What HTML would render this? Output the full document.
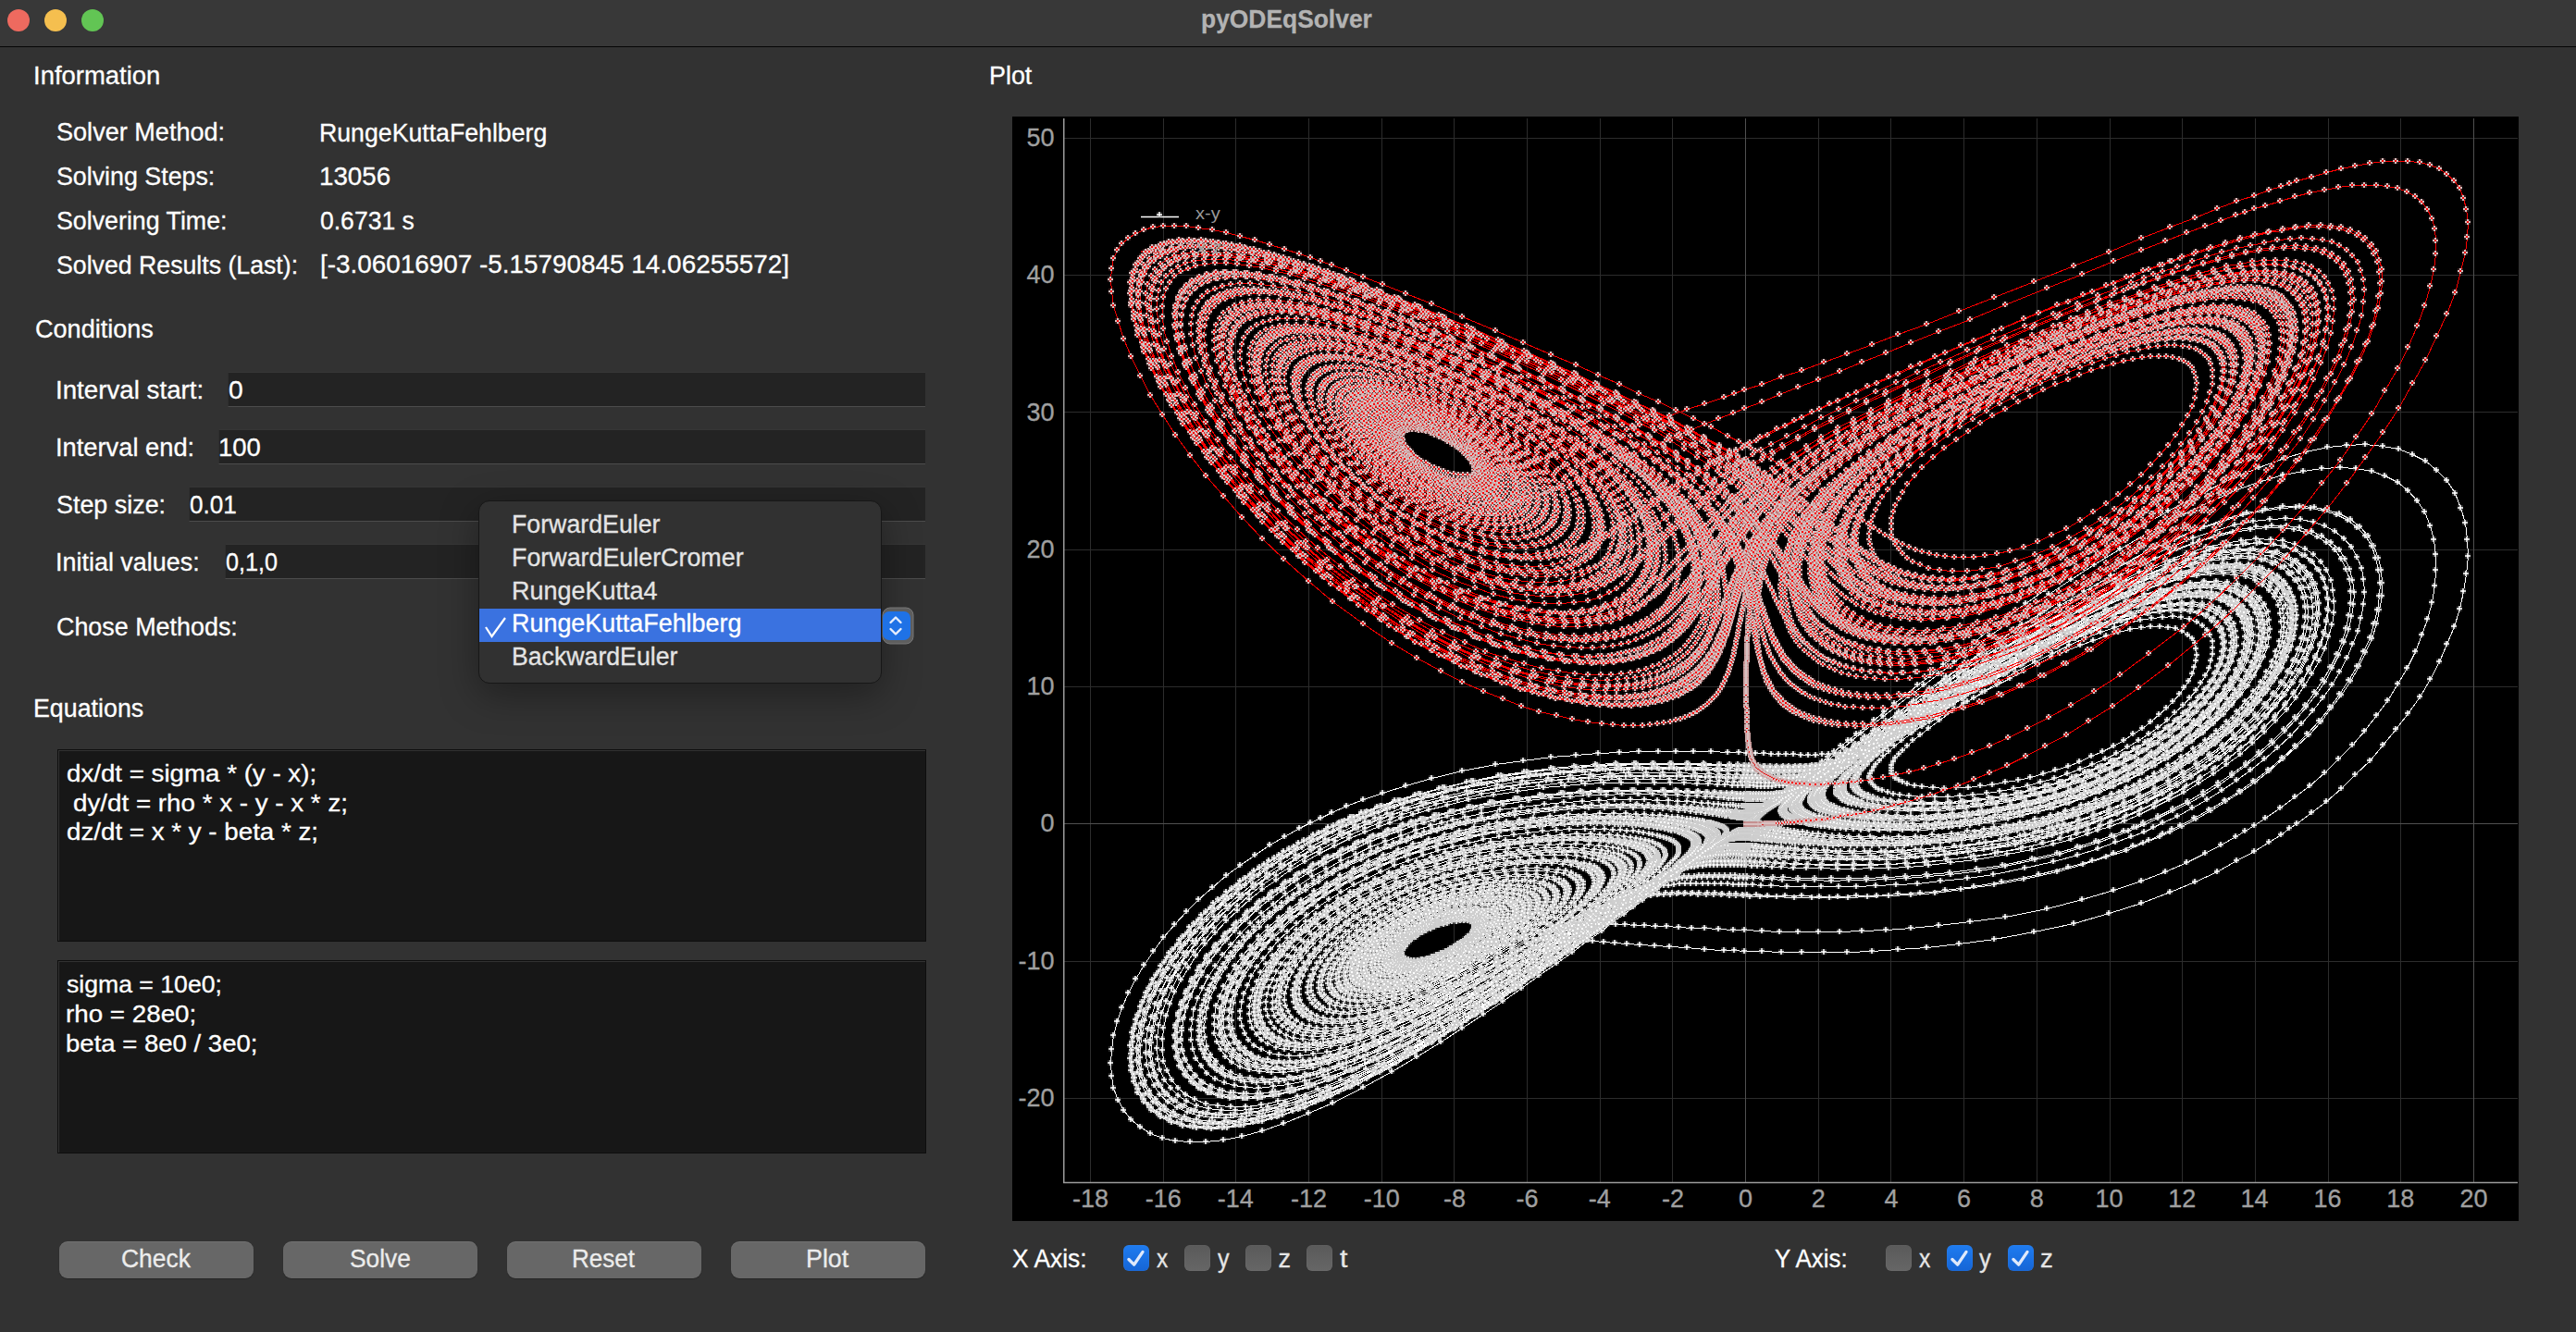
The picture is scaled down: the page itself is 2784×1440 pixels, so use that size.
<!DOCTYPE html>
<html><head><meta charset="utf-8"><title>pyODEqSolver</title>
<style>
html,body{margin:0;padding:0}
body{width:2784px;height:1440px;background:#323232;overflow:hidden;position:relative;font-family:"Liberation Sans",sans-serif;color:#fff}
.t{position:absolute;white-space:pre;line-height:1.117;transform-origin:0 0;-webkit-text-stroke:0.3px currentColor}
.titlebar{position:absolute;left:0;top:0;width:2784px;height:50px;background:#383838;border-bottom:1px solid #050505}
.tl{position:absolute;top:10px;width:24px;height:24px;border-radius:50%}
.field{position:absolute;right:1784px;height:38px;box-sizing:border-box;background:#232323;border-top:1px solid #363636;border-left:1px solid #2e2e2e;border-bottom:1.5px solid #4c4c4c}
.te{position:absolute;left:62px;width:939px;background:#171717;border:1px solid #0e0e0e;box-shadow:inset 1px 1px 0 #323232;box-sizing:border-box}
.btn{position:absolute;top:1342px;width:210px;height:40px;border-radius:9px;background:#676767;box-shadow:inset 0 1px 0 rgba(255,255,255,0.08), 0 1px 1px rgba(0,0,0,0.25)}
.popup{position:absolute;left:517px;top:541px;width:436px;height:198px;box-sizing:border-box;background:#313131;border:1px solid #171717;border-radius:12px;box-shadow:0 12px 40px rgba(0,0,0,0.35)}
.hl{position:absolute;left:518px;top:658px;width:434px;height:36px;background:#3a72e0}
.plotbg{position:absolute;left:1094px;top:126px;width:1628px;height:1194px;background:#000}
.plot{position:absolute;left:1094px;top:126px}
.ns{-webkit-text-stroke:0}
.cb{position:absolute;width:28px;height:28px;border-radius:6px;background:linear-gradient(#5a5a5a,#666);box-shadow:inset 0 0 0 0.5px rgba(255,255,255,0.06)}
.cb.on{background:linear-gradient(#1f7cf0,#1565d6)}
.cb svg{position:absolute;left:0;top:0}
</style></head><body>
<div class="titlebar"></div>
<div class="tl" style="left:8px;background:#ee6a5f"></div>
<div class="tl" style="left:48px;background:#f5bf4f"></div>
<div class="tl" style="left:88px;background:#62c554"></div>

<div class="field" style="left:246px;top:402px"></div>
<div class="field" style="left:236px;top:464px"></div>
<div class="field" style="left:204px;top:526px"></div>
<div class="field" style="left:243px;top:588px"></div>

<div class="te" style="top:810px;height:208px"></div>
<div class="te" style="top:1038px;height:209px"></div>

<div class="btn" style="left:64px"></div>
<div class="btn" style="left:306px"></div>
<div class="btn" style="left:548px"></div>
<div class="btn" style="left:790px"></div>

<div class="plotbg"></div>
<svg class="plot" width="1628" height="1194" viewBox="1094 126 1628 1194">
<defs>
<clipPath id="cpd"><rect x="1151" y="127" width="1571" height="1151"/></clipPath>
<marker id="mw" markerWidth="6" markerHeight="6" refX="3" refY="3" markerUnits="userSpaceOnUse" shape-rendering="crispEdges"><path d="M0 0h6v6h-6z" fill="#c8c8c8" fill-opacity="0.22"/><path d="M2 0h2v6h-2zM0 2h6v2h-6z" fill="#d0d0d0"/><path d="M2 2h2v2h-2z" fill="#ffffff"/></marker>
<marker id="mr" markerWidth="6" markerHeight="6" refX="3" refY="3" markerUnits="userSpaceOnUse" shape-rendering="crispEdges"><path d="M0 0h6v6h-6z" fill="#b46464" fill-opacity="0.3"/><path d="M2 0h2v6h-2zM0 2h6v2h-6z" fill="#d8c0c0"/><path d="M2 2h2v2h-2z" fill="#ff0000"/></marker>
<path id="dw" d="M1887 876l0 0 0 0 1 0 1 0 1 0 1 0 1 0 1 0 1-1 1 0 1 0 1 0 1-1 1 0 1 0 1-1 2 0 1-1 1-1 2-1 1-1 2-1 2-1 2-1 2-1 2-2 2-2 3-2 3-2 3-2 3-2 3-3 4-3 4-3 4-4 5-4 5-4 6-4 6-5 6-5 7-6 7-6 8-6 9-7 9-7 10-8 11-9 11-9 12-9 13-11 14-10 14-12 16-12 17-12 17-14 19-14 20-14 21-15 23-16 24-16 26-17 28-18 32-18 40-21 28-14 30-12 27-10 24-7 23-5 21-2 20-1 19 2 17 3 15 6 14 7 12 10 11 11 9 14 6 16 5 16 2 18 1 18 -2 19 -3 19 -4 19 -6 19 -8 19 -8 19 -10 19 -11 19 -13 18 -13 17 -14 17 -14 17 -16 15 -15 15 -16 14 -16 12 -16 12 -8 5 -9 7 -13 8 -16 10 -19 10 -21 12 -24 11 -27 11 -31 12 -35 11 -38 11 -43 9 -43 8 -38 5 -35 4 -31 2 -28 2 -27 1 -25 0 -24 0 -22 0 -21-1 -19 0 -11-1 -11 0 -21-1 -19-2 -19-1 -16-1 -16-1 -14-1 -13-1 -12-1 -12-1 -11-1 -10 0 -10-1 -9 0 -8-1 -8 0 -8 0 -7 0 -7 1 -6 0 -7 1 -6 0 -5 1 -6 1 -5 1 -6 1 -5 2 -5 1 -6 2 -5 1 -5 2 -5 1 -6 2 -5 1 -5 2 -5 1 -5 1 -4 1 -5 0 -4 1 -4 0 -3 0 -3-1 -3-1 -2-1 -1-1 -1-2 0-2 1-3 1-2 2-2 2-3 2-2 3-3 4-2 3-3 4-2 4-2 5-2 4-2 5-2 5-1 4-1 5-2 5 0 4-1 4 0 4 0 3 1 2 1 2 2 0 2 0 2 -1 2 -1 2 -2 3 -3 2 -3 3 -4 3 -4 2 -4 3 -4 2 -5 3 -5 2 -5 2 -5 2 -5 2 -5 1 -5 1 -4 1 -4 0 -3 0 -3-1 -3-1 -1-1 -2-2 0-2 0-2 1-2 1-3 2-2 2-3 3-2 3-3 4-2 4-3 4-2 4-2 5-3 4-2 5-1 5-2 5-1 5-2 5 0 5-1 4 0 4 0 3 1 3 1 2 1 1 2 0 2 -1 2 -1 3 -2 2 -3 3 -3 3 -3 3 -5 2 -4 3 -5 3 -5 3 -5 2 -5 2 -5 2 -6 2 -5 2 -5 1 -4 1 -4 0 -4 0 -4 0 -3-1 -2-1 -2-1 -1-2 0-3 1-2 1-2 1-3 3-3 2-2 3-3 4-3 3-2 5-3 4-2 5-3 4-2 5-2 5-2 6-2 5-1 5-1 5-1 5 0 5-1 4 1 3 0 3 2 2 1 1 2 0 2 -1 3 -2 2 -2 3 -3 3 -3 3 -4 3 -4 3 -5 3 -5 2 -5 3 -5 3 -6 2 -5 2 -6 2 -5 2 -5 1 -5 1 -5 1 -4 0 -3 0 -4-1 -2-1 -2-2 -1-2 0-2 0-3 1-2 2-3 2-3 2-2 3-3 4-3 4-3 4-3 4-2 5-3 5-2 5-2 5-2 6-2 5-2 6-1 5-1 5-1 5 0 5 0 4 1 3 0 3 2 1 2 1 2 -1 2 -1 3 -2 3 -2 3 -4 3 -3 3 -5 3 -4 3 -5 3 -6 3 -5 3 -6 3 -6 2 -6 2 -5 2 -6 2 -5 1 -5 1 -5 0 -4 0 -4 0 -3-1 -2-1 -2-2 -1-2 0-3 0-2 1-3 2-3 2-3 3-3 3-3 4-3 4-2 4-3 5-3 5-3 5-2 6-2 5-3 6-1 6-2 5-1 6-2 6 0 5-1 5 0 4 1 4 1 2 1 2 2 1 2 0 3 -2 3 -1 3 -3 3 -3 3 -4 3 -4 3 -5 3 -5 4 -6 3 -6 3 -6 3 -6 3 -6 2 -6 2 -6 2 -6 1 -5 1 -5 1 -5 0 -4 0 -3-1 -3-1 -2-2 -2-2 0-2 0-3 1-3 1-3 2-3 3-3 3-3 4-3 4-3 4-3 5-3 5-3 5-3 6-2 5-2 6-3 6-1 6-2 6-1 6-1 6-1 5 0 5 0 5 0 3 1 3 2 2 2 0 3 0 2 -2 3 -2 3 -2 3 -4 4 -4 3 -5 3 -5 4 -5 3 -6 4 -6 3 -7 3 -6 3 -7 3 -6 2 -7 2 -6 1 -5 1 -5 1 -5 0 -4 0 -4-1 -3-1 -2-2 -2-2 -1-3 0-2 1-3 2-3 2-4 2-3 4-3 3-3 4-4 5-3 5-3 5-3 5-3 6-2 6-3 6-2 7-2 6-2 6-2 6-1 7-1 5 0 6 0 5 0 4 1 3 2 3 2 1 2 0 3 -1 2 -2 4 -3 3 -3 3 -4 4 -4 3 -6 4 -5 4 -6 3 -7 4 -6 3 -7 3 -7 3 -7 3 -7 2 -6 2 -6 1 -6 1 -5 1 -5 0 -4 0 -4-1 -3-2 -2-2 -2-2 0-3 0-3 1-3 2-3 2-3 3-4 3-3 4-4 4-3 5-3 5-4 6-3 5-3 6-3 7-2 6-3 7-2 6-2 7-1 7-2 6-1 6 0 6 0 6 0 4 1 4 1 2 2 2 3 0 3 -1 3 -2 3 -2 3 -4 4 -4 3 -4 4 -6 4 -5 4 -7 4 -6 3 -7 4 -7 4 -8 3 -7 3 -7 2 -7 2 -7 2 -6 1 -6 1 -5 0 -5 0 -4-1 -3-1 -3-2 -2-2 -1-3 0-3 1-3 1-3 2-4 3-3 3-4 3-4 5-3 4-4 6-3 5-4 6-3 6-3 6-3 7-2 7-3 7-2 7-2 7-2 7-1 6-1 7 0 6 0 6 0 4 1 4 2 3 2 1 2 0 3 -1 3 -2 4 -2 3 -4 4 -4 4 -5 4 -6 4 -6 4 -7 4 -7 4 -7 4 -8 4 -7 3 -8 3 -8 3 -7 2 -7 2 -6 1 -6 1 -6 1 -5-1 -5 0 -3-1 -3-2 -3-3 -1-2 0-3 0-4 1-3 2-4 3-4 3-3 4-4 4-4 5-4 5-3 6-4 6-4 6-3 7-3 7-3 7-3 7-2 7-2 7-2 8-2 7-1 7 0 7-1 6 0 6 1 4 2 4 1 2 3 1 3 -1 3 -1 3 -2 4 -3 3 -4 4 -5 5 -5 4 -7 4 -6 4 -7 5 -8 4 -8 4 -8 4 -8 3 -8 4 -8 2 -8 3 -7 2 -7 1 -6 1 -6 0 -5 0 -5-1 -4-1 -3-2 -2-3 -1-3 -1-3 1-3 1-4 2-4 3-4 3-4 4-4 4-4 5-4 6-4 5-3 7-4 6-4 7-3 7-3 8-3 7-2 8-3 8-2 7-1 8-2 7-1 7 0 7 0 7 0 5 2 4 1 3 3 2 2 0 3 -1 4 -2 3 -3 4 -4 4 -4 5 -6 4 -6 5 -7 4 -7 5 -8 4 -8 5 -8 4 -9 4 -9 4 -8 3 -8 3 -8 2 -8 2 -7 1 -6 1 -6 0 -5 0 -5-1 -4-2 -3-2 -2-3 -1-3 -1-4 1-4 2-3 2-4 3-5 3-4 4-4 5-4 5-4 6-4 6-4 7-4 7-4 7-3 7-4 8-3 8-2 8-3 8-2 8-2 8-1 8-1 8-1 7 0 7 1 6 1 5 1 3 3 2 2 0 3 0 4 -2 3 -3 4 -3 5 -5 4 -5 5 -7 5 -7 4 -7 5 -8 5 -9 5 -9 5 -9 4 -9 4 -9 4 -9 3 -8 3 -8 2 -8 1 -7 1 -7 1 -6 0 -5-1 -5-1 -3-2 -3-3 -2-3 -1-3 0-4 1-4 2-4 3-5 3-4 4-5 4-4 5-4 6-5 6-4 6-4 7-4 8-4 7-4 8-3 8-3 9-3 8-3 9-2 8-2 9-1 8-1 8-1 8 0 7 0 7 2 5 1 3 3 2 2 1 3 0 4 -1 4 -3 4 -4 4 -4 5 -6 5 -6 5 -8 5 -8 5 -8 5 -9 6 -9 5 -10 4 -10 5 -10 4 -9 3 -9 4 -9 2 -8 2 -8 1 -7 1 -6 0 -6 0 -6-1 -4-2 -3-2 -3-3 -1-4 -1-4 1-4 1-4 2-5 3-4 4-5 4-5 5-4 6-5 6-5 6-4 7-5 8-4 7-4 9-3 8-4 9-3 8-3 9-3 9-2 9-2 9-1 9-2 8 0 9 0 7 0 7 2 6 1 4 3 2 2 1 3 0 4 -1 4 -3 4 -3 4 -5 5 -6 5 -6 5 -8 6 -8 6 -9 5 -10 6 -10 5 -10 6 -10 4 -11 5 -10 4 -10 4 -9 2 -9 3 -8 1 -8 2 -7 0 -7 0 -6-1 -5-2 -4-2 -3-3 -2-3 -1-4 0-4 1-5 2-5 2-4 4-5 4-5 5-5 5-5 6-5 6-5 7-4 8-5 8-4 8-5 9-3 9-4 9-3 9-3 10-3 9-3 10-1 9-2 9-1 9-1 9 0 8 1 7 1 6 2 4 2 3 3 1 3 0 3 -1 4 -2 4 -3 5 -4 4 -6 6 -7 5 -7 6 -9 6 -9 6 -11 6 -10 6 -11 6 -11 5 -11 5 -11 5 -11 4 -10 4 -9 2 -10 3 -8 1 -8 1 -7 0 -7 0 -6-2 -5-1 -4-3 -3-3 -1-4 -1-5 0-4 1-5 3-5 3-5 3-5 5-6 5-5 6-5 6-5 7-5 7-5 8-5 8-5 9-4 9-4 10-4 9-3 10-4 10-3 10-2 10-2 10-2 10-1 10-1 9 0 8 1 9 1 7 2 4 2 3 2 2 3 1 4 -1 3 -1 4 -3 4 -4 5 -5 5 -6 6 -8 6 -8 6 -10 7 -10 6 -11 7 -12 6 -12 7 -12 5 -12 6 -11 5 -11 4 -11 3 -10 3 -10 2 -9 2 -8 1 -7 0 -7-1 -6-1 -5-2 -5-3 -3-4 -1-4 -1-5 0-5 2-5 2-5 3-6 4-5 4-6 6-5 6-6 6-5 8-6 7-5 9-5 8-5 9-5 10-4 10-4 10-4 10-3 11-3 11-3 10-3 11-1 10-2 10-1 10 0 10 0 9 1 8 1 7 2 4 3 2 3 2 3 0 3 -1 3 -1 4 -3 5 -4 4 -5 6 -6 5 -8 7 -9 6 -11 8 -11 7 -12 7 -13 7 -13 7 -12 6 -13 6 -13 6 -12 4 -11 4 -11 3 -10 3 -10 2 -9 1 -8 0 -8-1 -6-1 -6-2 -5-3 -3-3 -3-5 -1-5 0-5 1-5 2-6 3-5 4-6 4-6 5-6 6-6 7-6 7-6 8-5 8-6 9-5 10-5 10-5 10-5 10-4 11-4 11-3 11-3 12-3 11-3 11-1 11-2 11-1 10 0 10 0 10 1 10 1 6 3 5 2 2 3 2 2 1 4 0 3 -2 4 -2 4 -3 4 -5 5 -5 6 -7 6 -9 6 -10 8 -12 8 -13 8 -13 8 -14 8 -14 7 -14 7 -14 7 -14 5 -12 5 -12 4 -12 3 -11 3 -10 2 -9 1 -9 0 -8-1 -7-1 -6-2 -4-4 -4-4 -3-4 -1-5 0-6 1-6 2-6 3-6 4-6 5-6 5-7 6-6 7-6 8-7 8-6 8-6 10-5 10-6 10-5 10-5 12-4 11-5 12-4 11-3 12-3 12-3 12-2 12-2 12-1 11-1 11 0 10 0 11 1 8 2 6 2 5 2 3 3 2 3 1 3 0 3 -1 3 -1 4 -3 5 -4 4 -5 5 -6 6 -7 6 -9 7 -11 8 -13 9 -15 9 -15 9 -16 9 -15 8 -16 8 -15 7 -14 6 -14 5 -13 4 -12 4 -12 3 -11 2 -10 1 -9 0 -8-1 -7-1 -7-3 -5-3 -4-4 -3-5 -2-6 0-6 1-6 2-6 3-7 4-7 4-6 6-7 6-7 7-7 8-7 8-6 9-6 10-7 10-5 11-6 11-5 12-6 11-4 13-5 12-4 13-3 13-3 12-3 13-2 13-2 12-1 12-1 12 0 11 1 12 1 8 1 6 2 5 3 4 2 2 3 2 2 0 3 0 4 -1 3 -2 4 -3 4 -4 5 -5 5 -6 5 -7 6 -9 7 -11 8 -14 10 -15 10 -17 10 -17 10 -18 10 -17 8 -17 8 -16 8 -15 6 -14 5 -14 4 -12 4 -12 2 -12 2 -10 0 -9 0 -9-1 -7-2 -6-3 -5-5 -4-5 -3-5 -1-6 0-7 2-7 2-7 4-7 4-7 5-8 6-7 7-7 7-8 9-7 9-7 9-7 11-6 11-7 11-6 12-5 12-6 13-5 13-4 13-5 14-3 13-4 14-3 14-2 13-2 13-1 13-1 13-1 12 0 13 1 9 1 9 2 6 2 5 2 3 2 3 2 2 3 1 3 0 3 0 3 -1 3 -3 4 -2 4 -4 4 -5 5 -6 5 -7 6 -8 7 -11 8 -13 9 -16 11 -16 10 -17 10 -18 11 -19 11 -20 10 -19 9 -17 8 -17 7 -16 5 -14 5 -14 4 -13 3 -12 1 -11 1 -10 0 -9-2 -8-2 -7-4 -5-4 -5-6 -2-6 -2-6 0-8 1-7 3-8 3-7 4-8 6-9 6-8 7-8 8-8 8-7 10-8 10-8 10-7 11-7 12-6 13-7 13-6 13-5 14-6 14-4 14-5 15-4 14-3 15-3 15-3 14-2 14-1 14-1 14-1 13 0 14 1 10 1 9 1 7 2 5 1 5 2 4 2 3 2 3 2 1 2 1 3 0 3 0 2 -1 3 -2 4 -2 3 -3 4 -4 4 -5 5 -6 5 -7 6 -9 7 -12 9 -15 10 -15 11 -17 11 -17 10 -18 11 -19 12 -21 11 -23 12 -20 10 -20 9 -19 8 -17 6 -16 5 -14 4 -14 3 -13 1 -12 1 -11-1 -10-2 -8-3 -7-4 -6-5 -4-6 -3-7 -2-7 0-8 1-9 3-8 3-9 5-9 5-9 7-9 7-8 8-9 9-9 10-8 11-9 11-8 12-7 12-8 13-7 14-7 14-6 14-6 15-5 16-5 15-5 16-4 15-3 16-3 16-3 15-2 15-2 15-1 15 0 15-1 14 1 12 0 9 1 8 1 7 1 6 2 5 1 4 1 4 2 3 1 3 2 2 2 2 2 1 1 1 3 0 2 0 2 -1 2 -1 3 -2 3 -3 3 -3 3 -3 4 -5 4 -5 5 -7 6 -9 7 -13 9 -13 10 -13 9 -15 10 -16 11 -18 11 -18 11 -19 12 -20 12 -22 13 -23 13 -25 12 -23 11 -22 9 -19 8 -18 5 -17 5 -16 3 -14 2 -13 0 -12 0 -11-2 -10-3 -8-5 -7-5 -5-7 -4-8 -2-8 -1-9 1-10 2-9 3-10 5-10 5-11 7-10 7-10 9-10 9-10 10-10 11-9 12-9 12-9 13-9 14-8 14-8 15-7 15-7 15-6 16-6 17-6 16-5 17-4 16-4 17-4 16-2 16-3 15-2 14-1 13-1 9-1 11 0 11-1 11 0 10 0 8 0 8 0 7 1 6 0 5 0 5 1 2 0 2 0 4 1 4 0 3 0 4 1 4 1 4 0 4 1 3 0 4 1 3 1 3 1 3 1 2 0 3 1 2 1 2 1 1 1 2 1 1 1 1 1 1 1 0 1 1 1 0 2 0 1 -1 1 0 2 -1 1 -1 2 -2 2 -2 2 -2 2 -3 3 -3 2 -4 4 -4 3 -6 5 -6 5 -7 4 -7 5 -7 6 -8 5 -8 7 -10 6 -10 7 -11 8 -13 9 -14 10 -16 11 -18 12 -19 13 -20 13 -21 13 -21 14 -24 14 -25 14 -28 15 -28 14 -26 11 -24 10 -21 7 -20 5 -18 4 -17 2 -15 0 -14-1 -12-2 -11-4 -10-5 -8-7 -7-8 -5-10 -3-10 -1-11 0-11 1-12 3-12 5-12 5-13 7-12 7-12 9-13 10-12 10-12 12-11 12-12 13-11 14-10 14-10 15-10 16-9 16-8 16-8 16-8 17-6 16-6 16-6 8-3 10-2 15-5 16-4 21-4 23-5 27-4 26-3 22-3 21-1 19-1 18-1 18 0 17 0 15 1 14 0 12 1 11 0 9 1 8 0 7 1 6 0 5 0 5 1 4 0 4 0 4 0 1 0 1 0 2 0 3 0 3 0 3 0 2 0 3 0 3 0 3 0 3 0 3 0 3-1 2 0 3-1 3 0 3-1 2-1 3-1 3-1 3-1 3-1 3-2 3-1 4-2 3-2 4-2 4-2 4-3 5-3 4-3 6-3 5-4 6-4 7-5 7-4 8-6 9-6 9-6 11-7 12-8 12-9 15-10 17-11 19-12 19-12 20-13 22-13 23-14 25-13 28-15 26-12 24-11 22-8 20-7 19-5 17-3 15-2 15 0 13 1 12 3 10 4 9 5 7 6 6 8 4 9 3 10 1 10 -1 11 -2 11 -3 12 -5 11 -5 12 -7 11 -8 12 -9 12 -9 11 -11 11 -11 11 -13 10 -13 10 -13 10 -15 9 -14 9 -16 9 -16 8 -16 7 -16 7 -17 6 -16 6 -17 5 -15 4 -10 3 -10 2 -14 3 -17 4 -20 3 -23 3 -23 3 -20 1 -19 2 -18 0 -17 0 -16 0 -14 0 -12 0 -11-1 -10-1 -8 0 -8-1 -7 0 -7-1 -5 0 -5-1 -5 0 -4-1 -4 0 -3 0 -3-1 -3 0 -2 0 -3 0 -2-1 -2 0 -1 0 -1 0 -1 0 -1 0 -1 0 -1 0 -2 0 -1 0 -1 0 -2 0 -1 0 -2 1 -1 0 -2 0 -1 0 -1 0 -2 1 -1 0 -2 1 -1 0 -2 1 -1 0 -2 1 -2 1 -1 1 -2 1 -2 1 -2 1 -2 1 -3 2 -2 1 -3 2 -2 2 -4 2 -3 2 -3 3 -4 2 -5 3 -4 4 -5 3 -5 4 -6 4 -7 5 -7 5 -7 5 -8 6 -10 7 -9 7 -12 8 -12 8 -14 10 -15 11 -18 13 -19 13 -19 13 -21 13 -22 14 -22 15 -25 14 -26 15 -29 16 -30 15 -28 12 -25 10 -22 7 -20 5 -19 4 -17 2 -16 0 -14-1 -13-3 -12-5 -10-6 -9-7 -7-9 -5-11 -3-11 -2-12 0-12 2-13 3-13 4-14 5-13 7-14 8-13 9-14 10-13 11-13 12-13 12-12 14-12 14-11 15-11 15-10 16-10 16-9 16-9 17-7 16-8 15-6 11-4 11-4 17-6 18-5 22-6 26-6 31-6 26-4 28-4 24-2 22-1 21-1 19-1 19 0 18 0 18 0 16 0 15 1 12 0 10 1 8 0 8 0 5 1 3 0 3 0 4 0 5 0 5 0 5 0 5 0 4 0 5 0 5 0 5 0 4-1 5 0 4-1 4 0 5-1 4-1 4-1 4-2 4-1 5-2 4-1 5-2 4-3 5-2 5-3 6-3 6-3 6-3 6-4 7-5 8-5 8-5 9-5 10-7 11-7 12-7 13-8 15-10 16-10 19-11 20-12 22-12 23-12 24-12 22-11 21-8 18-7 17-5 17-5 15-2 14-2 12-1 12 1 11 2 9 3 8 4 6 6 5 6 4 8 1 8 1 9 -1 9 -2 9 -4 10 -4 9 -6 10 -6 10 -8 10 -8 9 -9 10 -10 9 -11 9 -12 9 -12 9 -13 8 -13 8 -14 7 -15 7 -15 7 -15 6 -16 6 -16 5 -17 4 -16 5 -16 3 -17 3 -16 3 -16 2 -15 2 -15 1 -15 1 -15 1 -12 0 -12 0 -9-1 -8 0 -8-1 -6 0 -7-1 -5-1 -6 0 -5-1 -4-1 -5-1 -3-1 -4-1 -3-1 -3-1 -2-1 -3-1 -1-2 -2-1 -1-1 -1-2 -1-1 0-2 0-1 0-2 1-2 1-2 1-2 2-2 2-2 3-3 3-3 4-4 5-4 6-4 7-6 9-6 8-6 9-7 9-7 11-7 11-8 13-9 14-10 16-11 18-12 19-12 20-13 21-12 22-14 23-13 26-14 28-14 25-12 24-10 21-7 19-6 18-4 17-3 15-1 14 0 13 1 11 3 10 5 8 5 7 7 5 9 4 9 2 10 0 10 -1 11 -2 11 -4 12 -5 11 -6 12 -7 11 -8 12 -9 11 -10 12 -11 11 -12 10 -12 11 -14 10 -14 9 -14 9 -15 9 -16 8 -15 8 -17 7 -16 7 -17 6 -16 5 -17 5 -15 4 -10 3 -11 2 -17 4 -18 3 -21 4 -24 2 -21 2 -20 2 -18 1 -17 0 -17 0 -14 0 -13-1 -12 0 -10-1 -9 0 -8-1 -8 0 -6-1 -6-1 -6 0 -4-1 -5 0 -3 0 -4-1 -3 0 -3 0 -3-1 -2 0 -2 0 -2 0 -2 0 -2 0 -1 0 0 0 -1 0 -2 0 -1 0 -1 0 -1 0 -2 0 -1 0 -2 0 -1 0 -1 0 -2 0 -1 1 -1 0 -2 0 -1 1 -2 0 -1 1 -2 0 -1 1 -2 1 -1 1 -2 0 -2 1 -2 1 -2 2 -2 1 -2 1 -3 2 -2 2 -3 2 -3 2 -4 2 -3 3 -4 2 -4 3 -5 4 -5 3 -5 4 -6 4 -7 5 -7 5 -7 6 -9 6 -9 6 -10 7 -11 8 -12 9 -14 10 -16 11 -18 13 -19 13 -20 13 -20 14 -22 14 -23 14 -24 15 -27 15 -29 16 -30 14 -28 13 -25 9 -22 7 -20 6 -19 3 -17 2 -16 0 -14-1 -13-3 -12-5 -10-6 -9-7 -7-10 -5-10 -3-11 -2-12 0-13 2-13 3-13 4-14 6-13 7-14 7-14 9-13 11-13 10-13 12-13 13-12 14-12 14-11 15-11 15-11 16-9 16-10 16-8 16-8 16-7 15-6 13-5 12-4 18-6 19-6 23-6 26-6 33-6 27-4 27-3 23-2 22-2 21-1 19 0 18 0 18 0 18 0 16 0 15 1 12 0 9 1 8 0 7 0 5 1 3 0 4 0 4 0 5 0 5 0 5 0 5 0 5 0 5 0 5 0 5-1 4 0 5-1 4 0 4-1 5-1 4-1 4-1 5-1 4-2 5-2 4-2 5-2 5-2 5-3 5-3 6-3 6-3 6-4 7-4 8-5 8-5 9-6 9-6 11-6 11-8 13-8 15-9 16-10 18-11 20-11 20-12 23-12 25-13 22-10 20-8 19-7 17-6 16-4 15-3 14-2 13-1 12 0 11 2 9 3 8 4 7 5 5 7 3 7 2 8 1 9 -1 9 -2 9 -3 9 -4 10 -5 9 -7 10 -7 10 -8 9 -9 10 -10 9 -11 9 -11 9 -12 8 -13 8 -13 8 -14 8 -15 7 -15 6 -15 6 -16 6 -16 5 -16 5 -16 4 -17 4 -16 3 -16 3 -16 2 -16 1 -15 2 -15 1 -15 0 -13 0 -12 0 -9 0 -8-1 -8-1 -7 0 -6-1 -6-1 -5-1 -4-1 -5-1 -4-1 -3-1 -4-1 -2-1 -3-1 -2-1 -2-2 -1-1 -1-2 -1-1 -1-2 0-1 0-2 1-2 1-2 1-2 2-2 2-3 3-3 3-3 4-3 5-4 6-5 7-6 8-6 9-6 9-7 10-7 10-7 12-9 13-9 15-10 17-11 19-12 19-13 20-12 21-13 22-13 25-14 27-14 25-13 25-10 22-9 20-7 19-5 17-3 16-3 14 0 13 1 12 2 11 3 9 5 7 6 7 8 4 8 3 10 1 10 0 10 -2 11 -3 11 -4 11 -6 12 -6 11 -8 11 -8 12 -10 11 -10 11 -11 10 -12 11 -13 10 -13 10 -14 9 -15 9 -15 8 -16 8 -16 7 -16 7 -17 6 -16 6 -17 5 -16 5 -15 3 -11 3 -11 2 -17 4 -18 2 -21 3 -23 3 -20 1 -18 1 -18 1 -16 0 -15 0 -13 0 -12-1 -10 0 -9-1 -8-1 -8 0 -7-1 -6-1 -5 0 -5-1 -5 0 -4-1 -3 0 -4-1 -3 0 -2 0 -3-1 -2 0 -2 0 -2 0 -2 0 -2-1 -1 0 -1 0 -1 0 -2 0 -1 0 0 0 -1 0 0 0 -1 0 -1 0 -1 0 -1 0 -1 0 -1 0 -1 0 -1 0 -1 1 -1 0 -1 0 0 0 -1 1 -1 0 -1 0 -2 1 -1 0 -1 1 -1 0 -1 1 -1 1 -2 0 -1 1 -2 1 -1 1 -2 1 -2 2 -2 1 -2 2 -3 1 -2 2 -3 2 -3 2 -3 3 -4 2 -4 3 -4 3 -4 3 -5 4 -6 4 -6 4 -6 5 -7 5 -7 5 -8 6 -9 7 -10 7 -11 8 -12 9 -14 10 -15 11 -18 13 -18 12 -20 14 -20 13 -21 14 -22 15 -24 15 -25 15 -27 16 -32 17 -30 14 -25 11 -25 10 -23 7 -20 5 -19 3 -18 2 -16 0 -15-1 -14-4 -12-5 -10-6 -9-8 -7-10 -6-11 -3-12 -2-13 0-13 1-14 3-14 5-14 5-15 7-14 8-14 9-15 11-14 11-13 12-14 13-13 14-12 14-12 15-12 15-11 16-10 16-9 17-9 16-8 15-8 7-3 9-3 15-7 16-5 20-7 22-7 26-7 31-7 31-5 28-4 28-4 24-2 23-1 22-1 20-1 19 0 19 0 18 0 18 1 16 0 11 1 9 0 7 0 5 0 5 0 5 1 6 0 7 0 6 0 7 0 6 0 6 0 6 0 6 0 6 0 6-1 5-1 5 0 6-1 5-1 5-1 5-2 5-1 5-2 5-2 6-2 5-3 6-3 6-3 7-3 6-4 7-4 8-4 8-5 9-5 9-6 11-6 11-7 13-7 13-8 15-9 17-9 18-10 19-10 19-10 19-9 18-8 17-6 16-6 16-4 14-4 13-2 12-2 12 0 10 1 9 2 8 3 7 4 5 5 4 6 2 7 1 7 0 8 -1 8 -3 8 -4 9 -4 8 -6 9 -7 9 -7 8 -8 9 -9 8 -10 8 -11 8 -11 8 -12 7 -12 7 -13 7 -14 6 -14 6 -14 5 -15 6 -15 4 -15 4 -15 4 -16 3 -15 3 -15 2 -15 2 -15 1 -14 1 -15 0 -14 0 -10-1 -11-1 -8-1 -7-1 -6-1 -5-2 -4-1 -3-2 -3-2 -3-2 -1-2 -2-2 0-2 0-3 0-2 1-3 2-3 2-3 3-4 4-3 4-5 6-5 6-5 9-7 11-8 15-11 15-11 16-11 17-10 18-12 18-11 20-12 21-12 23-12 24-12 21-11 21-8 19-8 17-5 17-5 15-3 14-2 13-1 11 1 11 1 9 3 8 4 7 5 5 6 4 8 2 8 1 8 -1 9 -2 9 -3 10 -4 9 -5 10 -6 9 -8 10 -8 10 -9 9 -10 9 -10 9 -12 9 -12 9 -12 8 -14 8 -14 7 -14 7 -15 7 -15 6 -16 6 -16 5 -16 5 -16 4 -17 3 -16 4 -16 2 -16 3 -16 1 -15 2 -15 0 -15 1 -13 0 -10 0 -10 0 -9-1 -7-1 -7 0 -7-1 -5-1 -6-1 -5-1 -4 0 -4-2 -4-1 -3-1 -3-1 -2-1 -3-1 -1-2 -2-1 -1-1 -1-2 0-2 -1-1 1-2 0-2 1-2 1-2 2-2 2-3 3-2 3-3 4-4 4-4 6-5 7-5 9-7 9-6 9-7 10-7 11-8 12-8 13-9 15-10 17-12 19-12 19-12 20-13 21-13 23-13 24-14 27-14 26-12 24-11 22-8 20-7 19-5 17-3 15-2 15-1 13 1 12 2 10 4 9 5 8 6 6 7 4 9 3 9 1 10 -1 11 -1 11 -3 11 -5 11 -5 11 -7 12 -7 11 -9 11 -9 12 -11 11 -11 10 -12 10 -13 11 -13 9 -15 9 -14 9 -15 8 -16 8 -16 8 -17 6 -16 7 -17 5 -16 5 -16 5 -16 4 -13 3 -11 2 -18 3 -18 3 -22 3 -22 2 -19 1 -19 1 -17 1 -16 0 -15 0 -12-1 -11 0 -10-1 -9 0 -8-1 -7-1 -7 0 -6-1 -5 0 -5-1 -4 0 -4-1 -4 0 -3-1 -3 0 -3 0 -2-1 -2 0 -2 0 -2 0 -2-1 -2 0 -1 0 -1 0 -1 0 -2 0 0 0 -1 0 0 0 -1 0 -1 0 -1 0 -1 0 -1 0 -1 0 0 0 -1 0 -1 0 -1 0 -1 1 -1 0 -1 0 -1 0 -1 1 -1 0 -1 0 -1 1 -1 0 -1 1 -1 1 -2 0 -1 1 -1 1 -2 1 -1 1 -2 1 -2 1 -2 1 -2 2 -2 2 -3 1 -3 2 -3 2 -3 3 -3 2 -4 3 -4 3 -4 3 -5 3 -5 4 -6 4 -6 5 -7 5 -7 5 -8 6 -8 6 -10 7 -10 8 -12 8 -13 10 -15 10 -17 13 -18 12 -19 13 -19 14 -21 14 -22 14 -23 15 -24 15 -27 15 -29 17 -32 16 -30 13 -26 11 -23 8 -21 5 -20 4 -18 3 -17 0 -15-1 -14-3 -12-4 -11-6 -10-8 -7-9 -6-11 -4-12 -3-13 0-13 1-13 2-15 4-14 5-14 7-15 8-14 9-14 9-14 11-14 12-14 13-13 13-13 15-12 14-11 16-12 16-10 16-10 16-9 16-8 16-8 9-4 11-5 14-5 17-7 19-6 22-7 26-7 31-7 32-6 28-4 28-3 25-2 23-2 21-1 21-1 19 0 19 0 18 0 18 1 16 0 11 1 9 0 7 0 5 1 5 0 5 0 6 0 7 0 7 1 6 0 7 0 6 0 6-1 6 0 6 0 5-1 6 0 5-1 6-1 5-1 5-1 5-1 5-2 6-2 5-2 5-2 6-3 6-2 6-3 6-4 7-3 7-4 8-5 8-5 9-5 9-6 11-6 11-7 13-7 13-8 15-9 17-9 18-10 19-10 19-9 18-9 18-8 17-6 16-5 15-5 14-3 13-2 12-2 11 0 10 1 9 2 8 3 7 4 5 6 4 6 2 7 1 7 0 8 -2 8 -3 8 -4 8 -4 9 -6 8 -7 9 -7 8 -9 9 -9 8 -10 8 -10 8 -11 7 -12 8 -13 6 -13 7 -13 6 -14 6 -14 6 -15 5 -15 4 -15 4 -16 4 -15 3 -15 3 -15 2 -15 1 -14 1 -15 1 -14 0 -14 0 -10-1 -10-1 -8-1 -7-1 -5-2 -5-1 -4-2 -4-2 -2-1 -2-2 -2-3 -1-2 0-2 0-3 1-2 1-3 2-3 3-4 3-3 4-4 5-5 6-5 8-6 9-8 15-10 15-11 15-10 17-11 17-11 18-12 19-11 21-12 22-12 24-13 22-11 21-9 19-7 18-6 16-5 16-4 14-2 13-1 12 0 11 1 10 2 8 4 7 5 6 6 4 7 3 7 1 8 0 9 -2 9 -3 9 -4 10 -5 9 -6 10 -6 10 -8 9 -9 9 -10 10 -10 9 -11 9 -12 8 -12 8 -13 8 -14 8 -14 7 -15 6 -15 7 -16 5 -15 6 -16 4 -17 5 -16 4 -16 3 -17 3 -16 2 -15 2 -15 1 -15 1 -16 1 -15 0 -11 0 -10-1 -9 0 -7-1 -7-1 -6 0 -6-1 -5-1 -5-1 -4-1 -4-1 -4-2 -3-1 -2-1 -3-1 -2-2 -1-1 -2-2 0-1 -1-2 0-1 0-2 1-2 1-2 1-2 2-3 2-2 2-3 4-3 4-4 5-4 6-5 7-6 8-6 10-7 9-7 11-7 11-8 13-9 13-9 16-11 18-12 19-12 19-12 21-13 22-13 23-13 25-14 27-13 25-12 23-9 20-8 19-5 18-4 16-3 15-1 13 0 13 1 11 3 9 4 8 6 7 7 5 8 4 9 2 9 0 10 -1 11 -3 11 -3 11 -5 11 -6 11 -7 11 -8 11 -9 12 -10 10 -11 11 -12 10 -12 10 -13 10 -14 9 -14 9 -15 9 -16 8 -15 7 -17 7 -16 6 -17 6 -16 6 -17 4 -16 5 -15 3 -12 3 -13 2 -18 3 -18 3 -22 2 -20 2 -19 1 -17 0 -17 1 -15-1 -12 0 -12 0 -10-1 -9 0 -8-1 -7-1 -7 0 -6-1 -5-1 -5 0 -4-1 -4 0 -4-1 -4 0 -3-1 -2 0 -3-1 -2 0 -2 0 -2 0 -2-1 -2 0 -1 0 -2 0 -1-1 -1 0 -1 0 -1 0 -1 0 -1 0 0 0 -1 0 -1 0 0 0 -1 0 0 0 0 0 -1 0 0 0 -1 0 0 0 -1 0 0 0 -1 0 0 0 -1 0 0 0 -1 0 -1 0 0 1 -1 0 0 0 -1 0 -1 1 0 0 -1 0 -1 1 0 0 -1 0 -1 1 -1 1 -1 0 -1 1 -1 1 -1 1 -2 0 -1 1 -2 2 -1 1 -2 1 -2 1 -2 2 -2 2 -3 1 -3 2 -2 3 -4 2 -3 2 -4 3 -4 3 -4 3 -5 4 -5 4 -5 4 -6 4 -7 5 -7 6 -8 6 -8 6 -10 7 -10 8 -12 8 -12 10 -15 10 -17 13 -17 12 -19 13 -19 14 -20 14 -21 14 -23 15 -23 15 -26 16 -27 16 -31 17 -33 17 -26 11 -27 11 -23 8 -22 6 -20 4 -19 2 -17 0 -16-1 -14-3 -13-5 -11-7 -10-8 -8-10 -6-11 -5-13 -2-13 -1-14 1-15 2-15 4-15 5-15 7-16 8-15 9-15 10-15 11-15 12-14 13-14 13-13 15-13 15-13 15-11 16-11 16-11 16-9 16-9 12-6 11-5 12-6 16-7 18-7 21-7 25-8 28-8 33-8 36-7 30-4 30-4 27-2 24-2 23-1 21-1 21 0 19 0 19 0 19 0 18 1 12 0 8 1 5 0 5 0 9 0 8 1 8 0 8 0 8 0 8 1 8 0 8 0 7-1 7 0 6 0 7-1 6-1 6-1 6-1 6-1 6-1 6-2 6-2 6-2 6-2 7-3 6-3 7-3 7-4 7-3 8-5 8-4 9-5 10-5 10-6 11-6 12-7 13-7 14-7 15-8 15-8 15-7 16-7 15-6 14-5 14-5 13-4 13-3 12-2 10-1 10 0 9 1 8 1 7 3 6 4 5 4 3 5 1 6 1 7 -1 6 -2 7 -2 7 -4 8 -5 7 -5 7 -7 8 -7 7 -8 7 -9 8 -9 7 -10 6 -10 7 -11 6 -12 6 -12 5 -13 6 -12 5 -14 4 -13 4 -14 4 -13 3 -14 2 -14 3 -13 1 -13 2 -13 0 -13 1 -12-1 -12-1 -8-1 -8-2 -5-2 -4-2 -4-2 -2-3 -2-2 0-3 0-3 0-3 2-4 2-4 4-4 4-4 5-5 6-6 8-6 9-7 12-9 14-10 16-10 16-10 18-11 18-11 21-11 19-9 18-9 18-8 16-6 15-5 14-5 14-3 12-2 12-1 11-1 9 1 9 2 8 3 6 4 5 5 3 5 3 7 0 7 0 7 -2 7 -2 8 -4 8 -5 8 -5 8 -7 8 -7 8 -9 8 -8 8 -10 8 -10 7 -11 7 -12 7 -12 7 -12 6 -14 6 -13 5 -14 5 -14 5 -15 4 -14 4 -15 3 -15 3 -14 2 -15 2 -14 1 -13 1 -14 0 -14 0 -14-1 -10-1 -7-1 -6-2 -6-2 -4-1 -3-2 -3-3 -2-2 -1-2 -1-3 0-2 1-3 2-3 2-4 2-3 4-4 4-5 6-5 6-6 8-6 11-8 13-10 16-10 16-11 16-11 18-11 19-11 20-11 21-12 22-11 21-10 19-8 17-7 17-5 15-5 15-3 13-2 13-1 11 0 10 1 9 2 8 4 7 4 5 6 4 7 2 7 1 7 -1 9 -2 8 -2 9 -4 8 -5 9 -6 9 -7 9 -8 9 -9 9 -9 9 -10 8 -11 8 -12 8 -12 8 -13 7 -13 7 -14 6 -14 6 -15 6 -15 5 -15 5 -16 5 -16 3 -16 4 -15 2 -16 3 -15 2 -15 1 -15 1 -15 0 -15 0 -11 0 -11-1 -9-1 -7-1 -7-1 -5-1 -5-1 -4-2 -4-1 -3-2 -3-1 -2-2 -2-2 -1-2 0-2 0-2 0-3 1-2 1-3 2-2 2-4 3-3 4-4 5-4 6-5 7-6 9-7 13-10 13-9 14-9 14-10 17-11 17-11 18-12 20-12 20-12 22-12 23-13 25-13 23-10 22-10 19-7 18-6 17-4 15-3 15-2 13 0 12 0 11 2 9 4 8 4 7 6 5 7 4 8 2 8 0 9 0 9 -2 10 -4 10 -4 10 -6 10 -6 11 -8 10 -8 10 -10 10 -10 10 -11 9 -11 9 -13 9 -13 9 -14 8 -14 8 -15 7 -15 7 -16 6 -16 6 -16 6 -16 5 -17 4 -17 4 -16 3 -16 3 -16 3 -15 2 -14 1 -13 1 -10 1 -14 1 -11 0 -11 0 -10 0 -8 0 -8-1 -7 0 -6 0 -5-1 -5 0 -2 0 -3-1 -3 0 -4 0 -3-1 -4 0 -4-1 -3-1 -4 0 -3-1 -3-1 -3 0 -3-1 -3-1 -2-1 -2-1 -2-1 -2 0 -2-1 -1-1 -1-1 -1-1 -1-2 -1-1 0-1 0-1 0-1 1-2 0-1 1-2 2-1 1-2 2-2 2-2 3-3 3-3 4-3 5-4 6-4 6-5 6-5 7-5 7-5 8-5 8-7 10-6 10-7 11-8 13-9 14-10 16-11 18-12 19-13 19-13 21-13 22-13 23-14 25-15 27-15 29-14 26-12 25-9 21-8 20-5 19-4 16-2 16-1 14 1 13 2 11 4 10 5 8 7 7 8 5 9 3 10 2 11 0 12 -1 11 -3 13 -4 12 -5 12 -7 13 -7 12 -9 13 -10 12 -10 12 -12 12 -12 11 -13 11 -14 11 -14 10 -15 9 -15 9 -16 9 -16 8 -17 8 -16 6 -17 7 -15 5 -9 3 -10 3 -15 4 -17 5 -20 4 -23 5 -28 4 -26 4 -22 2 -21 1 -20 1 -18 1 -18 0 -17 0 -16 0 -13-1 -13 0 -11-1 -9 0 -8-1 -7 0 -7-1 -5 0 -5 0 -4 0 -4 0 -3-1 -1 0 -2 0 -3 0 -3 0 -3 0 -3 0 -3 0 -3 0 -3 0 -3 1 -3 0 -3 0 -3 1 -2 0 -3 1 -3 0 -3 1 -3 1 -3 1 -3 1 -3 1 -3 2 -3 1 -4 2 -3 2 -4 2 -4 2 -4 3 -5 3 -4 3 -6 3 -5 4 -6 4 -7 4 -7 5 -8 6 -9 6 -9 6 -11 7 -11 8 -13 8 -14 10 -17 11 -19 12 -19 12 -20 13 -22 13 -23 13 -25 14 -28 15 -25 12 -25 10 -21 8 -20 7 -18 4 -17 3 -16 2 -14 0 -13-1 -11-3 -10-3 -9-6 -7-6 -6-8 -4-9 -3-10 0-10 0-11 2-11 4-11 4-11 6-12 7-11 8-12 9-11 9-11 11-11 11-11 13-10 13-10 13-10 15-9 14-9 16-8 16-8 16-7 16-7 17-6 16-6 17-5 16-4 11-3 12-3 13-2 18-4 19-3 23-3 22-2 19-1 19-1 17-1 17 0 15 0 13 1 11 0 10 1 10 0 8 1 7 0 7 1 6 1 6 0 4 1 5 0 4 1 3 0 4 0 3 1 2 0 3 0 2 0 2 1 2 0 1 0 2 0 1 0 2 0 0 0 1 0 1 0 1 0 1 0 1 0 1 0 1 0 1 0 1 0 1 0 2 0 1-1 1 0 1 0 1 0 2-1 1 0 1-1 1 0 2-1 1-1 1 0 2-1 1-1 2-1 2-1 2-1 2-1 2-2 2-2 3-1 3-2 3-2 3-2 3-3 4-3 4-3 5-3 4-3 6-4 5-4 6-5 7-4 7-6 8-6 9-6 10-7 10-8 12-8 13-9 15-11 17-12 19-13 19-13 20-14 21-13 22-15 23-14 25-15 27-16 32-16 29-15 24-10 25-10 23-7 20-5 19-3 17-2 16 0 14 2 14 3 11 5 10 6 9 8 7 10 5 11 4 11 1 13 0 13 -2 13 -3 14 -4 14 -6 14 -7 14 -8 14 -9 13 -10 14 -11 13 -12 13 -13 13 -14 12 -14 12 -15 11 -15 10 -16 10 -17 10 -16 8 -16 8 -16 7 -10 5 -11 4 -13 5 -17 6 -20 6 -22 7 -27 6 -32 7 -28 4 -29 4 -25 2 -23 2 -22 1 -20 1 -19 0 -19 0 -18 0 -18 0 -16-1 -11 0 -12 0 -9-1 -7 0 -4 0 -4 0 -5-1 -5 0 -6 0 -6 0 -5 0 -6 0 -6 0 -5 0 -5 1 -6 0 -5 0 -5 1 -4 1 -5 1 -5 1 -5 1 -4 1 -5 2 -5 1 -5 2 -5 2 -5 3 -5 2 -6 3 -6 3 -6 4 -7 4 -7 4 -8 5 -8 5 -9 5 -10 6 -10 7 -12 7 -13 8 -15 9 -16 9 -18 11 -19 11 -22 11 -22 12 -21 9 -19 9 -18 7 -17 6 -16 5 -15 3 -14 3 -13 1 -11 0 -11-1 -10-2 -8-4 -7-4 -6-5 -4-7 -2-7 -1-8 0-8 1-9 3-9 4-9 5-9 5-9 7-9 8-9 8-9 10-9 10-9 11-8 11-8 12-8 13-8 13-7 14-6 15-7 14-6 16-5 15-5 16-5 16-4 16-3 16-4 16-2 15-2 15-2 15-1 15-1 16 0 14 0 12 1 9 1 8 1 7 1 6 1 5 1 5 1 4 1 4 2 3 1 3 2 2 1 2 2 1 2 1 2 0 2 0 2 0 2 -1 2 -2 3 -2 2 -2 3 -3 4 -4 3 -5 5 -5 4 -8 6 -9 7 -10 8 -12 8 -12 9 -13 9 -14 10 -17 11 -18 11 -18 12 -20 12 -20 13 -23 12 -24 13 -25 13 -24 11 -22 10 -20 7 -18 6 -17 5 -16 3 -15 2 -13 0 -13-1 -11-2 -9-3 -8-5 -7-6 -6-7 -3-8 -3-9 0-9 1-10 2-10 3-10 5-11 5-10 7-11 7-10 9-11 9-10 11-10 11-10 12-9 12-9 13-9 14-9 15-8 15-7 15-7 16-7 16-6 16-6 17-5 17-4 16-5 17-3 16-3 15-3 10-1 12-1 11-2 16-1 17-1 17-1 13 0 13 0 11 0 10 1 8 0 8 1 6 0 7 1 5 0 5 1 4 0 4 1 4 1 3 0 3 1 1 0 2 0 2 1 2 0 2 1 2 0 2 1 2 0 2 1 2 0 1 1 2 1 2 0 1 1 1 1 1 0 1 1 1 1 1 1 0 1 0 0 1 1 0 1 -1 1 0 1 0 1 -1 1 -1 2 -1 1 -2 2 -1 1 -2 2 -3 2 -3 2 -3 3 -4 3 -4 4 -5 3 -5 4 -5 4 -6 4 -6 4 -6 5 -8 5 -7 6 -9 6 -9 7 -10 7 -11 8 -13 9 -14 10 -16 11 -18 13 -19 12 -19 14 -21 13 -22 14 -23 14 -24 15 -27 15 -31 16 -28 14 -28 11 -23 9 -22 7 -19 5 -18 3 -17 1 -15 0 -14-2 -13-3 -11-5 -9-6 -8-8 -7-9 -5-11 -2-11 -1-12 0-12 2-13 3-13 5-13 6-14 7-13 8-13 9-13 11-13 11-13 12-12 13-12 13-12 14-11 15-10 16-10 16-10 16-8 16-9 16-7 16-7 16-6 13-5 11-4 18-5 19-6 23-5 26-6 34-6 28-3 24-3 22-2 21-1 20-1 18 0 18 0 18 0 16 1 15 0 13 1 10 0 9 1 7 0 7 0 5 0 3 0 2 1 4 0 4 0 4 0 5 0 4 0 5 0 4 0 5 0 4-1 4 0 4 0 4-1 4-1 4 0 4-1 4-1 4-2 4-1 4-1 4-2 5-2 4-2 5-2 5-3 5-3 5-3 6-3 6-4 7-4 7-5 8-5 8-5 9-6 10-6 11-8 13-8 13-8 16-10 18-11 19-12 20-11 21-13 24-12 25-13 23-11 21-9 20-7 17-5 17-5 16-3 14-2 13 0 12 0 11 2 9 4 8 4 7 6 5 7 4 7 2 9 1 9 -1 9 -2 10 -4 10 -4 10 -6 10 -6 10 -8 10 -8 10 -9 10 -10 10 -11 9 -12 9 -12 9 -13 8 -14 9 -14 7 -15 8 -15 6 -16 7 -16 6 -16 5 -17 5 -16 5 -17 3 -16 4 -16 3 -16 2 -15 2 -15 1 -13 1 -12 1 -10 1 -10 0 -9 0 -9 0 -8 0 -6-1 -7 0 -5 0 -4 0 -3-1 -3 0 -4 0 -4-1 -4 0 -4-1 -4 0 -5-1 -4 0 -3-1 -4-1 -3 0 -4-1 -3-1 -2-1 -3-1 -2-1 -2-1 -2-1 -2-1 -1-1 -2-1 0-1 -1-1 -1-1 0-1 0-2 1-1 0-2 1-1 1-2 1-2 2-2 2-2 3-2 3-3 4-3 4-4 6-4 6-5 7-5 6-5 8-5 8-6 8-6 10-7 10-7 11-8 13-9 14-10 16-11 19-12 18-13 20-13 21-13 22-13 23-14 26-15 28-15 27-13 26-11 24-9 21-7 19-5 18-4 16-2 16 0 13 1 12 2 11 4 10 6 8 7 6 8 5 9 3 11 1 10 0 12 -2 12 -3 12 -4 12 -6 12 -7 12 -7 13 -9 12 -10 12 -11 12 -11 11 -13 11 -13 11 -14 10 -14 10 -15 10 -15 9 -16 8 -17 8 -16 7 -17 7 -16 6 -16 5 -9 3 -10 3 -14 4 -17 4 -20 5 -24 4 -27 4 -25 3 -22 2 -20 1 -19 1 -18 1 -17 0 -17 0 -14-1 -13 0 -12-1 -10 0 -9-1 -8 0 -7-1 -6 0 -5-1 -5 0 -4 0 -4 0 -3 0 -2 0 -2-1 -2 0 -3 0 -2 0 -3 0 -3 0 -2 0 -3 1 -3 0 -3 0 -2 0 -3 1 -3 0 -2 1 -3 0 -2 1 -3 1 -3 0 -2 1 -3 2 -3 1 -3 1 -3 2 -3 1 -4 2 -3 2 -4 3 -4 2 -4 3 -5 3 -5 3 -6 4 -6 4 -6 4 -7 5 -8 5 -8 6 -9 6 -10 7 -12 8 -12 8 -14 10 -16 11 -18 12 -19 12 -20 13 -21 13 -23 13 -23 14 -27 14 -27 14 -26 12 -24 9 -21 8 -20 6 -18 4 -16 2 -16 2 -14-1 -12-2 -11-3 -10-4 -9-6 -6-8 -6-8 -3-10 -2-10 0-11 1-11 2-11 4-12 5-11 6-12 8-12 8-12 9-11 10-12 11-11 12-11 13-10 13-11 14-9 15-10 15-8 16-9 16-7 16-8 16-6 17-6 16-6 16-5 12-3 12-3 13-3 18-4 20-4 23-3 25-3 21-2 20-1 18-1 17-1 17 0 15 0 14 1 12 0 10 1 10 0 8 1 8 1 7 0 6 1 5 0 5 1 4 0 4 0 3 0 3 1 3 0 3 0 2 0 2 0 1 0 2 0 1 0 2 0 1 0 2 0 2 0 2 0 1 0 2 0 2 0 2 0 2-1 1 0 2 0 2-1 2 0 2-1 1-1 2 0 2-1 2-1 2-1 3-1 2-2 2-1 3-2 3-1 3-2 3-2 3-3 4-2 4-3 4-3 5-3 5-4 6-3 6-5 6-4 7-5 8-6 9-6 9-7 10-7 12-8 12-9 15-10 16-11 19-13 18-12 20-13 21-14 23-14 23-14 25-15 28-15 30-15 27-12 25-10 23-8 20-5 18-4 18-2 15-1 15 1 13 2 11 4 10 6 9 6 7 9 6 9 3 11 2 11 0 12 -1 12 -3 13 -4 13 -5 13 -7 13 -7 13 -9 13 -9 12 -11 13 -12 12 -12 12 -13 11 -14 11 -14 11 -16 10 -15 9 -16 9 -16 8 -17 8 -16 7 -16 7 -12 4 -14 5 -11 3 -18 6 -19 5 -22 5 -27 5 -26 4 -28 4 -23 2 -21 2 -20 1 -19 0 -18 0 -18 0 -17 0 -15 0 -13-1 -12 0 -10-1 -8 0 -7-1 -7 0 -5 0 -5 0 -2 0 -3 0 -3-1 -3 0 -4 0 -4 0 -4 0 -4 0 -4 0 -4 1 -3 0 -4 0 -4 1 -3 0 -4 1 -3 1 -4 0 -3 1 -4 2 -4 1 -3 1 -4 2 -4 2 -4 1 -4 3 -4 2 -5 3 -5 3 -5 3 -6 3 -6 4 -7 4 -7 5 -8 5 -8 5 -9 7 -10 6 -12 8 -12 8 -14 9 -16 10 -18 11 -19 12 -20 12 -22 13 -23 13 -25 13 -25 12 -24 11 -21 8 -19 7 -18 5 -16 4 -16 2 -14 1 -13 0 -12-2 -10-2 -9-5 -8-5 -6-7 -4-7 -3-9 -2-9 0-10 2-10 3-10 4-11 5-10 6-11 7-11 8-10 9-11 10-10 11-10 11-10 13-9 13-9 13-9 14-8 15-8 15-8 16-7 16-6 17-6 16-6 17-4 16-5 17-4 16-3 15-3 10-1 10-2 13-2 16-1 17-2 19-1 16 0 16 0 12 0 11 0 9 1 9 0 7 1 7 0 6 1 6 1 5 0 4 1 4 0 4 1 3 1 3 0 3 1 2 0 2 1 1 0 2 0 1 1 1 0 2 0 1 1 2 0 1 1 2 0 1 1 1 0 1 1 1 0 1 1 1 1 1 0 1 1 0 1 0 0 1 1 0 1 0 0 0 1 -1 1 0 1 -1 1 0 1 -1 1 -2 1 -1 2 -2 1 -1 2 -3 2 -2 2 -3 2 -4 3 -4 3 -4 3 -4 3 -5 4 -5 3 -5 4 -6 4 -6 5 -6 5 -8 5 -8 6 -8 6 -10 7 -10 8 -12 8 -13 9 -15 11 -17 12 -18 12 -19 14 -20 13 -21 14 -22 14 -23 14 -25 15 -27 16 -31 16 -30 14 -28 12 -24 9 -21 7 -20 5 -19 3 -17 1 -15 0 -14-2 -13-4 -11-5 -10-6 -9-8 -6-10 -5-11 -3-11 -1-13 0-13 2-13 4-13 4-14 6-14 7-14 8-13 10-14 10-13 11-13 12-13 13-12 14-12 15-12 15-11 15-10 16-10 16-9 16-8 17-8 15-7 11-4 11-4 13-5 17-6 20-6 23-6 26-6 33-7 27-4 28-3 24-3 22-1 21-1 20-1 19 0 18 0 18 0 17 1 15 0 11 1 10 0 9 0 7 1 4 0 5 0 4 0 5 0 5 0 6 1 5 0 5 0 6-1 5 0 5 0 5 0 4-1 5 0 5-1 4-1 5-1 4-1 5-1 4-2 5-1 4-2 5-2 5-3 5-2 6-3 5-3 6-3 7-4 7-4 7-5 8-5 9-5 9-6 10-6 12-7 12-8 14-9 15-9 18-11 19-11 21-11 22-12 23-12 22-10 19-8 19-7 17-6 16-4 15-3 13-2 13-1 12 0 10 2 10 2 8 4 6 5 5 6 4 8 2 7 1 9 -1 8 -2 9 -3 9 -4 10 -5 9 -6 9 -8 10 -8 9 -8 9 -10 9 -11 9 -11 9 -12 8 -12 8 -14 8 -13 7 -15 7 -14 6 -15 6 -16 6 -16 5 -16 4 -16 4 -16 4 -16 3 -16 3 -16 2 -16 1 -15 1 -15 1 -15 1 -15-1 -11 0 -9-1 -8 0 -7-1 -7-1 -6-1 -5-1 -4-1 -5-1 -3-1 -3-2 -3-1 -3-1 -2-2 -1-1 -2-2 0-2 -1-1 0-2 0-2 1-2 1-3 2-2 2-3 2-2 3-4 4-3 5-4 6-5 7-6 9-7 10-7 10-8 11-7 12-9 13-9 15-10 17-11 18-12 19-12 20-12 21-13 22-13 25-13 27-14 24-12 24-10 21-8 19-6 17-5 17-3 15-2 14 0 12 1 12 2 10 4 8 5 7 6 6 7 4 9 2 9 1 9 0 11 -2 10 -4 11 -4 11 -6 11 -6 11 -8 10 -9 11 -9 11 -11 11 -11 10 -12 10 -13 9 -13 9 -14 9 -15 9 -15 8 -15 7 -16 7 -17 6 -16 6 -17 6 -16 5 -17 4 -16 4 -15 3 -13 2 -11 2 -18 2 -17 3 -21 1 -18 2 -18 0 -16 1 -15-1 -12 0 -11 0 -10-1 -8 0 -8-1 -7-1 -6 0 -6-1 -5-1 -5 0 -4-1 -4 0 -3-1 -4 0 -3-1 -2 0 -3-1 -2 0 -2-1 -1 0 -2-1 -2 0 -1 0 -1-1 -1 0 -1 0 -1-1 -1 0 0 0 -1 0 0 0 -1-1 0 0 -1 0 0 0 0 0 -1-1 0 0 -1 0 0 0 -1-1 0 0 0 0 0 0 0-1 -1 0 0 0 0-1 0 0 0 0 0-1 1 0 0 0 0-1 1 0 0-1 1 0 0-1 1-1 1 0 1-1 1-1 1-1 2-1 1-2 2-1 2-1 2-2 2-1 2-2 3-2 2-2 3-2 3-2 4-3 3-3 4-2 5-4 4-3 5-4 5-4 6-4 7-5 7-5 7-6 9-6 9-7 10-8 11-8 12-9 14-10 16-12 17-13 18-13 19-13 20-14 21-14 22-15 24-15 24-15 27-16 29-17 34-18 31-14 28-11 24-9 22-6 20-4 19-3 18 0 16 1 14 3 13 4 12 6 10 8 9 10 6 11 5 13 3 13 1 14 0 14 -3 15 -3 15 -5 16 -7 15 -7 15 -9 16 -10 15 -11 14 -11 15 -13 14 -14 13 -14 13 -15 13 -15 12 -16 11 -16 10 -16 10 -16 9 -15 8 -13 6 -11 5 -18 7 -18 8 -22 7 -25 8 -28 8 -36 8 -32 6 -36 5 -28 4 -26 2 -24 1 -23 1 -21 1 -20 0 -19 0 -19 0 -19-1 -18 0 -11 0 -7-1 -8 0 -7 0 -9-1 -8 0 -8 0 -9 0 -8-1 -7 0 -8 0 -7 1 -7 0 -7 0 -7 1 -6 1 -6 0 -6 1 -6 2 -6 1 -6 2 -6 2 -6 2 -6 2 -6 3 -7 2 -7 4 -7 3 -7 4 -8 4 -8 4 -9 5 -9 6 -11 5 -11 6 -12 7 -12 7 -14 7 -14 8 -15 7 -16 7 -15 7 -15 7 -15 5 -14 5 -13 4 -12 2 -12 3 -11 1 -9 0 -9-1 -9-1 -7-3 -5-3 -5-5 -3-5 -2-6 -1-6 1-7 2-7 2-7 4-7 5-7 5-8 7-7 7-7 8-8 8-7 9-7 10-6 11-7 11-6 11-6 12-5 13-6 13-4 13-5 13-4 14-3 13-4 14-2 13-3 14-1 13-1 12-1 13 0 12 0 14 1 8 2 7 2 5 2 4 2 3 2 2 3 2 2 0 3 0 3 -1 4 -2 3 -3 4 -3 4 -5 5 -5 5 -7 6 -8 7 -10 7 -13 9 -15 11 -16 10 -17 10 -18 11 -19 10 -19 11 -19 9 -18 8 -17 7 -15 6 -15 5 -14 4 -13 3 -12 1 -11 1 -10 0 -10-1 -8-2 -7-4 -6-4 -4-5 -3-6 -2-7 0-7 1-7 2-8 3-7 5-8 5-8 6-8 7-8 7-8 9-8 9-8 10-7 10-8 11-7 12-6 12-7 13-6 13-5 14-6 14-4 14-5 15-4 14-3 15-3 15-3 14-2 14-1 14-1 14-1 13 0 14 0 10 1 9 2 7 1 6 2 5 1 4 2 3 2 2 3 2 2 1 2 0 3 0 3 -2 3 -1 3 -3 4 -3 4 -4 4 -5 5 -6 5 -7 6 -9 7 -12 9 -15 11 -16 10 -16 11 -17 10 -18 12 -20 11 -21 11 -22 12 -21 10 -19 9 -18 7 -17 6 -16 5 -14 3 -14 3 -13 1 -11 1 -11-1 -9-2 -9-3 -7-4 -5-5 -5-7 -2-7 -2-7 1-8 1-8 2-9 4-8 5-9 5-9 7-9 7-9 9-9 9-8 10-9 10-8 12-8 11-7 13-8 13-7 14-6 14-6 14-6 15-6 15-4 16-5 16-4 15-3 16-3 16-3 15-2 15-1 15-1 14-1 15 0 14 1 11 0 9 1 8 1 6 2 6 1 5 1 4 2 3 1 4 2 2 1 2 2 1 2 1 2 1 2 0 3 -1 2 -1 3 -1 2 -3 3 -2 4 -4 3 -4 4 -5 5 -6 5 -8 7 -12 8 -11 8 -14 10 -13 9 -16 11 -17 11 -18 12 -19 11 -19 12 -21 12 -23 13 -25 13 -23 11 -23 10 -19 8 -19 6 -17 5 -16 4 -14 2 -14 1 -12 0 -12-2 -10-2 -8-4 -7-6 -6-6 -5-7 -2-8 -1-9 0-9 2-10 2-9 4-10 5-10 7-11 7-10 8-10 9-10 10-9 10-10 12-9 12-9 12-9 14-8 14-8 14-7 15-7 16-7 15-6 17-5 16-5 17-5 16-4 17-4 16-3 16-2 15-2 15-2 14-1 13-1 14 0 6-1 8 0 7 0 7 0 6 0 6 1 4 0 3 0 3 0 5 0 4 1 4 0 5 0 5 1 4 1 5 0 4 1 4 0 4 1 4 1 3 1 4 0 3 1 2 1 3 1 2 1 2 1 2 1 2 1 1 1 1 1 1 1 1 2 0 1 0 1 0 2 0 1 -1 2 -1 1 -1 2 -2 2 -2 2 -2 2 -3 3 -4 3 -4 4 -5 4 -6 4 -7 6 -7 5 -7 5 -8 6 -9 6 -9 7 -10 7 -11 8 -13 8 -14 10 -16 11 -18 12 -18 13 -20 12 -21 14 -22 13 -23 14 -25 14 -28 15 -27 13 -26 12 -24 9 -21 7 -19 5 -18 4 -16 2 -15 0 -14-1 -12-2 -11-4 -10-5 -8-7 -6-8 -5-9 -3-10 -2-11 1-11 1-12 3-12 5-12 5-12 7-12 7-13 9-12 10-12 10-11 12-12 12-11 13-11 14-10 14-10 15-9 16-9 16-9 16-7 16-8 17-6 16-6 16-6 11-3 12-4 14-3 17-4 20-5 24-4 27-4 24-3 21-1 20-2 19 0 17-1 18 0 15 0 14 1 13 0 11 1 10 0 9 1 7 0 7 1 6 0 5 1 5 0 4 0 3 0 4 0 3 1 0 0 2 0 2 0 2 0 2 0 3 0 2 0 3 0 2 0 3-1 3 0 2 0 3 0 2-1 2 0 3-1 2 0 3-1 2-1 3-1 3-1 2-1 3-1 3-2 3-1 3-2 4-2 3-2 4-3 4-2 4-3 5-3 5-4 6-3 6-4 6-5 7-5 8-5 9-6 9-6 10-7 12-8 12-9 15-10 16-11 19-12 19-12 20-13 21-13 22-14 25-14 26-14 28-14 26-12 24-10 22-8 20-5 18-5 17-2 15-1 14 0 13 2 11 3 10 5 8 6 7 8 6 8 3 10 2 10 0 11 -1 11 -2 12 -4 12 -5 12 -6 12 -8 12 -8 12 -9 12 -11 11 -11 11 -12 11 -12 11 -14 10 -14 10 -14 10 -16 9 -15 8 -16 8 -17 7 -16 7 -17 6 -16 6 -16 5 -6 1 -7 2 -15 4 -15 4 -20 4 -22 4 -26 4 -23 2 -21 2 -20 1 -18 1 -17 0 -17 0 -15 0 -14-1 -12 0 -10-1 -10 0 -8-1 -8 0 -6-1 -6 0 -5-1 -5 0 -4 0 -3-1 -4 0 -3 0 -2 0 -2 0 -1 0 -1 0 -2 0 -2 0 -2 0 -2 0 -2 0 -2 0 -2 0 -3 0 -2 0 -2 1 -2 0 -2 0 -2 1 -2 0 -2 1 -3 0 -2 1 -2 1 -2 1 -3 1 -2 1 -3 1 -2 2 -3 1 -3 2 -3 2 -3 2 -4 2 -4 3 -4 3 -5 3 -5 3 -5 4 -6 4 -6 4 -7 5 -7 5 -8 6 -9 6 -10 7 -11 7 -12 9 -13 9 -15 10 -18 12 -19 13 -19 12 -21 14 -21 13 -23 14 -25 14 -27 15 -29 15 -27 12 -25 10 -22 7 -20 6 -18 4 -17 3 -16 1 -14-1 -13-2 -11-4 -10-5 -9-6 -7-8 -5-9 -4-10 -2-11 0-11 1-12 3-12 4-13 5-12 6-13 7-12 9-12 9-13 11-12 11-11 12-12 13-11 14-11 14-10 15-10 15-9 16-9 16-8 17-7 16-7 17-6 15-6 11-3 11-4 14-4 18-4 19-5 24-5 28-4 26-3 22-3 21-1 20-1 18-1 18 0 17 0 15 1 14 0 12 1 11 0 10 1 8 0 7 1 6 0 6 0 4 0 5 1 4 0 2 0 2 0 2 0 3 0 3 0 3 0 3 0 3 0 3 0 3 0 3 0 3-1 3 0 2 0 3-1 3 0 3-1 3-1 3-1 3-1 3-1 3-1 3-2 3-1 4-2 3-2 4-2 4-3 4-2 5-3 5-3 5-4 6-3 6-5 7-4 7-5 8-5 9-6 10-7 10-7 12-8 13-9 15-10 17-11 19-12 20-13 20-12 22-14 23-13 26-14 27-14 26-11 24-10 21-8 19-6 18-4 16-3 16-1 14 0 12 1 11 3 10 4 9 6 7 6 5 9 4 9 2 9 0 11 -1 11 -2 11 -4 11 -4 11 -6 12 -7 11 -9 12 -9 11 -9 11 -11 11 -12 11 -12 10 -13 10 -14 9 -15 9 -15 9 -15 8 -16 8 -16 7 -17 7 -16 6 -17 5 -16 5 -16 4 -9 3 -10 2 -15 3 -17 3 -20 3 -22 3 -22 2 -19 2 -19 1 -17 0 -17 0 -14 0 -13 0 -12-1 -10 0 -9-1 -8-1 -8 0 -6-1 -7 0 -5-1 -5 0 -4-1 -4 0 -4-1 -3 0 -3 0 -3-1 -2 0 -2 0 -2 0 -2 0 -2-1 -1 0 -2 0 -1 0 -1 0 -1 0 0 0 -1 0 -1 0 -2 0 -1 0 -1 0 -1 0 -1 0 -1 1 -1 0 -1 0 -2 0 -1 0 -1 1 -1 0 -1 1 -1 0 -2 1 -1 0 -1 1 -2 0 -1 1 -2 1 -2 1 -1 1 -2 1 -2 2 -2 1 -3 2 -2 1 -3 2 -3 2 -3 3 -3 2 -4 3 -4 3 -5 3 -4 3 -6 4 -5 4 -6 4 -7 5 -7 6 -8 5 -9 7 -9 7 -11 7 -11 9 -13 9 -15 10 -17 12 -18 13 -19 13 -20 14 -21 13 -22 15 -23 14 -25 15 -27 16 -30 16 -30 15 -29 12 -25 10 -22 7 -20 5 -19 3 -18 2 -16 0 -14-2 -13-3 -12-5 -10-6 -9-8 -7-9 -5-11 -4-12 -1-13 0-13 2-13 3-14 4-14 6-14 7-14 8-14 9-13 10-14 11-13 12-13 13-13 14-12 14-12 15-11 15-11 16-10 16-9 17-9 16-8 15-7 10-4 11-5 14-5 17-6 19-6 23-6 26-7 32-6 28-5 30-4 25-3 23-1 22-2 20 0 20-1 18 0 19 0 18 1 16 0 11 1 10 0 10 0 8 1 4 0 5 0 4 0 6 0 6 1 5 0 6 0 6 0 6 0 5-1 6 0 5 0 5-1 5 0 5-1 5-1 4-1 5-1 5-1 5-2 4-2 5-1 5-3 6-2 5-3 6-3 6-3 6-3 7-4 7-4 8-5 8-5 9-6 10-6 11-6 12-8 13-8 14-8 16-10 18-10 20-12 22-11 21-11 21-9 19-8 18-7 16-6 16-5 15-3 13-2 13-1 12 0 10 1 10 2 8 3 6 5 6 6 4 6 2 8 1 7 0 9 -2 8 -3 9 -4 9 -5 9 -6 9 -7 9 -7 9 -9 9 -9 9 -10 8 -11 9 -12 8 -12 7 -13 8 -13 7 -14 6 -15 7 -14 6 -16 5 -15 5 -16 4 -16 4 -16 4 -15 3 -16 2 -16 2 -15 2 -15 1 -15 0 -15 0 -14 0 -11-1 -9 0 -7-1 -7-1 -6-2 -5-1 -5-1 -4-1 -3-2 -3-1 -2-2 -2-2 -2-2 -1-1 0-2 0-2 0-3 1-2 1-3 2-2 2-3 3-4 4-3 4-4 6-5 7-6 9-7 11-8 13-9 12-9 14-9 15-10 17-12 18-11 18-12 20-12 21-12 22-13 25-13 25-13 23-10 21-9 19-7 18-5 17-4 15-3 14-2 14 0 11 2 11 2 9 4 8 5 7 6 4 7 4 8 1 9 1 9 -2 10 -2 10 -4 10 -4 11 -6 10 -7 10 -8 11 -9 10 -9 10 -11 10 -11 10 -12 9 -13 9 -13 9 -14 8 -14 8 -15 7 -16 7 -16 6 -16 6 -16 6 -17 5 -17 4 -16 4 -17 3 -16 3 -15 2 -14 2 -11 2 -11 1 -16 1 -16 1 -14 0 -13 0 -11 0 -10 0 -8-1 -8 0 -7-1 -6 0 -5-1 -5 0 -5-1 -4-1 -3 0 -2 0 -2-1 -2 0 -2 0 -3-1 -2 0 -3-1 -2-1 -3 0 -2-1 -2-1 -2 0 -2-1 -2-1 -2-1 -1 0 -1-1 -1-1 -1-1 -1-1 -1-1 0 0 0-1 0-2 0-1 0-1 1-1 1-1 1-2 1-1 1-2 2-2 2-2 3-2 3-3 4-3 5-3 5-4 5-4 5-4 6-5 7-4 7-5 7-6 8-5 9-7 10-7 10-7 12-9 13-9 15-10 17-12 19-13 19-13 20-13 21-14 23-14 24-14 25-14 29-16 29-14 27-12 25-10 22-7 20-6 18-3 17-2 15-1 15 2 12 2 12 4 10 6 8 7 7 9 5 10 3 10 2 12 0 12 -2 12 -2 13 -5 13 -5 13 -7 13 -8 13 -9 13 -9 12 -11 13 -12 12 -12 12 -14 11 -14 11 -14 10 -15 10 -16 10 -16 9 -16 8 -17 8 -16 7 -16 6 -11 4 -12 4 -13 4 -18 5 -19 5 -23 6 -28 5 -26 4 -27 3 -23 3 -21 1 -20 1 -19 1 -18 0 -18 0 -17 0 -14-1 -14 0 -12-1 -9 0 -8-1 -8 0 -6 0 -5-1 -4 0 -2 0 -3 0 -3 0 -4 0 -3 0 -4 0 -4 0 -4 0 -4 0 -4 0 -4 0 -4 1 -3 0 -4 1 -3 0 -4 1 -4 1 -3 1 -4 1 -3 1 -4 2 -4 1 -4 2 -4 2 -4 2 -5 3 -4 2 -5 3 -6 3 -5 4 -6 4 -7 4 -7 5 -8 5 -8 5 -10 6 -10 7 -11 7 -13 9 -14 9 -16 10 -18 12 -19 11 -21 13 -21 12 -23 13 -26 13 -25 12 -23 10 -21 8 -19 7 -17 5 -17 3 -15 3 -14 0 -13 0 -11-2 -10-3 -9-4 -7-6 -6-6 -5-8 -2-9 -1-9 0-10 2-10 2-10 5-11 5-10 6-11 7-10 9-11 9-10 10-10 11-10 11-10 13-9 13-9 13-9 15-8 15-8 15-7 16-7 16-7 16-6 17-5 16-5 17-4 16-4 16-3 16-3 10-1 11-2 12-1 16-2 17-1 18-1 16 0 15 0 11 0 10 0 10 1 8 0 7 1 6 0 6 1 6 0 4 1 5 1 4 0 3 1 3 0 3 1 2 0 2 1 1 0 1 0 2 1 1 0 2 0 2 1 1 0 2 1 2 1 1 0 1 1 2 0 1 1 1 1 1 0 1 1 1 1 0 0 1 1 0 1 0 1 0 0 0 1 0 1 -1 1 0 1 -1 1 -1 1 -1 2 -2 1 -1 2 -2 1 -3 2 -3 3 -3 2 -4 3 -4 3 -4 4 -5 3 -5 4 -5 4 -6 4 -6 4 -6 5 -7 5 -8 6 -9 6 -9 7 -11 7 -11 9 -13 9 -14 10 -17 12 -18 12 -19 13 -20 13 -20 14 -22 14 -23 15 -25 14 -27 16 -31 16 -29 14 -28 12 -24 9 -21 6 -20 5 -18 3 -17 2 -16 0 -14-2 -13-3 -11-5 -10-7 -8-8 -7-9 -4-11 -3-11 -2-12 1-13 2-13 3-13 5-14 6-13 7-14 8-14 9-13 10-13 11-13 13-13 12-12 14-12 14-11 15-11 16-10 16-10 16-9 16-8 16-8 16-6 12-5 12-5 13-4 17-6 19-6 23-6 26-6 33-6 27-4 27-3 23-2 22-2 20 0 20-1 18 0 18 0 18 0 16 1 15 0 11 1 10 0 8 0 7 1 4 0 4 0 3 0 5 0 4 0 5 0 5 0 5 0 5 0 5 0 5 0 5 0 4-1 5 0 4-1 5-1 4-1 4-1 4-1 5-1 4-2 5-1 4-2 5-2 5-3 5-2 5-3 6-3 6-4 6-3 7-5 7-4 8-5 9-6 9-6 11-6 11-8 13-7 14-9 16-10 18-11 19-11 21-12 22-12 25-13 23-10 20-9 19-7 18-6 16-5 15-3 14-2 14-1 11 0 11 1 10 3 8 4 7 5 5 6 4 8 3 7 1 9 -1 9 -2 9 -3 9 -4 10 -5 9 -6 10 -7 10 -8 9 -9 10 -10 9 -10 9 -12 9 -12 9 -12 8 -14 8 -13 7 -15 7 -15 7 -15 6 -15 6 -16 5 -17 5 -16 5 -16 3 -17 4 -16 2 -16 3 -15 1 -16 2 -15 1 -15 0 -15 0 -11 0 -9 0 -9 0 -7-1 -7-1 -7 0 -5-1 -6-1 -5-1 -4-1 -4-1 -4-1 -3-1 -3-1 -3-1 -2-2 -2-1 -2-1 -1-2 -1-1 0-2 -1-1 0-2 1-2 1-1 1-3 1-2 2-2 2-3 3-3 4-3 4-4 5-4 7-5 8-6 9-7 9-6 9-7 10-7 11-8 13-9 14-9 16-11 17-12 19-12 20-12 20-13 22-13 23-14 25-14 28-14 25-11 24-10 21-8 19-6 18-4 17-3 15-2 14 0 13 2 11 2 10 5 8 5 7 7 6 8 4 9 2 10 0 10 -1 10 -2 11 -4 12 -4 11 -6 11 -7 12 -8 11 -9 12 -10 11 -11 11 -11 10 -13 10 -13 10 -14 10 -14 9 -15 9 -15 8 -16 7 -16 7 -17 7 -16 6 -17 6 -16 4 -16 5 -11 2 -12 3 -13 3 -18 3 -19 3 -23 3 -21 2 -19 1 -19 1 -17 1 -16 0 -15-1 -12 0 -11 0 -10-1 -9-1 -8 0 -7-1 -7 0 -6-1 -5-1 -5 0 -4-1 -4 0 -4-1 -3 0 -3 0 -3-1 -2 0 -2 0 -2 0 -2 0 -2-1 -1 0 -2 0 -1 0 -1 0 -1 0 -1 0 0 0 -1 0 -1 0 -1 0 -1 0 -1 0 -1 0 -1 0 -1 0 -1 1 -1 0 -1 0 -1 0 -2 1 -1 0 -1 0 -1 1 -1 0 -1 1 -1 0 -2 1 -1 1 -2 1 -1 1 -2 1 -1 1 -2 1 -2 1 -3 2 -2 1 -2 2 -3 2 -3 2 -3 2 -4 3 -4 3 -4 2 -4 4 -5 3 -5 4 -6 4 -6 5 -6 4 -8 6 -8 6 -8 6 -10 7 -11 8 -11 8 -13 10 -15 10 -17 12 -19 13 -19 13 -19 14 -21 14 -22 14 -24 15 -24 15 -27 15 -31 17 -30 15 -29 13 -25 9 -23 7 -20 6 -19 3 -18 2 -16 0 -15-2 -13-3 -12-4 -11-7 -8-8 -8-9 -5-11 -4-12 -1-13 0-13 1-13 3-14 4-14 6-15 7-14 8-14 9-14 10-14 11-13 12-14 13-12 14-13 14-12 15-11 15-11 16-10 16-9 17-9 16-8 15-7 9-4 10-4 14-6 16-6 20-6 22-7 26-6 31-7 29-5 27-4 27-3 24-2 23-2 21-1 20 0 19 0 18 0 18 0 18 0 15 1 13 0 9 1 7 0 3 0 5 0 5 1 6 0 6 0 6 0 6 0 6 0 6 0 6 0 6 0 5-1 5 0 6-1 5-1 5 0 5-1 5-2 5-1 5-1 5-2 5-2 5-2 5-3 6-2 6-3 6-4 6-3 7-4 8-4 8-5 8-5 9-6 11-6 11-7 12-7 13-8 15-9 16-10 18-10 20-10 20-11 20-10 20-8 18-8 17-6 16-5 15-4 14-3 13-2 12-1 11 1 10 1 8 3 8 4 6 4 5 6 3 7 2 7 0 8 -1 8 -2 8 -3 9 -5 9 -5 9 -6 9 -7 8 -8 9 -9 9 -10 8 -10 8 -11 8 -12 8 -12 8 -13 7 -13 6 -14 7 -15 6 -14 5 -15 5 -16 5 -15 4 -16 3 -16 3 -15 3 -16 2 -15 2 -15 1 -14 1 -15 0 -14 0 -11-1 -10-1 -8-1 -6-1 -6-1 -6-2 -4-1 -4-2 -3-1 -3-2 -2-2 -2-2 -1-2 0-2 0-2 0-2 1-3 1-3 2-2 3-4 3-3 4-4 5-5 6-5 8-6 10-8 12-8 14-10 13-10 16-10 17-11 18-12 18-11 20-12 21-12 22-13 25-13 23-11 22-10 20-8 19-6 17-5 16-4 14-3 14-1 13 0 11 2 10 2 9 4 7 5 6 6 4 8 3 8 1 8 0 9 -1 10 -3 10 -4 9 -5 10 -6 10 -7 10 -8 10 -9 10 -10 10 -10 9 -11 10 -12 9 -13 8 -13 8 -14 8 -15 8 -15 7 -15 6 -16 6 -16 6 -16 5 -17 5 -16 4 -17 3 -16 3 -16 3 -16 2 -15 2 -14 1 -13 1 -15 0 -7 0 -7 1 -6 0 -6-1 -5 0 -6 0 -5 0 -5 0 -5-1 -6 0 -5 0 -5-1 -5 0 -5-1 -4-1 -5 0 -4-1 -3-1 -4-1 -3-1 -4 0 -2-1 -3-1 -2-1 -2-1 -2-1 -2-1 -1-1 -1-2 -1-1 -1-1 0-1 0-2 0-1 1-2 1-1 1-2 1-2 2-2 2-2 3-3 3-3 4-3 4-4 6-4 7-5 7-6 7-5 8-6 8-6 9-6 10-7 11-8 12-8 14-10 15-10 18-12 18-13 20-12 20-13 22-14 22-13 25-14 27-15 28-14 26-12 24-9 21-7 20-6 18-4 16-2 16-1 14 1 12 2 11 3 10 5 8 7 7 7 5 9 3 10 2 11 0 11 -1 11 -3 12 -4 12 -5 12 -7 12 -7 12 -9 12 -9 12 -10 12 -12 11 -12 11 -13 11 -13 10 -14 10 -15 10 -16 9 -15 8 -16 8 -17 7 -16 7 -17 6 -16 5 -15 5 -13 4 -12 3 -18 4 -19 4 -24 4 -27 4 -23 3 -21 2 -20 1 -18 0 -18 1 -17 0 -15 0 -14-1 -12 0 -11-1 -10-1 -8 0 -7-1 -7 0 -6 0 -5-1 -4 0 -5 0 -3-1 -4 0 -2 0 -3 0 -1 0 -1 0 -2 0 -2 0 -2 0 -3 0 -2 0 -2 0 -3 0 -2 0 -3 0 -2 1 -2 0 -2 1 -3 0 -2 1 -2 0 -3 1 -2 1 -3 1 -2 1 -3 1 -2 1 -3 2 -3 1 -3 2 -3 2 -4 2 -3 2 -4 3 -5 3 -4 3 -5 3 -6 4 -6 4 -6 4 -7 5 -7 5 -9 6 -9 6 -10 7 -11 8 -12 8 -14 10 -16 10 -18 13 -19 12 -20 13 -20 13 -22 13 -24 14 -25 14 -29 16 -27 13 -26 11 -23 8 -20 7 -20 5 -17 3 -16 2 -15 0 -14-1 -12-3 -10-4 -10-5 -7-7 -6-9 -5-9 -3-10 -1-11 1-12 2-11 3-12 4-12 6-13 7-12 8-12 9-12 10-12 10-12 12-11 12-11 14-11 14-10 14-10 15-9 16-9 16-8 16-8 16-7 17-7 16-5 16-6 9-2 11-3 14-4 17-4 20-5 23-4 28-4 24-3 21-1 20-2 19 0 17-1 17 0 16 0 14 1 13 0 11 1 10 0 9 1 7 0 7 1 6 0 5 1 5 0 4 0 3 0 4 0 3 1 1 0 1 0 2 0 2 0 2 0 3 0 2 0 3 0 3 0 2-1 3 0 2 0 3 0 2-1 3 0 2-1 3 0 2-1 3-1 2-1 3-1 3-1 2-1 3-2 3-2 3-1 4-2 3-2 4-3 4-2 5-3 5-3 5-4 5-4 6-4 7-4 7-5 8-5 8-6 10-7 10-7 12-8 12-9 15-9 16-11 19-13 19-12 20-13 22-13 22-14 24-14 27-14 28-14 26-12 24-10 21-7 20-6 18-4 17-2 15-1 14 0 12 2 12 4 9 4 9 7 7 7 5 9 3 10 2 10 0 11 -1 11 -3 12 -4 12 -5 12 -6 12 -7 12 -9 12 -9 11 -10 12 -12 11 -11 11 -13 11 -14 10 -14 10 -15 9 -15 9 -15 9 -17 8 -16 7 -16 7 -17 6 -16 5 -16 5 -7 2 -9 2 -15 4 -16 4 -21 4 -23 4 -27 3 -22 3 -20 1 -19 1 -18 1 -18 0 -16 0 -15 0 -13-1 -11 0 -10-1 -10-1 -8 0 -7-1 -6 0 -5 0 -5-1 -5 0 -4 0 -3-1 -4 0 -3 0 -2 0 -2 0 -1 0 -2 0 -2 0 -2 0 -2 0 -2 0 -2 0 -2 0 -2 0 -2 0 -3 0 -2 1 -2 0 -2 1 -2 0 -2 1 -2 0 -3 1 -2 1 -2 1 -2 1 -3 1 -2 1 -3 2 -3 1 -3 2 -3 2 -3 2 -4 2 -4 3 -4 2 -4 3 -5 4 -5 3 -6 4 -6 5 -7 4 -7 5 -8 6 -9 6 -10 7 -11 7 -11 9 -14 9 -15 10 -17 12 -19 13 -19 12 -21 13 -21 14 -23 14 -25 14 -26 15 -30 14 -26 13 -26 10 -22 8 -20 6 -19 4 -17 3 -16 1 -14-1 -13-2 -12-3 -10-5 -8-6 -8-8 -5-9 -4-10 -2-11 0-11 1-12 2-12 4-12 5-13 6-12 8-13 8-12 9-13 11-12 11-11 12-12 13-11 13-11 15-10 14-10 16-9 16-9 16-8 16-8 17-7 16-6 16-6 11-3 12-4 13-4 18-4 20-5 23-5 28-4 26-3 23-3 20-1 20-1 18-1 18 0 17 0 16 0 14 1 12 0 11 1 10 1 8 0 7 0 6 1 6 0 5 0 4 1 4 0 2 0 2 0 2 0 3 0 3 0 3 0 3 0 3 0 3 0 3 0 3 0 3-1 3 0 3-1 3 0 3-1 2 0 3-1 3-1 3-1 3-1 3-2 3-1 4-2 3-1 4-2 4-3 4-2 4-3 5-2 5-4 5-3 6-4 6-4 7-5 7-5 8-5 9-6 10-7 11-7 12-8 13-9 15-10 17-11 19-13 20-12 21-13 21-13 24-13 26-14 27-14 25-11 23-10 21-7 19-6 18-4 17-3 15-1 13 0 13 2 11 3 10 4 8 6 7 6 5 9 4 9 1 10 1 10 -1 11 -3 11 -4 11 -4 11 -7 12 -7 11 -8 12 -9 11 -10 11 -11 11 -12 11 -12 10 -13 10 -14 9 -14 9 -15 9 -16 8 -16 8 -16 7 -17 6 -16 6 -17 6 -16 4 -16 4 -8 2 -9 3 -15 3 -16 3 -20 3 -22 3 -22 2 -19 2 -19 0 -17 1 -17 0 -15 0 -12 0 -12-1 -10-1 -9 0 -8-1 -8 0 -7-1 -6-1 -5 0 -5-1 -5 0 -3-1 -4 0 -3 0 -3-1 -3 0 -2 0 -3 0 -2-1 -2 0 -1 0 -2 0 -1 0 -2 0 0 0 -1 0 0 0 -1 0 -1 0 -1 0 -1 0 -1 0 -1 0 -2 0 -1 0 -1 0 -1 0 -1 0 -1 1 -1 0 -1 0 -1 1 -2 0 -1 0 -1 1 -1 1 -2 0 -1 1 -1 1 -2 1 -2 0 -1 2 -2 1 -2 1 -2 1 -2 2 -3 2 -2 1 -3 2 -3 3 -4 2 -3 3 -4 2 -5 3 -4 4 -5 3 -6 4 -6 5 -6 4 -7 5 -8 6 -8 6 -9 7 -10 7 -12 8 -12 9 -14 10 -16 12 -18 12 -19 13 -19 14 -21 13 -21 15 -23 14 -24 15 -26 15 -29 16 -31 16 -29 14 -27 10 -23 8 -21 6 -20 4 -18 3 -16 0 -16 0 -13-3 -13-4 -11-6 -9-7 -8-9 -6-11 -4-11 -2-12 -1-13 1-14 2-13 4-14 5-14 7-14 7-14 9-14 10-14 11-14 11-13 13-13 13-12 14-12 15-12 15-11 16-10 16-10 16-9 16-8 16-7 13-6 10-4 12-5 16-6 19-6 21-6 25-7 30-7 31-5 28-4 27-3 24-3 23-1 21-1 19-1 19 0 19 0 18 1 17 0 16 1 12 0 10 0 8 1 4 0 5 0 5 0 5 0 6 0 6 1 6 0 6 0 6 0 5-1 6 0 5 0 5-1 5 0 5-1 5-1 5-1 5-1 5-1 5-2 5-2 5-2 5-2 5-2 5-3 6-3 6-3 7-4 6-3 8-5 8-4 8-5 9-6 10-6 11-7 12-7 13-8 15-9 16-10 18-10 20-11 21-11 21-10 20-9 19-8 17-7 17-5 15-5 14-3 14-2 12-1 11 0 11 2 9 2 8 4 6 4 5 6 4 7 2 7 1 8 -1 8 -2 8 -3 9 -4 9 -5 9 -6 9 -7 9 -8 9 -9 9 -9 8 -11 9 -10 8 -12 8 -12 7 -13 8 -14 7 -14 6 -14 6 -15 6 -15 5 -15 5 -16 4 -16 4 -16 3 -15 3 -16 2 -15 2 -15 2 -15 0 -15 1 -15 0 -11-1 -11 0 -8-1 -8-1 -6-1 -6-1 -5-2 -4-1 -4-2 -3-1 -3-2 -2-1 -2-2 -1-2 -1-2 0-2 0-3 1-2 1-2 2-3 2-3 3-3 4-4 4-4 6-5 6-5 9-7 12-9 11-8 13-9 14-10 15-10 17-11 18-12 19-11 19-12 21-13 23-12 25-14 24-11 22-10 21-9 19-6 17-6 16-3 16-3 13-1 13 0 12 1 10 3 9 4 8 5 6 6 4 7 3 8 2 9 0 9 -2 10 -2 10 -4 10 -5 10 -6 10 -7 11 -8 10 -9 10 -9 10 -11 10 -11 9 -12 9 -13 9 -13 8 -14 8 -15 8 -15 7 -15 7 -16 6 -16 6 -17 5 -16 5 -17 4 -17 4 -16 3 -16 3 -15 2 -15 2 -13 1 -10 1 -12 1 -19 1 -11 0 -11 0 -9 0 -9-1 -7 0 -7 0 -6-1 -5 0 -5-1 -3 0 -2 0 -2-1 -3 0 -3-1 -4 0 -3-1 -3 0 -4-1 -3 0 -3-1 -3-1 -2-1 -3 0 -2-1 -2-1 -2-1 -2-1 -2-1 -1-1 -1-1 -1-1 -1-1 0-1 0-1 -1-1 1-1 0-1 1-2 0-1 2-2 1-2 2-1 2-2 2-3 3-3 4-3 4-3 6-4 6-5 6-4 6-5 7-5 7-5 8-6 9-6 9-7 11-7 11-8 13-9 14-10 17-12 18-12 19-13 20-13 21-13 22-14 23-14 26-14 28-15 28-14 27-12 24-10 22-7 19-5 19-4 16-2 16 0 13 1 13 2 11 4 10 6 8 7 7 8 5 10 3 10 1 11 0 12 -1 12 -3 12 -4 12 -6 13 -6 13 -8 12 -9 13 -10 12 -10 12 -12 12 -12 11 -14 12 -13 10 -15 10 -15 10 -15 9 -16 9 -17 8 -16 7 -16 7 -17 6 -15 6 -10 3 -11 3 -17 5 -18 5 -22 5 -25 4 -26 4 -25 3 -23 2 -20 2 -20 1 -18 0 -18 0 -17 0 -16 0 -13-1 -13 0 -11-1 -9 0 -8-1 -7 0 -6 0 -5-1 -5 0 -4 0 -3 0 -2 0 -2 0 -3 0 -3-1 -3 0 -3 0 -4 1 -3 0 -3 0 -3 0 -3 0 -4 1 -3 0 -3 1 -3 0 -3 1 -3 1 -3 1 -3 1 -3 1 -4 1 -3 2 -3 1 -4 2 -4 2 -4 2 -4 3 -4 3 -5 3 -5 3 -6 3 -6 4 -6 5 -8 4 -7 6 -9 5 -9 6 -10 7 -11 8 -13 8 -14 9 -16 11 -18 12 -19 12 -20 12 -22 13 -22 13 -25 14 -28 14 -25 12 -24 10 -21 8 -19 6 -18 5 -17 3 -15 2 -14 0 -13-1 -11-2 -10-4 -9-5 -7-7 -6-7 -4-9 -2-10 -1-10 1-10 2-11 3-11 5-11 5-11 7-11 8-12 9-11 9-11 11-10 11-11 12-10 13-10 14-9 14-9 15-9 15-8 16-7 16-8 16-6 17-6 16-6 17-5 16-4 15-4 10-2 10-2 16-3 17-2 21-3 22-2 19-2 18-1 17 0 17 0 14 0 12 0 11 1 9 0 9 1 8 1 7 0 6 1 6 1 5 0 5 1 4 0 4 1 4 0 3 1 3 0 3 1 2 0 3 0 2 1 1 0 2 0 2 0 1 1 2 0 1 0 1 0 1 0 1 0 1 0 0 0 1 0 1 0 0 1 1 0 0 0 1 0 0 0 1 0 0 0 1 0 0-1 1 0 0 0 1 0 0 0 1 0 1 0 0 0 1 0 0-1 1 0 1 0 0 0 1-1 1 0 0 0 1-1 1 0 1-1 1-1 1 0 1-1 1-1 1-1 2-1 1-1 2-1 2-1 1-1 2-2 3-1 2-2 3-2 2-2 3-2 4-3 3-2 4-3 4-3 5-4 5-3 5-4 6-5 6-4 7-6 7-5 9-6 9-7 9-7 11-8 12-9 14-10 16-12 17-12 18-13 19-14 19-13 21-15 22-14 23-15 25-16 26-15 29-17 34-18 31-14 28-12 24-8 22-7 21-4 19-3 17-1 16 1 15 3 13 4 12 6 10 8 9 9 7 11 4 13 3 13 2 14 -1 14 -2 15 -4 15 -4 15 -7 15 -7 16 -9 15 -10 15 -10 14 -12 15 -13 14 -13 13 -14 13 -15 13 -16 12 -15 11 -16 10 -17 10 -16 9 -15 8 -9 4 -10 5 -15 7 -17 6 -21 8 -23 8 -26 7 -32 8 -40 8 -30 5 -31 4 -27 3 -24 1 -23 2 -22 0 -20 1 -20 0 -19-1 -18 0 -19 0 -12-1 -10 0 -5 0 -7-1 -7 0 -8 0 -8-1 -8 0 -9 0 -7 0 -8 0 -7 0 -7 0 -7 0 -7 1 -6 0 -7 1 -6 1 -6 1 -6 1 -6 2 -5 1 -6 2 -6 2 -6 3 -6 2 -7 3 -7 3 -7 4 -7 3 -8 5 -8 4 -9 5 -9 5 -10 6 -11 6 -12 7 -13 7 -14 8 -15 7 -15 8 -16 8 -15 7 -16 6 -15 6 -14 5 -13 4 -13 3 -12 2 -11 2 -10 0 -10 0 -8-2 -7-2 -7-4 -4-4 -4-5 -2-6 -1-7 0-6 2-7 2-7 4-8 4-7 6-8 6-7 7-8 8-7 8-7 10-7 9-7 11-7 11-6 11-6 13-6 12-5 13-5 13-5 14-4 13-4 14-3 14-3 14-3 13-2 14-1 13-1 12 0 13 0 13 1 9 1 9 2 6 1 5 2 3 2 3 3 2 2 1 3 1 3 -1 3 -1 3 -2 4 -2 4 -4 4 -4 4 -6 6 -7 5 -8 7 -10 8 -12 9 -16 10 -16 10 -16 11 -18 10 -19 11 -21 11 -19 10 -19 9 -17 7 -16 6 -16 5 -14 5 -13 3 -13 2 -11 1 -11 0 -10-1 -8-2 -7-4 -6-4 -5-5 -4-6 -2-6 0-7 1-8 2-8 2-8 4-8 5-8 6-8 7-8 8-8 8-8 9-8 10-8 10-7 11-7 12-7 12-7 13-6 14-6 13-6 14-5 15-4 14-4 15-4 15-3 15-3 15-2 14-2 14-1 14-1 14-1 14 1 11 0 11 2 8 1 6 1 6 2 4 2 4 2 3 2 2 2 2 2 0 2 1 3 -1 3 -1 3 -1 3 -3 3 -3 4 -3 4 -5 5 -6 5 -7 6 -9 7 -11 8 -16 11 -15 10 -16 11 -17 11 -18 11 -19 11 -21 12 -22 12 -22 11 -20 10 -20 8 -17 6 -17 6 -15 4 -15 3 -13 2 -13 1 -11 0 -10-2 -9-2 -8-4 -6-5 -5-6 -4-6 -2-8 0-8 0-8 2-9 3-9 5-9 5-9 6-9 7-9 8-9 9-9 10-8 10-9 11-8 12-8 12-8 13-7 14-7 14-7 14-6 15-6 15-5 16-5 16-4 16-4 16-3 16-3 15-2 16-2 15-2 15-1 15 0 15 0 11 0 11 1 9 1 7 1 7 1 6 1 5 1 4 1 4 2 4 1 3 2 2 1 2 2 2 2 1 2 0 2 0 2 0 2 -1 2 -1 3 -2 2 -2 3 -3 4 -4 3 -4 4 -5 5 -7 5 -9 7 -11 9 -13 9 -12 8 -13 9 -15 10 -17 11 -17 12 -19 12 -20 12 -20 12 -22 13 -25 13 -25 13 -23 10 -22 9 -19 8 -19 5 -16 5 -16 3 -15 1 -13 1 -12-1 -11-3 -9-3 -8-5 -7-6 -5-7 -4-8 -2-9 0-9 1-10 2-10 3-10 5-10 6-11 6-10 8-11 9-10 9-10 11-10 11-10 12-9 12-9 13-9 14-8 15-8 15-7 15-7 16-7 16-6 16-6 17-5 17-4 16-4 17-4 16-2 15-3 14-2 12-1 10-1 16-1 16-1 17-1 14 0 11 0 10 1 8 0 8 0 7 1 6 0 6 1 5 1 4 0 4 1 4 0 3 1 1 0 1 0 2 1 3 0 2 1 3 0 2 1 2 0 3 1 2 0 2 1 2 1 2 1 1 0 2 1 1 1 1 1 1 0 1 1 1 1 0 1 1 1 0 1 0 1 -1 1 0 1 -1 1 0 2 -2 1 -1 2 -1 1 -2 2 -3 2 -3 3 -3 2 -4 3 -4 4 -5 4 -5 4 -6 4 -6 4 -6 5 -7 5 -7 5 -8 6 -9 6 -10 7 -11 8 -11 8 -14 9 -14 11 -18 12 -18 12 -19 13 -20 13 -22 14 -22 14 -24 14 -25 15 -29 15 -29 15 -27 12 -25 10 -22 8 -21 5 -18 4 -17 2 -16 0 -14-1 -13-2 -12-5 -10-5 -8-7 -7-9 -5-10 -4-10 -1-12 0-12 1-12 3-13 4-13 5-13 7-13 8-13 8-13 10-13 11-12 12-13 12-11 13-12 14-11 15-10 15-11 16-9 16-9 16-8 16-8 17-7 15-6 12-4 12-5 13-4 17-5 20-5 23-6 27-5 26-4 28-4 23-2 22-2 20-1 19 0 18 0 18 0 17 0 15 0 14 1 12 0 10 1 8 0 8 1 6 0 5 0 4 0 2 0 2 0 4 0 4 1 4 0 4 0 4 0 4 0 4-1 4 0 4 0 4 0 4-1 3 0 4-1 4-1 3-1 4-1 4-1 3-1 4-2 4-1 4-2 4-2 5-2 4-3 5-3 5-3 6-3 5-4 7-4 7-4 7-5 8-5 9-6 10-6 10-7 12-8 13-8 15-10 17-10 18-12 20-12 21-12 22-13 24-13 26-13 23-10 22-9 20-8 18-5 17-4 15-3 15-2 13 0 12 1 11 2 9 4 8 5 7 6 5 7 4 8 1 9 1 10 -1 9 -2 10 -4 11 -5 10 -5 10 -7 11 -8 10 -9 11 -9 10 -11 10 -11 10 -12 9 -12 9 -14 9 -14 8 -14 8 -15 8 -16 7 -15 6 -17 6 -16 6 -17 5 -16 4 -17 4 -16 4 -16 3 -15 2 -10 2 -11 1 -12 1 -16 2 -17 1 -17 0 -13 0 -12 0 -11 0 -9 0 -8-1 -8 0 -6-1 -6 0 -6-1 -5-1 -4 0 -4-1 -3 0 -3-1 -2 0 -1 0 -1-1 -2 0 -2-1 -3 0 -2 0 -2-1 -2-1 -2 0 -2-1 -2 0 -1-1 -2-1 -1-1 -2 0 -1-1 -1-1 -1 0 0-1 -1-1 0-1 -1-1 0-1 1-1 0-1 0-1 1-1 1-1 1-2 1-1 2-2 2-2 2-2 3-2 3-3 4-3 5-3 5-4 5-3 5-4 5-5 7-4 6-5 7-5 8-6 8-6 10-6 10-8 11-8 13-9 14-10 16-11 18-12 19-13 19-13 21-14 22-14 23-14 25-14 26-16 31-16 28-13 28-12 23-8 21-7 20-4 18-3 16-2 16 1 13 1 13 4 11 5 9 6 8 8 6 9 5 11 2 11 1 12 0 12 -2 13 -4 13 -4 13 -6 13 -8 14 -8 13 -9 13 -10 13 -12 12 -12 12 -13 12 -13 12 -15 11 -14 10 -16 10 -16 10 -16 8 -16 8 -16 8 -16 7 -16 6 -13 4 -11 4 -18 6 -19 5 -23 6 -27 5 -34 6 -27 3 -24 3 -22 2 -21 1 -19 0 -19 1 -17 0 -18-1 -16 0 -14 0 -13-1 -10 0 -9-1 -7 0 -6 0 -6-1 -2 0 -3 0 -4 0 -4 0 -4 0 -5 0 -4 0 -5 0 -4 0 -4 0 -4 0 -4 1 -5 0 -4 1 -3 0 -4 1 -4 1 -4 1 -4 1 -4 2 -4 1 -4 2 -4 2 -5 2 -4 2 -5 3 -5 3 -5 3 -6 3 -6 4 -7 4 -7 4 -8 5 -8 6 -9 6 -10 6 -11 7 -13 8 -13 9 -16 10 -17 11 -19 11 -20 12 -22 12 -23 13 -26 13 -23 11 -22 9 -20 8 -18 6 -16 4 -16 3 -15 2 -13 1 -12-1 -11-1 -10-4 -8-4 -7-5 -6-7 -3-8 -3-8 0-9 0-10 2-9 3-10 5-10 5-11 7-10 7-10 8-10 10-10 10-10 10-9 12-10 12-9 13-8 14-8 14-8 15-8 15-7 16-6 16-6 16-6 17-5 16-4 17-4 16-4 16-3 16-2 15-2 14-2 13-1 11 0 13-1 11 0 12-1 10 1 9 0 7 0 7 0 6 1 6 0 5 1 3 0 2 0 3 0 3 1 4 0 4 1 3 0 4 1 3 1 4 0 3 1 3 1 3 0 3 1 2 1 2 1 2 1 2 1 2 1 1 0 2 1 1 1 0 2 1 1 0 1 1 1 -1 1 0 2 -1 1 0 2 -2 1 -1 2 -2 2 -2 2 -2 2 -4 3 -3 3 -5 4 -5 4 -6 5 -6 4 -7 5 -7 5 -8 6 -8 6 -9 6 -10 7 -11 8 -11 8 -14 10 -15 10 -18 12 -18 13 -19 12 -21 13 -21 14 -23 14 -24 14 -26 14 -30 16 -27 12 -26 11 -22 8 -21 6 -18 5 -18 3 -16 1 -14-1 -13-1 -12-4 -11-4 -8-6 -8-8 -6-9 -4-10 -2-11 0-11 0-11 3-13 3-12 5-12 6-13 7-12 9-13 9-12 10-12 11-12 12-11 13-12 14-10 14-11 14-10 16-9 15-9 17-8 16-8 16-7 17-6 16-6 12-4 12-4 13-3 18-5 19-5 23-4 27-5 27-3 23-3 21-1 20-1 18-1 18 0 17 0 16 0 14 1 12 0 11 1 10 0 8 1 7 0 7 1 5 0 5 0 5 1 3 0 3 0 2 0 2 0 2 0 3 0 3 0 3 0 3 0 3 0 3 0 3 0 3-1 3 0 3 0 3-1 3-1 3 0 3-1 3-1 3-1 3-1 3-1 3-2 3-1 4-2 3-2 4-2 4-3 4-2 5-3 5-3 5-3 6-4 6-4 7-5 7-5 8-5 9-6 9-7 11-7 12-8 13-9 15-9 17-12 18-12 20-12 20-13 22-13 23-13 26-14 27-14 25-12 24-10 21-7 20-6 18-5 16-3 16-1 14 0 12 1 12 3 9 4 9 6 7 6 5 9 4 9 2 9 1 11 -1 10 -3 11 -3 12 -5 11 -6 11 -7 12 -8 11 -9 12 -10 11 -10 11 -12 10 -12 10 -13 10 -14 10 -15 9 -14 9 -16 8 -16 8 -16 7 -16 6 -17 6 -17 6 -16 5 -16 4 -10 2 -11 3 -14 3 -18 3 -19 3 -23 3 -21 2 -20 2 -18 0 -17 1 -17 0 -14 0 -13-1 -11 0 -10-1 -9 0 -8-1 -8 0 -6-1 -6-1 -6 0 -5-1 -4 0 -4-1 -3 0 -4 0 -3-1 -2 0 -3 0 -2-1 -2 0 -2 0 -1 0 -2 0 -1 0 -2 0 0 0 -1 0 -1 0 -1 0 0 0 -1 0 -2 0 -1 0 -1 0 -1 0 -1 0 -1 0 -1 0 -1 0 -1 1 -1 0 -1 0 -2 1 -1 0 -1 1 -1 0 -1 1 -2 0 -1 1 -2 1 -1 1 -2 1 -1 1 -2 1 -2 1 -2 1 -3 2 -2 2 -3 2 -3 2 -3 2 -3 2 -4 3 -4 3 -4 3 -5 3 -5 4 -5 4 -6 4 -7 5 -7 5 -8 6 -8 6 -9 7 -11 7 -11 8 -13 10 -14 10 -16 11 -18 13 -19 13 -20 13 -20 14 -22 14 -23 15 -24 15 -26 15 -29 16 -32 16 -29 13 -26 11 -23 7 -21 6 -19 4 -18 2 -16 1 -15-1 -14-3 -12-5 -11-6 -9-7 -8-9 -6-11 -4-11 -2-13 0-13 1-13 2-14 4-14 6-14 6-14 8-14 9-14 10-14 10-13 12-13 13-13 13-13 14-11 15-12 16-11 15-10 16-10 17-9 16-8 16-7 11-5 13-6 12-4 17-6 19-7 23-6 25-7 32-6 27-5 32-5 26-2 24-2 22-2 20 0 20-1 19 0 18 0 18 0 17 1 12 0 11 1 10 0 8 0 4 1 5 0 5 0 5 0 6 0 6 0 6 0 6 0 6 0 6 0 5 0 5 0 6-1 5 0 5-1 5-1 5-1 4-1 5-2 5-1 5-2 5-2 5-2 5-2 6-3 6-3 6-3 6-4 7-4 7-4 8-5 9-5 9-5 10-6 11-7 12-8 13-8 15-8 16-10 18-10 20-11 21-11 20-10 20-9 19-8 17-7 17-5 15-5 14-3 14-2 12-1 11 0 11 2 9 2 7 4 7 5 5 5 3 7 2 7 1 8 -1 8 -1 9 -3 8 -5 9 -5 9 -6 9 -7 9 -8 9 -8 9 -10 9 -10 8 -11 8 -12 8 -12 8 -13 7 -13 7 -14 6 -15 6 -14 6 -16 5 -15 5 -16 4 -15 4 -16 3 -16 3 -16 2 -15 2 -15 1 -15 1 -15 1 -14 0 -11-1 -11-1 -8 0 -8-1 -6-2 -6-1 -5-1 -4-1 -4-2 -3-2 -3-1 -2-2 -1-2 -1-2 -1-2 0-2 0-2 1-3 1-2 2-3 2-3 3-3 4-4 5-4 5-5 7-6 10-7 12-9 13-10 13-9 15-10 16-10 17-12 18-11 19-12 21-12 21-13 23-12 26-13 23-11 22-10 20-7 18-6 17-5 15-3 15-2 13-1 13 1 11 2 9 3 9 4 7 5 5 7 4 8 2 8 1 9 0 10 -2 9 -3 10 -5 10 -5 11 -6 10 -8 10 -8 10 -9 10 -10 10 -11 10 -12 9 -12 9 -13 9 -14 8 -14 8 -15 7 -15 7 -16 7 -16 6 -16 5 -16 5 -17 5 -17 4 -16 3 -16 3 -16 3 -15 2 -14 1 -10 1 -11 1 -12 1 -14 0 -13 0 -10 0 -9 0 -8 0 -7 0 -7-1 -6 0 -5-1 -4 0 -2 0 -3-1 -3 0 -3-1 -4 0 -3-1 -4 0 -3-1 -3 0 -4-1 -3-1 -3-1 -2 0 -3-1 -2-1 -2-1 -2-1 -2-1 -1 0 -1-1 -1-1 -1-1 -1-2 0-1 0-1 0-1 0-1 1-2 0-1 1-2 2-1 1-2 2-2 3-3 3-2 3-3 4-3 5-4 6-5 6-4 6-5 7-5 7-5 8-6 9-6 9-7 11-7 11-8 12-9 15-10 16-11 18-12 19-13 20-13 21-13 21-14 24-14 25-14 28-15 28-14 27-12 24-10 22-7 20-6 18-3 17-3 15 0 14 1 13 2 11 4 10 5 8 7 7 8 5 10 3 10 2 11 0 11 -2 12 -2 12 -5 13 -5 12 -6 13 -8 12 -9 13 -9 12 -11 12 -11 12 -13 11 -13 11 -14 11 -14 10 -15 10 -16 9 -15 9 -17 8 -16 7 -16 7 -17 6 -15 6 -6 2 -7 2 -15 5 -16 4 -20 4 -22 5 -26 5 -29 4 -23 2 -22 2 -20 1 -19 1 -18 0 -17 0 -17 0 -14 0 -13-1 -12 0 -10-1 -8 0 -8-1 -6 0 -6-1 -5 0 -4 0 -4 0 -3 0 -2 0 -2 0 -3-1 -3 0 -3 0 -3 0 -3 0 -4 1 -3 0 -3 0 -3 0 -3 1 -3 0 -3 1 -3 0 -3 1 -3 1 -3 1 -3 1 -3 1 -3 1 -3 2 -4 1 -3 2 -4 2 -4 2 -4 3 -4 3 -5 2 -5 4 -6 3 -6 4 -6 4 -7 5 -8 5 -8 6 -9 6 -10 7 -11 7 -13 9 -13 9 -16 10 -18 12 -19 12 -20 13 -21 12 -23 14 -24 13 -27 14 -26 13 -24 11 -22 8 -20 7 -19 5 -17 3 -16 2 -14 1 -13-1 -12-2 -11-3 -9-5 -7-6 -6-8 -5-8 -3-10 -1-10 0-10 2-11 3-11 4-11 6-11 6-12 8-11 8-11 10-11 10-11 11-11 12-10 13-10 13-10 15-9 14-9 15-8 16-8 16-7 16-7 17-6 16-6 17-5 16-5 16-4 9-2 10-2 17-3 17-3 21-3 22-2 20-2 19-1 17-1 17 0 15 0 13 0 12 1 10 0 9 1 9 1 7 0 7 1 6 1 5 0 6 1 4 0 4 1 4 0 3 1 3 0 3 0 3 1 2 0 2 0 2 0 2 1 1 0 2 0 1 0 1 0 2 0 1 0 0 0 1 0 1 0 0 0 1 0 1 0 0 0 1 0 1 0 1 0 1 0 1 0 1 0 0 0 1 0 1-1 1 0 1 0 1-1 1 0 1 0 1-1 1 0 1-1 1-1 1 0 2-1 1-1 1-1 2-1 2-1 2-1 2-2 2-1 2-2 3-2 2-1 3-3 3-2 4-2 4-3 4-3 4-3 5-4 5-4 6-4 6-4 6-5 8-5 7-6 9-7 10-7 10-7 12-9 13-9 15-11 17-12 18-13 18-13 20-14 21-14 22-14 23-15 24-15 26-15 29-17 33-16 29-14 27-11 24-8 21-6 20-4 18-2 17-1 16 1 14 3 12 4 11 6 10 8 8 9 6 11 5 12 2 12 1 14 -1 13 -3 15 -3 14 -6 14 -6 15 -8 15 -8 14 -10 14 -11 14 -12 14 -12 13 -14 13 -14 12 -15 12 -15 11 -16 11 -16 10 -16 9 -16 9 -16 7 -10 5 -10 5 -14 5 -17 6 -19 7 -22 7 -26 7 -31 7 -34 7 -28 4 -29 3 -25 3 -23 1 -22 1 -21 1 -19 0 -19 0 -18 0 -19 0 -17-1 -11 0 -9-1 -7 0 -4 0 -4 0 -6 0 -6-1 -7 0 -7 0 -7 0 -6 0 -7 0 -6 0 -6 0 -6 0 -6 1 -6 1 -5 0 -6 1 -5 1 -6 1 -5 2 -5 1 -5 2 -6 2 -5 2 -6 3 -6 2 -6 3 -6 4 -7 3 -7 4 -8 5 -8 5 -9 5 -10 6 -10 6 -12 7 -12 7 -14 8 -15 8 -16 9 -18 10 -18 9 -18 9 -18 9 -18 7 -16 6 -16 5 -14 4 -14 3 -13 3 -11 1 -11 0 -10-1 -9-3 -7-3 -6-4 -5-5 -4-6 -2-7 0-7 0-8 2-8 3-8 4-8 5-9 6-8 6-8 8-9 8-8 10-8 10-8 10-7 11-8 12-7 13-6 13-7 13-6 14-6 14-5 15-5 14-4 15-4 15-3 16-3 15-2 14-2 15-2 14-1 14 0 14 0 14 1 11 1 8 1 7 1 6 2 5 1 4 2 3 2 3 2 2 2 1 2 1 2 0 3 0 3 -1 2 -2 4 -2 3 -3 4 -4 4 -5 4 -5 5 -7 6 -9 7 -11 8 -16 11 -15 11 -16 10 -17 11 -18 11 -19 12 -20 11 -21 12 -24 13 -22 10 -20 9 -19 8 -17 6 -17 5 -15 3 -14 3 -13 1 -12 0 -11-1 -9-2 -9-4 -7-4 -5-6 -5-7 -2-7 -1-8 0-8 1-9 3-9 4-9 4-10 6-9 7-9 8-10 8-9 10-9 10-9 11-8 12-8 12-9 13-7 13-7 14-7 15-7 15-6 15-6 16-5 15-5 17-4 16-3 16-4 16-2 16-2 15-2 15-1 15-1 16-1 15 0 10 1 10 0 9 1 7 1 7 1 6 1 5 1 5 1 4 1 4 1 3 2 3 1 2 1 2 2 2 2 1 1 0 2 1 2 0 2 -1 2 -1 2 -1 2 -2 3 -2 3 -3 3 -3 3 -5 4 -5 5 -7 5 -8 6 -11 9 -10 7 -11 8 -12 8 -13 9 -15 10 -17 11 -17 12 -19 12 -20 12 -21 13 -22 13 -24 13 -27 14 -24 11 -23 10 -21 8 -19 6 -17 5 -17 3 -15 2 -13 0 -13-1 -11-2 -10-3 -9-5 -7-6 -5-8 -4-8 -3-9 0-10 0-9 2-11 4-10 4-11 6-11 6-11 8-11 9-10 9-11 10-10 12-10 12-10 12-9 14-10 14-8 14-9 15-7 16-8 16-7 16-6 16-6 17-5 17-5 16-4 16-4 16-3 9-2 10-1 14-2 15-2 18-2 20-2 18 0 16-1 15 0 13 0 11 1 9 0 9 1 8 0 7 1 6 1 6 0 5 1 5 1 4 0 4 1 3 0 3 1 3 0 2 1 3 1 2 0 2 0 1 1 2 0 1 1 1 0 1 0 0 0 1 1 1 0 1 0 1 1 1 0 1 0 1 1 1 0 0 1 1 0 0 1 1 0 0 0 1 1 0 0 0 1 0 0 0 1 0 1 0 0 -1 1 0 1 -1 0 0 1 -1 1 -1 1 -1 1 -2 1 -1 2 -2 1 -2 2 -3 2 -3 2 -2 2 -4 2 -3 3 -3 2 -4 3 -4 3 -4 3 -5 4 -5 4 -6 4 -6 4 -6 5 -7 5 -8 6 -8 6 -10 7 -10 7 -11 9 -13 9 -14 10 -16 12 -18 12 -18 13 -20 14 -20 14 -22 14 -22 14 -24 15 -26 16 -28 16 -33 17 -30 14 -28 12 -24 8 -22 7 -20 4 -18 3 -17 1 -16-1 -15-2 -12-4 -12-6 -10-7 -8-9 -7-10 -4-12 -3-12 -1-13 0-14 2-14 4-14 5-14 6-15 7-14 9-15 9-14 11-14 11-14 13-13 13-13 14-12 15-12 15-11 16-11 16-10 16-9 16-9 16-8 12-5 12-6 12-5 17-6 19-7 22-6 26-7 30-7 34-7 28-4 29-4 25-2 23-2 22-1 20 0 20 0 19 0 18 0 18 0 17 1 11 0 9 0 7 1 5 0 5 0 5 0 7 1 6 0 7 0 7 0 6 0 7 0 6 0 6 0 6-1 5 0 6-1 5-1 6 0 5-1 5-2 5-1 6-2 5-1 5-2 6-3 5-2 6-3 6-3 7-3 6-4 7-4 8-4 8-5 9-6 10-5 10-7 12-6 12-8 14-8 15-9 17-9 18-10 18-9 19-10 19-8 17-7 17-7 16-5 14-4 14-4 13-2 12-1 11 0 10 1 9 2 8 3 6 5 5 5 4 6 2 7 1 7 -1 8 -2 8 -3 8 -3 8 -5 9 -6 8 -7 9 -8 8 -8 9 -9 8 -10 8 -11 7 -11 8 -12 7 -12 7 -13 6 -14 7 -14 5 -14 6 -14 5 -15 4 -16 4 -15 4 -15 3 -15 2 -15 2 -15 2 -14 1 -14 0 -15 0 -14 0 -10-1 -9-1 -7-1 -7-1 -5-2 -5-2 -4-1 -3-2 -2-2 -2-2 -1-2 -1-3 0-2 0-3 1-2 2-3 2-4 3-3 4-4 4-5 6-5 7-5 8-7 12-9 15-10 15-11 16-11 17-11 18-11 19-11 19-12 22-12 23-12 23-11 21-10 20-8 18-7 16-5 16-4 15-3 13-2 13 0 11 0 10 2 9 3 8 5 6 5 5 7 3 7 2 8 0 8 -1 9 -2 9 -4 10 -4 9 -6 9 -7 10 -7 9 -8 10 -10 9 -10 9 -10 9 -12 9 -12 8 -13 8 -13 7 -14 7 -15 7 -14 7 -16 5 -15 6 -16 5 -16 4 -17 4 -16 4 -16 3 -16 2 -16 2 -15 2 -15 1 -15 0 -16 1 -12 0 -11-1 -9 0 -8-1 -7-1 -6-1 -6-1 -5-1 -5-1 -4-1 -4-1 -4-1 -3-1 -2-2 -2-1 -2-1 -2-2 -1-1 -1-2 0-2 0-2 0-2 1-2 1-2 2-2 2-3 3-3 3-3 4-3 4-4 6-5 8-6 9-7 9-7 10-7 11-8 11-8 13-9 15-9 16-11 18-12 19-12 19-13 21-12 22-13 24-14 26-13 26-13 24-11 22-8 19-7 19-5 17-4 15-2 15-1 13 0 12 2 10 3 10 5 7 6 6 7 5 8 3 9 1 10 0 10 -1 10 -3 11 -4 11 -5 11 -7 11 -7 11 -8 11 -10 11 -10 11 -11 10 -12 10 -12 10 -13 10 -14 9 -15 8 -15 8 -15 8 -16 7 -16 7 -17 6 -16 6 -17 5 -16 5 -17 4 -15 3 -12 2 -12 2 -18 3 -18 3 -21 2 -19 1 -18 1 -17 0 -16 0 -14 0 -12 0 -10-1 -9 0 -9-1 -7 0 -7-1 -6-1 -6 0 -5-1 -4-1 -5 0 -3-1 -4 0 -3-1 -3 0 -2-1 -3 0 -2-1 -2 0 -2 0 -2-1 -1 0 -2 0 -1-1 -1 0 -1 0 -1 0 -1 0 -1-1 -1 0 0 0 -1 0 -1 0 0-1 -1 0 0 0 0 0 -1 0 0 0 0 0 -1 0 0 0 0 0 -1 0 0-1 0 0 0 0 0 0 0 0 -1 0 0 0 0 0 0 0 0 0 0 0 0 0 0 0 0 0 0 0 0 0 0 0 0 0 0 0 -1 0 0 0 0 0 0 0 0 0 0 0 0 0 0 0 0 0 0 0 0 0 0 0 0 0 0 0 0 0 0-1 0 0 0 0 0 0 0 0 0 0 0 0 0 0 0 0 0 0 0 0 1 0 0 0 0 0 0 0 0 0 0 0 0 0 0 0 0 0 0 0 0-1 1 0 0 0 0 0 0 0 0 0 1 0 0-1 0 0 0 0 1 0 0 0 0-1 1 0 0 0 0-1 1 0 0 0 1-1 1 0 0-1 1 0 1-1 1-1 0 0 1-1 1-1 2-1 1-1 1-1 2-1 1-1 2-2 2-1 2-2 2-1 2-2 3-2 3-3 3-2 3-3 4-3 4-3 4-3 4-4 5-4 6-4 6-5 6-5 8-5 7-7 9-6 9-8 10-8 12-9 12-9 14-11 14-11 16-12 16-12 17-13 19-14 19-14 20-14 21-15 23-16 24-16 25-16 28-17 31-18 38-20 28-13 29-13 26-9 24-7 22-4 20-3 20-1 17 1 17 3 14 5 14 7 11 9 10 11 8 12 6 15 4 15 2 16 0 17 -1 17 -3 18 -5 18 -6 17 -7 18 -9 18 -10 17 -11 18 -12 16 -13 17 -13 15 -15 15 -15 15 -16 14 -16 12 -16 12 -16 11 -12 8 -10 6 -10 6 -16 9 -17 9 -20 10 -23 10 -26 10 -30 10 -34 10 -38 10 -45 9 -38 5 -34 4 -30 3 -27 2 -26 1 -24 1 -23 0 -22 0 -20 0 -19-1 -19-1 -12 0 -16-1 -15-1 -14 0 -14-1 -13-1 -12 0 -12-1 -11 0 -10-1 -10 0 -9 0 -9 0 -8 0 -8 1 -8 0 -8 1 -7 1 -7 1 -7 1 -6 2 -7 1 -7 2 -6 2 -7 2 -7 3 -7 3 -7 3 -8 3 -7 3 -8 3 -8 4 -9 3 -8 3 -9 4 -9 3 -8 3 -9 3 -8 2 -8 2 -8 2 -7 1 -7 0 -6 0 -5 0 -5-2 -4-1 -3-3 -2-3 -1-3 0-4 0-4 2-4 2-4 3-5 4-4 4-4 5-5 5-4 6-4 7-4 6-4 8-4 7-4 8-3 8-3 8-3 8-3 9-2 8-2 8-1 9-1 7-1 8 0 7 0 7 2 5 1 3 3 2 2 1 3 0 4 -1 3 -3 4 -4 5 -4 4 -6 5 -6 5 -7 5 -8 5 -8 5 -9 5 -9 5 -10 5 -9 4 -10 4 -9 4 -9 3 -9 2 -8 2 -7 1 -7 1 -7 0 -5 0 -5-1 -5-2 -3-3 -2-3 -2-3 0-4 1-4 1-4 3-5 3-4 3-5 5-5 5-4 5-5 6-4 7-5 6-4 8-4 8-4 8-3 8-4 9-3 8-3 9-2 9-2 9-2 8-2 9-1 8 0 8 0 7 1 7 1 5 2 3 2 2 3 1 3 -1 4 -1 4 -3 4 -4 4 -5 5 -6 5 -7 6 -7 5 -9 6 -9 5 -9 5 -10 6 -10 5 -10 4 -10 5 -10 3 -10 4 -9 2 -8 2 -8 2 -8 1 -6 0 -7-1 -5-1 -5-2 -3-2 -3-3 -1-4 -1-4 0-4 2-5 2-4 3-5 4-5 4-5 5-5 5-4 6-5 7-5 7-4 8-5 8-4 8-4 9-4 9-3 9-3 9-3 9-2 10-3 9-1 9-2 9 0 8-1 9 1 7 0 7 2 5 2 3 3 1 3 1 3 -1 4 -1 4 -3 4 -4 5 -6 5 -6 5 -7 6 -8 6 -9 5 -10 6 -10 6 -11 6 -10 5 -11 5 -11 5 -11 4 -10 4 -9 3 -9 2 -9 1 -8 1 -7 1 -7-1 -6-1 -5-1 -4-3 -3-3 -2-4 -1-4 0-4 2-5 1-5 3-5 4-5 4-5 5-5 6-5 6-6 6-5 8-4 7-5 9-5 8-4 9-4 9-4 10-3 10-3 9-3 10-3 10-2 10-1 9-2 10 0 9-1 8 1 8 1 7 2 5 2 3 3 1 3 1 3 -1 4 -1 3 -3 5 -4 4 -5 6 -7 5 -7 6 -9 6 -9 7 -10 6 -11 7 -12 6 -11 6 -12 5 -11 6 -12 4 -11 4 -10 3 -10 3 -9 2 -9 1 -8 1 -7 0 -6-1 -6-1 -5-3 -4-3 -2-3 -2-4 0-5 0-5 2-5 2-5 3-6 4-5 5-6 6-5 6-5 6-6 8-5 7-5 9-5 8-5 9-4 10-4 10-4 10-4 10-3 10-3 11-3 10-2 11-2 10-1 10-1 9 0 9 1 9 1 8 2 5 2 3 2 2 3 1 3 0 4 -2 4 -2 4 -3 4 -5 5 -6 6 -7 6 -8 6 -10 7 -11 7 -11 7 -12 7 -13 7 -12 6 -13 6 -12 6 -12 4 -11 4 -11 4 -10 2 -10 2 -9 2 -8 0 -8 0 -7-1 -6-2 -5-2 -3-4 -3-4 -2-4 0-5 1-5 2-6 2-6 4-5 4-6 5-6 5-6 7-5 7-6 7-6 8-5 9-5 9-5 10-5 10-5 10-4 11-4 10-3 11-4 11-2 11-3 11-2 11-1 11-1 10-1 10 0 9 1 10 2 6 2 5 2 3 3 2 3 0 3 0 4 -2 3 -2 5 -3 4 -5 5 -6 5 -7 6 -8 7 -11 8 -11 7 -13 8 -13 8 -13 7 -14 7 -14 7 -13 6 -13 5 -12 5 -12 4 -11 3 -11 2 -9 2 -10 1 -8 0 -7-1 -7-2 -6-2 -4-3 -4-4 -2-5 -1-5 1-5 1-6 2-6 3-6 4-6 5-7 6-6 6-6 7-6 7-6 9-6 8-6 10-5 9-5 11-5 10-5 11-5 11-4 12-3 12-4 11-2 12-3 12-2 11-1 11-2 11 0 11 0 10 1 10 1 8 2 5 3 3 2 3 3 1 3 0 3 -1 4 -1 3 -3 5 -4 4 -4 5 -6 6 -8 6 -9 7 -11 8 -13 8 -14 9 -14 9 -15 8 -15 8 -15 8 -15 6 -14 6 -13 5 -13 4 -12 4 -11 3 -10 1 -10 1 -9 1 -8-1 -7-2 -7-2 -5-4 -4-4 -2-5 -2-5 0-6 1-6 2-6 3-7 4-6 5-7 5-6 7-7 7-7 7-6 9-7 9-6 9-6 10-6 11-5 11-5 11-5 12-5 12-4 12-4 13-3 12-3 13-2 12-2 12-2 12-1 12 0 11 0 11 0 10 2 8 1 6 2 4 3 3 2 2 3 1 3 0 3 -1 4 -1 3 -3 4 -3 5 -5 5 -6 5 -7 6 -8 7 -10 7 -13 9 -15 10 -16 10 -17 10 -17 9 -16 9 -17 7 -15 7 -15 7 -14 5 -13 4 -13 4 -12 2 -11 2 -10 0 -9 0 -9-1 -7-2 -6-3 -5-4 -4-4 -3-6 -1-6 0-6 1-7 3-7 3-7 4-7 5-7 6-7 7-7 7-7 8-7 9-7 10-7 10-6 10-6 12-6 11-6 12-5 13-5 12-5 13-4 14-3 13-4 13-2 14-3 13-2 13-1 12-1 13 0 12 0 12 1 9 1 8 2 5 2 5 2 3 3 2 2 1 3 1 3 0 3 -1 3 -2 4 -3 4 -3 4 -5 5 -6 5 -6 6 -9 7 -10 8 -13 9 -15 10 -16 10 -17 10 -18 11 -20 11 -18 9 -18 9 -17 7 -16 7 -15 5 -14 4 -13 4 -13 2 -11 2 -11 0 -10 0 -8-2 -8-2 -6-4 -6-4 -3-6 -3-6 -1-6 0-7 2-7 2-8 4-8 4-7 6-8 6-8 7-8 8-8 8-7 10-8 10-7 10-7 12-6 11-7 13-6 12-6 14-5 13-5 14-5 14-4 14-3 15-3 14-3 14-2 14-2 14-1 13-1 14 0 13 0 11 1 9 1 8 2 6 1 5 2 4 2 3 2 3 3 1 2 1 3 0 2 0 3 -2 3 -2 4 -2 4 -4 4 -4 4 -5 5 -7 6 -8 6 -10 8 -13 9 -16 11 -15 10 -17 11 -18 11 -19 11 -20 11 -22 12 -20 10 -19 8 -18 8 -16 6 -16 5 -14 4 -14 2 -13 2 -11 1 -11-1 -10-1 -8-3 -7-4 -6-4 -4-6 -3-7 -2-7 0-8 1-8 2-8 4-8 4-9 5-8 7-9 7-9 8-8 9-9 9-8 11-8 11-8 11-7 12-7 13-7 14-6 13-7 15-5 14-6 15-4 15-5 16-4 15-3 15-3 16-2 15-2 15-2 14 0 14-1 15 0 14 1 11 1 8 1 7 1 6 1 5 2 5 1 4 2 3 2 2 1 2 2 1 2 1 3 0 2 0 2 -1 3 -1 3 -2 3 -3 3 -3 4 -4 4 -5 5 -6 5 -8 6 -10 8 -13 9 -15 11 -16 11 -16 11 -17 11 -18 11 -20 12 -20 12 -22 12 -24 12 -22 11 -22 10 -20 8 -18 7 -17 5 -15 4 -15 2 -14 2 -12 0 -11-1 -10-2 -9-4 -8-4 -6-6 -4-7 -3-8 -2-8 0-8 2-10 2-9 4-9 4-10 6-10 7-9 8-10 8-10 10-9 10-9 11-9 12-9 12-8 13-8 14-8 14-7 15-7 15-7 15-5 16-6 16-5 16-4 17-4 16-4 17-3 16-2 15-2 16-2 15-1 14-1 17 0 10 0 11 0 9 1 8 0 7 1 7 0 6 1 5 1 6 1 4 1 5 1 3 1 4 1 3 1 3 1 2 1 3 1 1 2 2 1 1 1 1 2 0 1 0 2 0 2 0 2 -1 2 -1 2 -2 2 -2 2 -3 3 -3 3 -3 3 -5 4 -6 5 -7 5 -8 7 -9 6 -9 7 -10 7 -10 7 -12 8 -13 9 -14 10 -16 11 -19 12 -18 12 -20 13 -21 13 -22 13 -24 13 -26 14 -27 14 -25 11 -23 9 -20 8 -19 5 -18 4 -16 3 -15 1 -14-1 -12-1 -11-4 -10-4 -8-6 -6-7 -5-8 -4-10 -1-9 0-11 1-11 2-11 4-11 5-11 7-12 7-11 8-12 9-11 10-11 11-11 12-10 13-11 13-9 14-10 14-9 16-8 15-8 16-8 16-7 17-6 16-6 17-6 16-4 16-4 7-2 8-2 16-3 16-3 20-4 22-2 22-3 19-1 19-1 17 0 17 0 14 0 13 0 12 1 10 0 9 1 8 0 7 1 7 1 6 0 6 1 4 0 5 1 4 0 3 1 4 0 3 0 2 1 3 0 2 0 2 0 2 0 1 1 2 0 1 0 2 0 1 0 0 0 1 0 0 0 1 0 1 0 1 0 1 0 1 0 2 0 1 0 1 0 1-1 1 0 1 0 1 0 1-1 1 0 1 0 2-1 1 0 1-1 1 0 2-1 1-1 2-1 1-1 2-1 2-1 2-1 2-1 2-2 2-2 3-1 3-2 3-2 3-3 4-2 3-3 5-3 4-3 5-4 5-4 6-4 6-5 7-5 8-5 8-6 9-7 10-7 11-8 12-8 13-10 16-11 18-13 18-13 19-13 21-14 21-14 22-14 24-15 25-15 28-16 33-16 29-14 23-10 25-9 22-7 20-5 19-3 17-1 16 0 14 2 13 4 11 5 10 7 9 8 6 10 5 11 3 12 2 13 -1 13 -2 13 -3 14 -5 14 -6 14 -7 14 -8 15 -9 13 -11 14 -11 13 -12 13 -13 13 -14 12 -15 12 -15 11 -15 11 -16 10 -16 9 -17 8 -16 8 -15 7 -8 3 -9 4 -15 6 -17 6 -20 6 -22 7 -27 6 -32 7 -28 5 -31 4 -25 2 -23 2 -22 1 -21 1 -19 0 -19 1 -18-1 -18 0 -17 0 -11-1 -10 0 -10-1 -7 0 -4 0 -5 0 -4 0 -6-1 -6 0 -6 0 -6 0 -6 0 -6 0 -5 0 -6 1 -5 0 -5 0 -6 1 -5 1 -5 1 -4 1 -5 1 -5 1 -5 2 -5 1 -5 2 -5 2 -5 3 -6 3 -6 2 -6 4 -6 3 -7 4 -7 4 -8 5 -9 5 -9 6 -10 6 -11 7 -12 7 -13 8 -15 9 -16 9 -18 11 -20 11 -21 11 -20 10 -20 9 -19 8 -17 6 -17 6 -15 4 -14 3 -14 2 -12 1 -11 0 -10-1 -9-3 -8-4 -7-4 -5-6 -3-7 -2-7 -1-8 1-8 2-8 3-9 4-9 5-9 6-9 7-9 8-9 9-9 9-8 11-9 11-8 11-8 12-7 13-7 14-7 14-7 14-6 15-5 15-6 15-4 16-5 16-3 16-4 15-2 16-3 15-2 15-1 15-1 15 0 15 0 11 0 10 1 9 1 7 1 7 1 5 1 5 2 4 1 4 2 3 1 3 2 2 2 1 1 1 2 1 2 0 3 0 2 -1 2 -1 3 -2 3 -3 3 -3 3 -3 4 -5 4 -6 5 -7 6 -9 7 -13 10 -13 9 -13 9 -15 10 -16 11 -17 11 -18 12 -20 11 -20 13 -22 12 -23 13 -25 13 -23 10 -22 10 -20 7 -18 6 -17 5 -15 3 -15 2 -13 0 -12 0 -11-2 -10-3 -8-5 -7-6 -5-6 -4-8 -2-9 -1-9 1-9 2-10 3-10 4-10 6-10 6-10 8-10 8-11 10-9 10-10 11-10 11-9 13-9 13-9 13-8 14-8 15-7 15-7 16-6 16-6 16-6 17-5 16-5 17-4 17-3 16-3 15-2 15-2 14-2 11-1 11 0 12-1 13-1 12 0 10 0 9 0 8 1 7 0 7 0 5 1 5 0 5 1 1 0 3 0 3 1 3 0 3 0 4 1 3 1 4 0 3 1 4 0 3 1 3 1 2 1 3 1 2 0 2 1 2 1 2 1 2 1 1 1 1 1 1 1 0 1 1 1 0 1 0 1 0 2 -1 1 0 2 -1 1 -2 2 -1 2 -2 2 -2 2 -3 2 -4 3 -4 3 -4 4 -6 5 -6 4 -6 5 -7 5 -7 5 -8 6 -9 6 -9 6 -10 8 -11 8 -13 8 -13 10 -16 11 -18 12 -19 13 -20 13 -21 13 -21 13 -23 14 -25 15 -28 15 -28 14 -27 12 -25 10 -22 8 -20 5 -18 4 -17 3 -16 0 -14 0 -13-3 -11-3 -10-5 -8-7 -7-8 -6-9 -3-10 -2-11 0-12 1-11 3-13 4-12 5-12 6-13 8-13 8-12 10-12 10-12 12-12 12-12 13-11 14-10 14-11 15-9 15-10 16-8 16-8 17-8 16-7 16-6 16-6 9-3 10-3 15-4 17-4 20-5 23-5 28-4 26-4 23-2 21-2 20-1 18 0 18 0 17 0 16 0 14 0 13 1 11 0 10 1 8 0 7 1 6 0 6 0 5 1 4 0 4 0 3 0 2 0 2 0 3 0 3 0 3 0 3 0 3 0 4 0 3 0 3 0 3-1 3 0 3 0 3-1 3-1 2 0 3-1 3-1 3-1 4-1 3-2 3-1 3-2 4-2 4-2 4-2 4-3 4-3 5-3 5-3 6-4 6-4 7-4 7-5 8-5 8-6 9-6 11-7 11-8 13-8 14-10 16-10 19-13 19-12 20-12 22-13 23-13 24-14 28-15 26-12 24-10 21-8 20-6 18-5 17-3 15-2 15 0 12 1 12 2 10 4 9 5 7 7 6 8 4 9 2 9 1 10 -1 11 -2 11 -3 11 -4 11 -6 12 -7 11 -8 11 -9 12 -9 11 -11 11 -11 10 -12 10 -13 10 -14 10 -14 9 -15 9 -15 8 -16 8 -16 7 -17 7 -16 6 -17 5 -16 5 -16 5 -15 3 -13 3 -13 3 -18 3 -19 3 -22 3 -21 2 -20 1 -18 1 -17 0 -16 0 -14 0 -12-1 -11 0 -10-1 -8 0 -8-1 -7-1 -7 0 -5-1 -6 0 -4-1 -5 0 -4-1 -3 0 -3-1 -3 0 -3 0 -2-1 -2 0 -2 0 -2 0 -2 0 -1-1 -2 0 -1 0 -1 0 -1 0 -1 0 0 0 -1 0 -1 0 -1 0 -1 0 0 0 -1 0 -1 0 -1 0 -1 0 -1 1 -1 0 -1 0 -1 0 -1 0 -1 1 -1 0 -1 0 -1 1 -1 0 -1 1 -1 1 -2 0 -1 1 -1 1 -2 1 -2 1 -1 1 -2 1 -2 1 -2 2 -2 2 -3 1 -3 2 -3 2 -3 3 -3 2 -4 3 -4 3 -4 3 -5 3 -5 4 -6 4 -6 5 -6 4 -8 6 -7 5 -9 7 -9 7 -11 7 -11 9 -13 9 -15 11 -17 11 -18 13 -18 13 -20 14 -21 14 -21 14 -23 15 -25 15 -26 15 -29 16 -32 17 -30 13 -26 11 -23 8 -22 6 -19 4 -18 2 -17 0 -15-1 -14-2 -13-5 -11-6 -9-7 -8-9 -6-11 -4-12 -3-12 0-14 1-13 2-14 4-14 5-15 7-14 7-15 9-14 10-14 11-14 12-13 12-13 14-13 14-12 15-12 15-11 16-10 16-10 16-9 16-9 16-7 10-5 12-5 13-5 17-7 19-6 23-7 26-7 31-7 31-5 27-4 29-4 24-2 23-1 21-1 21-1 19 0 19 0 18 0 18 1 16 0 11 0 9 1 7 0 5 0 5 0 5 1 6 0 7 0 6 0 7 0 6 0 6 0 6 0 6 0 6-1 6 0 5-1 5 0 6-1 5-1 5-1 5-2 5-1 5-2 6-2 5-2 6-3 5-3 6-3 7-3 6-4 8-4 7-4 8-5 9-5 10-6 10-6 11-7 13-7 13-8 16-9 16-10 18-9 19-10 19-10 19-9 18-8 17-6 16-6 16-4 14-4 13-2 12-1 12-1 10 1 9 2 8 3 7 4 5 5 4 7 2 6 1 8 0 7 -1 8 -3 9 -4 8 -5 9 -5 8 -7 9 -7 8 -9 9 -9 8 -10 8 -10 8 -11 8 -12 7 -13 7 -13 7 -13 6 -14 6 -14 5 -15 6 -15 4 -15 4 -15 4 -16 3 -15 3 -15 2 -15 2 -15 1 -14 1 -15 0 -14 0 -11-1 -10-1 -8-1 -7-1 -5-2 -5-1 -5-2 -3-1 -3-2 -3-2 -1-2 -1-2 -1-3 0-2 1-2 1-3 1-3 3-3 3-4 3-4 5-4 5-5 7-6 9-6 11-9 15-11 15-10 17-11 16-11 18-11 19-12 19-12 21-12 23-12 24-12 22-10 20-9 19-7 17-6 16-4 15-3 14-2 13-1 12 1 10 1 10 3 8 4 6 6 5 6 4 7 2 8 1 9 -1 9 -2 9 -3 9 -4 10 -6 9 -6 10 -7 10 -9 9 -9 10 -10 9 -10 9 -12 9 -12 8 -12 8 -14 8 -14 8 -14 7 -15 6 -15 6 -16 6 -16 5 -16 5 -17 4 -16 4 -16 3 -17 2 -15 3 -16 1 -15 1 -15 1 -15 1 -13 0 -12 0 -9-1 -9 0 -7-1 -7 0 -6-1 -6-1 -5-1 -5-1 -4-1 -4-1 -3-1 -3-1 -3-1 -3-2 -2-1 -2-1 -1-2 -1-1 -1-2 0-1 0-2 0-2 1-2 1-2 1-2 2-2 2-3 3-3 3-3 5-3 5-5 6-5 8-6 9-7 9-6 9-7 11-7 11-8 12-9 14-9 16-11 18-12 18-12 20-12 21-13 21-13 23-13 26-14 27-14 25-12 24-10 20-7 20-6 17-4 17-3 15-2 14 0 13 2 11 3 10 4 8 5 7 7 5 8"/>
<path id="dr" d="M1887 891l0 0 0 0 1 0 1 0 1 0 1 0 1 0 1 0 1 0 1 0 1 0 1 0 1 0 1 0 1 0 1 0 2 0 1 0 1 0 2-1 1 0 2 0 2 0 2 0 2 0 2 0 2 0 3 0 3 0 3-1 3 0 3 0 4 0 4-1 4 0 5-1 5 0 6-1 6 0 6-1 7-1 7-2 8-1 9-1 9-2 10-2 11-3 11-3 12-3 13-4 14-4 14-5 16-5 17-7 17-7 19-8 20-10 21-11 23-12 24-15 26-16 28-20 32-24 40-33 28-25 30-30 27-27 24-28 23-27 21-27 20-28 19-27 17-26 15-27 14-25 12-26 11-24 9-23 6-23 5-20 2-17 1-16 -2-14 -3-12 -4-11 -6-8 -8-7 -8-6 -10-4 -11-3 -13-1 -13 0 -14 0 -14 2 -16 3 -15 3 -16 4 -16 5 -16 4 -8 3 -9 3 -13 4 -16 6 -19 6 -21 8 -24 10 -27 10 -31 12 -35 15 -38 15 -43 17 -43 17 -38 15 -35 14 -31 11 -28 11 -27 10 -25 9 -24 9 -22 7 -21 8 -19 6 -11 4 -11 4 -21 7 -19 6 -19 7 -16 5 -16 5 -14 5 -13 5 -12 4 -12 4 -11 3 -10 4 -10 3 -9 3 -8 3 -8 3 -8 2 -7 3 -7 2 -6 2 -7 2 -6 1 -5 2 -6 1 -5 1 -6 1 -5 0 -5 1 -6-1 -5 0 -5 0 -5-1 -6-1 -5-2 -5-2 -5-2 -5-2 -4-3 -5-2 -4-3 -4-3 -3-4 -3-3 -3-3 -2-3 -1-4 -1-2 0-3 1-2 1-1 2-2 2 0 2-1 3 0 4 0 3 1 4 0 4 1 5 2 4 2 5 2 5 2 4 3 5 3 5 3 4 3 4 4 4 4 3 3 2 4 2 4 0 3 0 3 -1 2 -1 2 -2 2 -3 1 -3 0 -4 0 -4 0 -4 0 -4-1 -5-2 -5-2 -5-2 -5-2 -5-3 -5-3 -5-4 -4-3 -4-4 -3-3 -3-4 -3-3 -1-4 -2-3 0-3 0-3 1-2 1-2 2-1 2-1 3 0 3-1 4 0 4 1 4 1 4 1 5 1 4 2 5 2 5 3 5 2 5 3 5 4 5 3 4 4 4 4 3 4 3 4 2 3 1 4 0 3 -1 3 -1 2 -2 2 -3 1 -3 1 -3 0 -5 0 -4 0 -5-1 -5-2 -5-1 -5-2 -5-3 -6-3 -5-3 -5-3 -4-4 -4-4 -4-3 -4-4 -3-4 -2-4 -2-3 -1-4 0-3 1-2 1-2 1-2 3-1 2-1 3 0 4 0 3 0 5 0 4 1 5 2 4 1 5 2 5 3 6 2 5 3 5 3 5 4 5 4 5 4 4 4 3 4 3 4 2 4 1 4 0 3 -1 2 -2 3 -2 2 -3 1 -3 1 -4 0 -4 0 -5 0 -5-1 -5-2 -5-2 -6-2 -5-3 -6-3 -5-3 -5-3 -5-4 -5-4 -4-4 -3-4 -4-4 -2-4 -2-4 -1-3 0-3 0-3 1-2 2-2 2-1 2-1 3-1 4 0 4 0 4 0 4 1 5 2 5 1 5 2 5 2 6 3 5 3 6 3 5 4 5 3 5 4 5 5 4 4 3 4 3 5 1 4 1 3 -1 4 -1 2 -2 2 -2 2 -4 1 -3 1 -5 0 -4 0 -5-1 -6-1 -5-2 -6-2 -6-2 -6-3 -5-3 -6-4 -5-4 -5-4 -5-4 -4-4 -4-4 -3-4 -2-5 -2-4 -1-3 0-3 0-3 1-2 2-2 2-2 3 0 3-1 4 0 4 0 4 1 5 0 5 2 5 1 6 3 5 2 6 3 6 3 5 3 6 4 6 4 5 4 5 4 4 5 4 4 2 5 2 4 1 4 0 4 -2 3 -1 2 -3 2 -3 1 -4 1 -4 0 -5 0 -5 0 -6-1 -6-2 -6-2 -6-3 -6-3 -6-3 -6-4 -6-4 -5-4 -5-4 -5-4 -4-5 -3-4 -3-5 -2-4 -2-4 0-3 0-3 1-3 1-2 2-2 3-1 3-1 4 0 4 0 4 0 5 1 5 1 5 2 6 1 5 3 6 2 6 3 6 3 6 4 6 4 6 4 5 5 5 4 5 5 3 5 3 5 2 4 0 4 0 4 -2 3 -2 2 -2 2 -4 2 -4 0 -5 1 -5 0 -5-1 -6-1 -6-2 -7-2 -6-3 -7-3 -6-4 -7-4 -6-4 -5-4 -5-5 -5-4 -4-5 -4-4 -3-5 -2-5 -2-4 -1-4 0-3 1-3 2-2 2-2 2-1 4-1 3-1 4 0 5 1 5 0 5 1 5 2 6 2 6 2 6 3 7 3 6 3 6 4 6 4 7 4 5 4 6 5 5 5 4 6 3 5 3 5 1 4 0 4 -1 3 -2 3 -3 2 -3 2 -4 2 -4 0 -6 0 -5 0 -6-1 -7-2 -6-2 -7-2 -7-3 -7-4 -7-4 -6-4 -6-4 -6-5 -5-5 -5-4 -4-5 -4-5 -3-5 -2-5 -2-4 0-4 0-3 1-3 2-2 2-2 3-2 3-1 4 0 4 0 5 0 5 1 6 1 5 2 6 2 7 2 6 3 7 3 6 3 7 4 7 4 6 5 6 5 6 5 6 5 4 6 4 5 2 5 2 5 0 4 -1 4 -2 3 -2 2 -4 2 -4 2 -4 1 -6 0 -5 0 -7-1 -6-1 -7-2 -7-3 -8-3 -7-4 -7-4 -7-4 -7-4 -6-5 -6-5 -5-5 -5-5 -4-6 -3-5 -3-5 -2-4 -1-5 0-4 1-3 1-2 2-3 3-1 3-2 3 0 5-1 4 0 6 1 5 1 6 1 6 2 6 2 7 3 7 3 7 3 7 4 7 4 7 4 6 5 7 5 6 5 6 6 4 6 4 6 3 5 1 5 0 4 -1 4 -2 3 -2 3 -4 2 -4 2 -5 1 -6 0 -6 0 -7-1 -7-2 -7-2 -8-2 -7-4 -8-3 -8-5 -7-4 -7-5 -6-5 -6-5 -6-5 -5-6 -5-5 -3-6 -3-5 -3-5 -1-5 0-4 0-3 1-3 2-3 3-2 3-1 4-1 4 0 5-1 5 1 6 1 6 1 6 2 7 2 7 2 7 3 7 4 7 3 7 4 8 5 7 4 7 6 7 5 6 6 6 6 4 6 4 6 2 5 1 6 -1 4 -1 4 -2 3 -3 3 -4 2 -5 1 -5 1 -7 0 -6 0 -7-1 -8-2 -8-2 -8-3 -8-4 -8-4 -8-4 -8-5 -7-5 -7-6 -6-5 -6-6 -5-6 -5-5 -4-6 -3-5 -2-6 -1-5 -1-4 1-4 1-3 2-2 3-2 3-2 4-1 4-1 5 0 6 1 5 1 7 1 6 2 7 2 7 2 8 3 7 4 8 3 8 5 7 4 8 5 7 5 7 6 7 6 7 6 5 7 4 6 3 6 2 5 0 5 -1 5 -2 3 -3 4 -4 2 -4 2 -6 1 -6 1 -7 0 -7-1 -8-1 -8-3 -8-2 -9-4 -9-4 -8-4 -8-5 -8-6 -8-5 -7-6 -6-6 -6-6 -5-6 -5-6 -4-6 -3-5 -2-6 -1-5 -1-4 1-4 2-3 2-3 3-2 3-1 4-1 5-1 5 0 6 1 6 0 7 2 7 2 7 2 7 3 8 3 8 3 8 4 8 4 8 5 8 5 8 6 8 5 7 7 7 6 6 7 5 7 3 6 2 6 0 5 0 5 -2 4 -3 4 -3 3 -5 2 -5 2 -7 1 -7 0 -7-1 -8-1 -9-2 -9-3 -9-3 -9-4 -9-5 -9-5 -8-5 -8-6 -8-6 -7-6 -7-6 -6-6 -5-7 -5-6 -3-6 -3-6 -2-6 -1-5 0-4 1-4 2-3 3-3 3-2 4-1 4-1 5-1 6 1 6 0 6 1 7 2 8 2 7 2 8 3 8 3 9 4 8 4 9 5 8 5 9 5 8 5 8 7 8 6 7 7 7 8 5 7 3 6 2 6 1 6 0 5 -1 5 -3 3 -4 4 -4 2 -6 2 -6 2 -8 0 -8 0 -8-1 -9-2 -9-3 -10-3 -10-4 -10-5 -9-5 -9-6 -9-6 -8-6 -8-6 -7-7 -6-7 -6-6 -6-7 -4-7 -3-6 -3-6 -1-6 -1-5 1-4 1-4 2-3 3-2 4-2 4-1 5-1 6-1 6 1 6 0 7 2 8 1 7 3 9 2 8 3 9 4 8 4 9 4 9 5 9 5 9 6 9 6 8 6 9 7 7 7 7 9 6 7 4 7 2 6 1 6 0 5 -1 5 -3 4 -3 4 -5 3 -6 2 -6 2 -8 1 -8 0 -9-1 -10-2 -10-2 -10-4 -10-4 -11-5 -10-5 -10-6 -9-6 -9-7 -8-6 -8-7 -7-7 -7-7 -6-8 -5-7 -4-7 -3-6 -2-7 -1-5 0-5 1-4 2-4 2-3 4-2 4-2 5-1 5-1 6 0 6 1 7 0 8 2 8 2 8 2 9 3 9 4 9 3 9 5 10 4 9 5 10 6 9 6 9 6 9 7 9 7 8 7 7 9 6 8 4 7 3 7 1 6 0 5 -1 5 -2 5 -3 4 -4 4 -6 2 -7 3 -7 1 -9 0 -9 0 -11-2 -10-2 -11-3 -11-5 -11-4 -11-6 -11-6 -10-6 -9-7 -10-7 -8-7 -8-8 -7-7 -7-8 -6-7 -5-8 -4-7 -3-7 -1-7 -1-5 0-5 1-4 3-4 3-3 3-2 5-2 5-1 6-1 6 0 7 1 7 1 8 2 8 2 9 2 9 3 10 4 9 4 10 4 10 5 10 6 10 5 10 6 10 7 10 7 9 7 8 8 9 9 7 9 4 8 3 6 2 7 1 6 -1 5 -1 5 -3 5 -4 4 -5 3 -6 3 -8 2 -8 1 -10 0 -10-1 -11-2 -12-2 -12-4 -12-5 -12-5 -11-6 -11-7 -11-7 -10-7 -10-8 -9-8 -8-8 -7-8 -7-8 -6-8 -5-8 -5-7 -3-8 -1-6 -1-6 0-6 2-4 2-4 3-3 4-2 4-2 6-1 6-1 6 0 8 0 7 1 9 2 8 2 9 3 10 3 10 4 10 4 10 4 11 5 11 6 10 5 11 7 10 6 10 7 10 8 10 8 9 9 8 10 7 8 4 8 2 7 2 6 0 6 -1 5 -1 5 -3 5 -4 4 -5 4 -6 3 -8 2 -9 2 -11 0 -11-1 -12-2 -13-3 -13-4 -12-5 -13-5 -13-7 -12-7 -11-7 -11-8 -10-8 -10-8 -9-9 -8-8 -8-9 -6-9 -6-8 -5-8 -3-8 -3-8 -1-6 0-6 1-5 2-4 3-4 4-3 4-2 5-2 6-1 7 0 7 0 8 1 8 1 9 2 10 3 10 2 10 4 10 4 11 4 11 5 11 6 12 5 11 7 11 6 11 7 11 8 10 8 10 8 10 9 10 11 6 9 5 8 2 7 2 7 1 6 0 5 -2 6 -2 5 -3 4 -5 4 -5 4 -7 3 -9 2 -10 2 -12 0 -13-1 -13-3 -14-3 -14-5 -14-6 -14-6 -14-7 -12-8 -12-8 -12-8 -11-9 -10-9 -9-9 -9-10 -8-9 -7-9 -6-9 -4-9 -4-8 -3-8 -1-7 0-6 1-6 2-4 3-4 4-3 5-3 5-2 6-1 7 0 8 0 8 1 8 1 10 2 10 2 10 3 10 4 12 4 11 4 12 5 11 6 12 6 12 6 12 7 12 7 12 8 11 8 11 8 10 9 11 10 8 9 6 10 5 7 3 8 2 6 1 7 0 6 -1 5 -1 5 -3 5 -4 5 -5 4 -6 4 -7 3 -9 2 -11 2 -13 0 -15-1 -15-3 -16-4 -15-5 -16-7 -15-7 -14-8 -14-8 -13-9 -12-9 -12-10 -11-10 -10-10 -9-9 -8-10 -7-10 -7-10 -5-10 -4-9 -3-8 -2-8 0-7 1-5 2-5 3-5 4-3 4-3 6-2 6-1 7-1 8 0 8 0 9 2 10 1 10 3 11 3 11 3 12 4 11 5 13 5 12 5 13 6 13 6 12 7 13 7 13 8 12 8 12 8 12 9 11 10 12 12 8 8 6 10 5 8 4 7 2 7 2 6 0 7 0 5 -1 6 -2 5 -3 5 -4 5 -5 4 -6 4 -7 4 -9 2 -11 2 -14 1 -15-1 -17-2 -17-4 -18-6 -17-6 -17-8 -16-9 -15-9 -14-9 -14-10 -12-10 -12-11 -12-11 -10-10 -9-11 -9-11 -7-11 -6-10 -5-10 -4-10 -3-9 -1-7 0-7 2-6 2-5 4-5 4-3 5-3 6-2 7-1 7-1 9 0 9 1 9 1 11 2 11 3 11 3 12 4 12 4 13 5 13 5 13 6 14 6 13 6 14 7 14 8 13 8 13 8 13 9 13 9 12 10 13 11 9 9 9 10 6 8 5 8 3 7 3 7 2 7 1 6 0 6 0 6 -1 6 -3 5 -2 5 -4 5 -5 5 -6 4 -7 4 -8 3 -11 3 -13 2 -16 0 -16-1 -17-3 -18-5 -19-6 -20-8 -19-9 -17-10 -17-10 -16-11 -14-11 -14-11 -13-12 -12-11 -11-12 -10-12 -9-12 -8-12 -7-11 -5-11 -5-11 -2-9 -2-9 0-7 1-7 3-6 3-4 4-4 6-4 6-2 7-2 8-1 8 0 10 1 10 1 10 2 11 2 12 3 13 4 13 4 13 5 14 5 14 6 14 6 15 7 14 7 15 7 15 8 14 8 14 9 14 9 14 9 13 11 14 11 10 9 9 9 7 9 5 7 5 8 4 7 3 7 3 6 1 7 1 6 0 6 0 6 -1 5 -2 6 -2 5 -3 5 -4 5 -5 5 -6 5 -7 4 -9 4 -12 3 -15 3 -15 1 -17-1 -17-2 -18-4 -19-6 -21-7 -23-10 -20-11 -20-11 -19-12 -17-13 -16-12 -14-13 -14-13 -13-14 -12-13 -11-13 -10-13 -8-13 -7-13 -6-12 -4-11 -3-11 -2-9 0-8 1-7 3-7 3-5 5-5 5-3 7-3 7-2 8-1 9 0 10 0 11 1 11 2 12 3 12 3 13 3 14 5 14 4 14 6 15 5 16 7 15 6 16 7 15 8 16 8 16 8 15 9 15 8 15 9 15 10 15 11 14 10 12 10 9 9 8 7 7 8 6 7 5 7 4 6 4 7 3 6 3 6 2 6 2 7 1 5 1 6 0 6 0 6 -1 5 -1 6 -2 5 -3 5 -3 5 -3 5 -5 6 -5 5 -7 5 -9 5 -13 4 -13 4 -13 2 -15 1 -16-1 -18-2 -18-3 -19-5 -20-6 -22-8 -23-11 -25-13 -23-14 -22-15 -19-14 -18-15 -17-15 -16-15 -14-15 -13-16 -12-15 -11-15 -10-14 -8-15 -7-13 -5-13 -4-13 -2-11 -1-9 1-9 2-7 3-7 5-5 5-4 7-4 7-2 9-2 9-1 10 0 11 1 12 1 12 2 13 3 14 4 14 4 15 4 15 5 15 6 16 6 17 7 16 7 17 7 16 7 17 8 16 8 16 8 15 8 14 7 13 8 9 5 11 6 11 7 11 8 10 6 8 6 8 6 7 5 6 5 5 4 5 4 2 2 2 2 4 4 4 3 3 4 4 4 4 4 4 5 4 4 3 5 4 4 3 5 3 5 3 4 2 5 3 5 2 5 2 5 1 5 2 4 1 5 1 5 1 5 0 5 1 5 0 5 0 5 -1 5 0 5 -1 5 -1 4 -2 5 -2 5 -2 5 -3 5 -3 6 -4 5 -4 5 -6 5 -6 5 -7 4 -7 4 -7 3 -8 3 -8 2 -10 2 -10 2 -11 1 -13 0 -14-1 -16-1 -18-3 -19-4 -20-5 -21-7 -21-9 -24-10 -25-13 -28-16 -28-19 -26-19 -24-19 -21-19 -20-19 -18-19 -17-18 -15-19 -14-18 -12-18 -11-18 -10-17 -8-16 -7-16 -5-15 -3-14 -1-12 0-11 1-9 3-8 5-7 5-6 7-5 7-3 9-3 10-2 10 0 12 0 12 1 13 2 14 2 14 4 15 3 16 5 16 5 16 5 16 6 17 6 16 6 16 6 8 4 10 4 15 6 16 7 21 8 23 11 27 12 26 13 22 11 21 10 19 10 18 10 18 10 17 10 15 10 14 9 12 8 11 8 9 7 8 7 7 6 6 5 5 5 5 5 4 5 4 4 4 3 1 1 1 2 2 3 3 3 3 3 3 3 2 4 3 4 3 4 3 4 3 4 3 4 3 4 2 4 3 5 3 4 3 4 2 4 3 4 3 5 3 4 3 4 3 4 3 4 4 5 3 4 4 4 4 4 4 4 5 3 4 4 6 3 5 4 6 3 7 3 7 3 8 2 9 2 9 2 11 1 12 1 12-1 15 0 17-3 19-3 19-5 20-6 22-8 23-10 25-13 28-16 26-16 24-19 22-17 20-17 19-18 17-17 15-18 15-17 13-17 12-17 10-17 9-16 7-15 6-15 4-14 3-13 1-11 -1-9 -2-9 -3-7 -5-6 -5-6 -7-4 -8-3 -9-2 -9-1 -11 0 -11 0 -13 2 -13 2 -13 2 -15 4 -14 4 -16 4 -16 6 -16 5 -16 6 -17 6 -16 7 -17 6 -15 7 -10 4 -10 4 -14 7 -17 8 -20 9 -23 11 -23 11 -20 11 -19 10 -18 10 -17 10 -16 10 -14 9 -12 9 -11 8 -10 8 -8 7 -8 7 -7 7 -7 6 -5 6 -5 5 -5 6 -4 5 -4 4 -3 5 -3 4 -3 5 -2 4 -3 3 -2 4 -2 3 -1 3 -1 2 -1 2 -1 1 -1 3 -1 2 -2 3 -1 3 -1 3 -2 3 -1 4 -2 3 -1 3 -2 4 -1 3 -1 4 -2 4 -1 3 -2 4 -1 4 -2 4 -1 4 -2 3 -2 4 -1 4 -2 4 -2 4 -2 4 -2 3 -3 4 -2 4 -3 4 -2 3 -4 4 -3 3 -3 4 -4 3 -5 3 -4 3 -5 3 -5 3 -6 3 -7 2 -7 2 -7 2 -8 2 -10 1 -9 1 -12 0 -12 0 -14-1 -15-2 -18-3 -19-4 -19-5 -21-7 -22-8 -22-10 -25-12 -26-15 -29-18 -30-21 -28-21 -25-21 -22-21 -20-20 -19-20 -17-20 -16-20 -14-20 -13-19 -12-19 -10-19 -9-18 -7-17 -5-16 -3-15 -2-13 0-12 2-10 3-9 4-7 5-7 7-5 8-4 9-3 10-1 11-1 12 0 12 1 14 2 14 2 15 3 15 4 16 5 16 5 16 5 17 6 16 5 15 6 11 4 11 4 17 7 18 7 22 10 26 10 31 14 26 12 28 12 24 11 22 11 21 10 19 10 19 10 18 9 18 10 16 10 15 9 12 8 10 7 8 5 8 6 5 3 3 3 3 2 4 4 5 3 5 4 5 5 5 4 4 4 5 5 5 4 5 5 4 4 5 5 4 5 4 4 5 5 4 4 4 5 4 4 4 4 5 5 4 4 5 4 4 4 5 4 5 4 6 4 6 3 6 4 6 3 7 3 8 3 8 2 9 2 10 1 11 1 12 1 13-1 15-1 16-3 19-5 20-6 22-8 23-10 24-13 22-13 21-14 18-13 17-15 17-14 15-14 14-15 12-14 12-15 11-14 9-14 8-14 6-13 5-13 4-11 1-11 1-9 -1-8 -2-7 -4-6 -4-5 -6-5 -6-3 -8-2 -8-2 -9 0 -10 0 -11 1 -12 1 -12 3 -13 3 -13 3 -14 4 -15 5 -15 5 -15 6 -16 6 -16 7 -17 7 -16 7 -16 8 -17 8 -16 8 -16 8 -15 8 -15 9 -15 9 -15 10 -12 8 -12 8 -9 7 -8 6 -8 6 -6 6 -7 6 -5 6 -6 6 -5 5 -4 6 -5 6 -3 5 -4 6 -3 5 -3 5 -2 6 -3 5 -1 6 -2 5 -1 5 -1 6 -1 5 0 5 0 6 0 5 1 5 1 5 1 5 2 5 2 5 3 5 3 6 4 5 5 5 6 6 7 5 9 5 8 3 9 4 9 2 11 2 11 2 13 0 14 0 16-1 18-3 19-4 20-5 21-7 22-9 23-11 26-13 28-17 25-17 24-18 21-17 19-17 18-18 17-17 15-18 14-17 13-17 11-17 10-16 8-16 7-15 5-15 4-13 2-12 0-11 -1-9 -2-8 -4-7 -5-6 -6-5 -7-3 -8-3 -9-2 -10-1 -11 0 -12 1 -12 2 -14 2 -14 3 -14 4 -15 4 -16 5 -15 5 -17 6 -16 6 -17 6 -16 7 -17 6 -15 7 -10 4 -11 5 -17 7 -18 9 -21 10 -24 12 -21 10 -20 11 -18 10 -17 10 -17 10 -14 10 -13 8 -12 9 -10 7 -9 8 -8 7 -8 7 -6 6 -6 6 -6 6 -4 5 -5 6 -3 5 -4 4 -3 5 -3 4 -3 4 -2 4 -2 4 -2 3 -2 3 -2 3 -1 3 0 1 -1 2 -2 2 -1 3 -1 3 -1 3 -2 3 -1 3 -2 3 -1 4 -1 3 -2 4 -1 3 -1 4 -2 4 -1 3 -2 4 -1 4 -2 4 -1 3 -2 4 -1 4 -2 4 -2 4 -2 4 -2 3 -2 4 -2 4 -3 4 -2 3 -3 4 -3 3 -4 4 -3 3 -4 4 -4 3 -5 3 -5 3 -5 2 -6 3 -7 2 -7 2 -7 2 -9 2 -9 1 -10 1 -11 0 -12 0 -14-1 -16-2 -18-3 -19-5 -20-5 -20-7 -22-8 -23-10 -24-12 -27-15 -29-19 -30-21 -28-21 -25-22 -22-20 -20-21 -19-20 -17-20 -16-20 -14-20 -13-19 -12-19 -10-19 -9-18 -7-17 -5-17 -3-14 -2-13 0-12 2-10 3-9 4-8 6-6 7-5 7-4 9-3 11-2 10-1 12 1 13 1 14 1 14 3 15 3 15 4 16 5 16 4 16 6 16 5 16 6 15 6 13 4 12 5 18 7 19 8 23 9 26 11 33 15 27 12 27 12 23 11 22 10 21 10 19 10 18 10 18 10 18 10 16 9 15 9 12 8 9 6 8 6 7 5 5 3 3 3 4 2 4 4 5 4 5 4 5 4 5 5 5 4 5 5 5 4 5 5 4 5 5 4 4 5 4 4 5 5 4 4 4 5 5 4 4 4 5 5 4 4 5 4 5 4 5 4 5 4 6 3 6 4 6 3 7 3 8 3 8 2 9 2 9 2 11 1 11 0 13 0 15-1 16-3 18-4 20-5 20-8 23-10 25-12 22-13 20-14 19-13 17-14 16-14 15-14 14-15 13-14 12-14 11-15 9-14 8-13 7-13 5-13 3-12 2-10 1-9 -1-9 -2-7 -3-6 -4-5 -5-4 -7-4 -7-2 -8-1 -9-1 -10 0 -11 1 -11 1 -12 2 -13 3 -13 4 -14 4 -15 4 -15 5 -15 6 -16 6 -16 7 -16 7 -16 7 -17 8 -16 7 -16 9 -16 8 -16 8 -15 9 -15 9 -15 10 -13 9 -12 9 -9 7 -8 7 -8 6 -7 6 -6 6 -6 6 -5 6 -4 6 -5 6 -4 6 -3 5 -4 6 -2 5 -3 6 -2 5 -2 6 -1 5 -1 6 -1 5 -1 6 0 5 0 5 1 6 1 5 1 5 2 5 2 5 3 5 3 5 4 6 5 5 6 5 7 6 8 4 9 4 9 3 10 3 10 2 12 1 13 1 15-1 17-2 19-3 19-4 20-6 21-7 22-9 25-12 27-15 25-16 25-17 22-17 20-17 19-18 17-17 16-17 14-17 13-17 12-17 11-16 9-16 7-15 7-15 4-14 3-12 1-11 0-10 -2-9 -3-7 -4-7 -6-5 -6-4 -8-3 -8-2 -10-2 -10 0 -11 0 -12 1 -13 2 -13 3 -14 3 -15 4 -15 5 -16 5 -16 5 -16 6 -17 6 -16 7 -17 6 -16 7 -15 7 -11 5 -11 5 -17 7 -18 9 -21 10 -23 12 -20 10 -18 10 -18 11 -16 10 -15 9 -13 9 -12 8 -10 8 -9 8 -8 7 -8 6 -7 7 -6 6 -5 6 -5 6 -5 5 -4 5 -3 5 -4 5 -3 5 -2 4 -3 5 -2 4 -2 4 -2 4 -2 3 -2 4 -1 3 -1 3 -1 3 -2 3 -1 2 0 2 -1 1 0 2 -1 3 -1 2 -1 3 -1 3 -1 3 -1 3 -1 3 -1 3 -1 3 -1 4 -1 3 0 3 -1 4 -1 3 -1 4 -2 3 -1 4 -1 3 -1 4 -1 4 -1 3 -2 4 -1 3 -2 4 -1 4 -2 3 -2 4 -2 3 -2 4 -3 3 -2 3 -3 4 -3 3 -3 3 -4 3 -4 3 -4 2 -4 3 -5 3 -6 2 -6 2 -6 2 -7 2 -7 1 -8 1 -9 1 -10 1 -11 0 -12-1 -14-1 -15-2 -18-3 -18-4 -20-5 -20-7 -21-8 -22-9 -24-12 -25-13 -27-16 -32-21 -30-23 -25-19 -25-23 -23-21 -20-22 -19-21 -18-21 -16-21 -15-21 -14-21 -12-20 -10-19 -9-19 -7-18 -6-18 -3-15 -2-14 0-12 1-11 3-9 5-8 5-7 7-5 8-4 9-4 11-2 11 0 12 0 13 0 14 2 14 3 15 3 15 4 16 4 16 5 17 5 16 6 15 5 7 3 9 3 15 6 16 6 20 8 22 9 26 10 31 13 31 13 28 13 28 12 24 11 23 11 22 10 20 9 19 10 19 9 18 10 18 10 16 9 11 6 9 5 7 5 5 3 5 3 5 3 6 5 7 4 6 5 7 4 6 5 6 5 6 4 6 5 6 5 6 5 5 4 5 5 6 5 5 4 5 4 5 5 5 4 5 4 5 4 6 4 5 4 6 4 6 3 7 4 6 3 7 3 8 2 8 2 9 2 9 2 11 0 11 1 13-1 13-2 15-2 17-4 18-6 19-7 19-9 19-10 18-10 17-12 16-11 16-12 14-13 13-12 12-13 12-12 10-13 9-13 8-12 7-12 5-11 4-11 2-10 1-9 0-8 -1-6 -3-6 -4-5 -4-4 -6-3 -7-3 -7-1 -8-1 -9 0 -10 1 -11 1 -11 2 -12 2 -12 4 -13 4 -14 4 -14 5 -14 5 -15 6 -15 6 -15 7 -15 8 -16 7 -15 8 -15 8 -15 9 -15 9 -14 9 -15 11 -14 10 -10 9 -11 10 -8 8 -7 8 -6 7 -5 7 -4 7 -3 7 -3 6 -3 7 -1 6 -2 6 0 6 0 6 0 6 1 5 2 5 2 6 3 5 4 5 4 5 6 5 6 5 9 4 11 5 15 3 15 2 16 1 17-2 18-2 18-4 20-6 21-7 23-10 24-12 21-13 21-14 19-13 17-14 17-14 15-14 14-15 13-14 11-14 11-15 9-14 8-13 7-13 5-13 4-12 2-10 1-10 -1-8 -2-7 -3-6 -4-6 -5-4 -6-3 -8-3 -8-1 -9-1 -10 0 -10 1 -12 1 -12 2 -12 3 -14 3 -14 4 -14 5 -15 5 -15 6 -16 6 -16 6 -16 7 -16 8 -17 7 -16 8 -16 8 -16 9 -16 8 -15 9 -15 9 -15 10 -13 8 -10 8 -10 8 -9 6 -7 7 -7 6 -7 6 -5 6 -6 6 -5 6 -4 6 -4 6 -4 5 -3 6 -3 6 -2 5 -3 6 -1 5 -2 6 -1 5 -1 6 0 5 -1 5 1 6 0 5 1 5 1 5 2 5 2 5 3 5 3 6 4 5 4 5 6 6 7 5 9 5 9 4 9 3 10 3 11 2 12 1 13 0 15 0 17-2 19-3 19-4 20-6 21-8 23-9 24-12 27-15 26-16 24-18 22-17 20-17 19-17 17-17 15-17 15-17 13-17 12-17 10-16 9-16 8-15 6-15 4-14 3-12 1-11 -1-10 -1-8 -3-8 -5-6 -5-5 -7-4 -7-3 -9-2 -9-2 -11 0 -11 0 -12 2 -13 2 -13 2 -15 4 -14 4 -15 4 -16 5 -16 6 -17 5 -16 7 -17 6 -16 7 -16 7 -16 6 -13 6 -11 5 -18 9 -18 8 -22 11 -22 12 -19 10 -19 10 -17 10 -16 10 -15 10 -12 8 -11 9 -10 7 -9 7 -8 7 -7 7 -7 6 -6 7 -5 5 -5 6 -4 6 -4 5 -4 5 -3 5 -3 4 -3 5 -2 4 -2 4 -2 4 -2 4 -2 3 -2 4 -1 3 -1 3 -1 3 -2 3 0 2 -1 2 0 1 -1 2 -1 3 -1 2 -1 3 -1 3 -1 2 0 3 -1 4 -1 3 -1 3 -1 3 -1 3 -1 4 -1 3 -1 4 -1 3 -1 4 -1 3 -1 4 -1 3 -1 4 -2 3 -1 4 -1 4 -2 3 -1 4 -2 3 -2 4 -2 3 -2 4 -2 3 -3 4 -3 3 -3 3 -3 3 -3 3 -4 3 -4 3 -4 2 -5 3 -5 2 -6 2 -6 2 -7 2 -7 2 -8 1 -8 1 -10 1 -10 0 -12 0 -13-1 -15-2 -17-3 -18-3 -19-5 -19-6 -21-8 -22-8 -23-11 -24-12 -27-15 -29-19 -32-22 -30-24 -26-22 -23-22 -21-22 -20-21 -18-21 -17-21 -15-21 -14-21 -12-20 -11-20 -10-19 -7-18 -6-18 -4-16 -3-14 0-13 1-11 2-10 4-9 5-7 7-6 8-4 9-4 9-2 11-1 12 0 13 0 13 2 15 2 14 3 16 4 16 4 16 5 16 5 16 5 16 6 9 3 11 4 14 5 17 7 19 7 22 9 26 11 31 13 32 14 28 12 28 12 25 11 23 11 21 10 21 10 19 9 19 10 18 9 18 10 16 9 11 6 9 6 7 4 5 3 5 3 5 3 6 5 7 4 7 5 6 4 7 5 6 5 6 5 6 4 6 5 5 5 6 5 5 4 6 5 5 4 5 5 5 4 5 4 6 4 5 5 5 3 6 4 6 4 6 3 6 4 7 3 7 3 8 2 8 2 9 2 9 1 11 1 11 0 13 0 13-2 15-3 17-4 18-6 19-7 19-9 18-9 18-11 17-11 16-12 15-12 14-12 13-12 12-13 11-13 10-12 9-13 8-12 7-12 5-11 4-11 2-9 1-9 0-8 -2-6 -3-6 -4-5 -4-4 -6-3 -7-2 -7-1 -9-1 -9 0 -10 1 -10 1 -11 2 -12 3 -13 3 -13 4 -13 4 -14 5 -14 6 -15 6 -15 6 -15 7 -16 7 -15 8 -15 8 -15 8 -15 9 -14 9 -15 10 -14 10 -14 11 -10 9 -10 9 -8 8 -7 8 -5 7 -5 7 -4 7 -4 7 -2 6 -2 7 -2 6 -1 6 0 6 0 5 1 6 1 6 2 5 3 5 3 5 4 5 5 5 6 5 8 5 9 4 15 4 15 3 15 1 17-1 17-2 18-3 19-5 21-7 22-9 24-12 22-12 21-13 19-14 18-13 16-14 16-14 14-14 13-15 12-14 11-14 10-14 8-14 7-13 6-13 4-12 3-10 1-10 0-9 -2-7 -3-6 -4-6 -5-4 -6-4 -6-3 -8-1 -9-1 -10-1 -10 1 -11 1 -12 2 -12 3 -13 3 -14 4 -14 4 -15 5 -15 5 -16 6 -15 7 -16 7 -17 7 -16 7 -16 8 -17 8 -16 9 -15 8 -15 9 -15 9 -16 10 -15 10 -11 8 -10 8 -9 7 -7 7 -7 6 -6 7 -6 6 -5 6 -5 6 -4 6 -4 5 -4 6 -3 6 -2 5 -3 6 -2 6 -1 5 -2 6 0 5 -1 6 0 5 0 5 1 6 1 5 1 5 2 5 2 5 2 6 4 5 4 5 5 5 6 6 7 5 8 4 10 4 9 3 11 3 11 2 13 1 13 0 16-1 18-2 19-4 19-5 21-6 22-9 23-10 25-13 27-16 25-16 23-17 20-17 19-17 18-17 16-17 15-17 13-16 13-17 11-16 9-16 8-15 7-15 5-14 4-13 2-12 0-10 -1-9 -3-8 -3-7 -5-5 -6-5 -7-3 -8-3 -9-1 -10-1 -11 0 -12 1 -12 1 -13 3 -14 3 -14 3 -15 5 -16 4 -15 6 -17 5 -16 6 -17 7 -16 7 -17 7 -16 6 -15 7 -12 6 -13 6 -18 8 -18 9 -22 11 -20 11 -19 10 -17 10 -17 11 -15 9 -12 9 -12 8 -10 8 -9 7 -8 7 -7 6 -7 7 -6 6 -5 6 -5 5 -4 6 -4 5 -4 5 -4 6 -3 4 -2 5 -3 5 -2 4 -2 4 -2 4 -2 4 -2 4 -1 4 -2 4 -1 3 -1 4 -1 3 -1 3 -1 3 -1 3 0 3 -1 3 -1 2 0 2 -1 2 0 1 0 2 -1 2 0 2 -1 2 0 3 -1 3 0 2 -1 3 0 3 -1 3 0 2 -1 3 -1 3 0 4 -1 3 0 3 -1 3 -1 3 0 3 -1 4 -1 3 0 3 -1 3 -1 4 -1 3 -1 3 -1 4 -1 3 -1 3 -2 3 -1 4 -2 3 -1 3 -2 3 -2 3 -2 3 -2 2 -3 3 -3 3 -2 2 -4 3 -3 2 -4 3 -4 2 -4 2 -5 2 -5 2 -5 1 -6 2 -7 1 -7 1 -8 1 -8 1 -10 0 -10 0 -12-1 -12-1 -15-2 -17-3 -17-4 -19-4 -19-6 -20-8 -21-8 -23-10 -23-12 -26-14 -27-16 -31-21 -33-24 -26-22 -27-24 -23-22 -22-23 -20-23 -19-22 -17-22 -16-22 -14-22 -13-21 -11-21 -10-21 -8-19 -6-19 -5-17 -2-15 -1-13 1-12 2-11 4-9 5-7 7-6 8-5 9-4 10-3 11-1 12 0 13 0 13 2 15 2 15 3 15 4 16 4 16 5 16 5 16 5 12 4 11 4 12 4 16 6 18 7 21 8 25 10 28 11 33 14 36 15 30 13 30 13 27 11 24 11 23 10 21 10 21 9 19 9 19 9 19 9 18 10 12 6 8 4 5 3 5 3 9 4 8 5 8 5 8 5 8 5 8 5 8 5 8 4 7 5 7 5 6 5 7 4 6 5 6 4 6 5 6 4 6 4 6 4 6 4 6 4 6 3 7 4 6 3 7 3 7 3 7 2 8 2 8 2 9 1 10 1 10 0 11 0 12-2 13-2 14-3 15-4 15-6 15-7 16-7 15-9 14-9 14-9 13-10 13-11 12-10 10-11 10-11 9-10 8-11 7-11 6-10 5-10 3-9 1-9 1-7 -1-6 -2-6 -2-5 -4-4 -5-3 -5-2 -7-2 -7-1 -8 0 -9 0 -9 1 -10 2 -10 2 -11 3 -12 3 -12 4 -13 5 -12 5 -14 5 -13 6 -14 7 -13 6 -14 8 -14 7 -13 8 -13 9 -13 9 -13 9 -12 10 -12 11 -8 9 -8 9 -5 9 -4 7 -4 7 -2 7 -2 7 0 6 0 6 0 6 2 5 2 5 4 5 4 5 5 5 6 4 8 3 9 4 12 2 14 1 16 0 16-2 18-3 18-6 21-7 19-8 18-10 18-10 16-10 15-11 14-11 14-12 12-11 12-12 11-12 9-12 9-12 8-12 6-11 5-11 3-10 3-9 0-8 0-7 -2-7 -2-5 -4-4 -5-4 -5-3 -7-2 -7-1 -9-1 -8 0 -10 1 -10 1 -11 3 -12 2 -12 4 -12 3 -14 5 -13 5 -14 5 -14 6 -15 6 -14 7 -15 8 -15 7 -14 8 -15 9 -14 8 -13 9 -14 10 -14 11 -14 12 -10 10 -7 8 -6 8 -6 8 -4 7 -3 7 -3 7 -2 6 -1 7 -1 6 0 6 1 5 2 6 2 5 2 5 4 5 4 5 6 5 6 4 8 5 11 3 13 3 16 2 16 0 16-2 18-3 19-4 20-7 21-9 22-10 21-11 19-12 17-12 17-13 15-12 15-14 13-13 13-13 11-13 10-13 9-13 8-13 7-13 5-11 4-11 2-10 1-9 -1-8 -2-7 -2-6 -4-5 -5-4 -6-3 -7-2 -8-2 -9 0 -9 0 -10 0 -11 2 -12 2 -12 3 -13 3 -13 4 -14 4 -14 5 -15 6 -15 6 -15 6 -16 7 -16 8 -16 7 -15 8 -16 9 -15 8 -15 9 -15 10 -15 10 -15 10 -11 9 -11 10 -9 8 -7 7 -7 7 -5 7 -5 7 -4 7 -4 6 -3 6 -3 7 -2 6 -2 6 -1 6 0 6 0 5 0 6 1 5 1 6 2 5 2 5 3 5 4 6 5 5 6 5 7 5 9 5 13 5 13 3 14 2 14 0 17 0 17-2 18-4 20-5 20-6 22-9 23-10 25-14 23-14 22-14 19-15 18-15 17-15 15-15 15-15 13-16 12-15 11-15 9-14 8-15 7-13 5-13 4-13 2-10 0-10 0-9 -2-7 -4-6 -4-6 -6-4 -6-4 -8-2 -8-2 -10-1 -10 0 -11 1 -11 2 -13 2 -13 3 -14 3 -14 4 -15 5 -15 5 -16 6 -16 6 -16 7 -16 6 -17 8 -17 7 -16 8 -16 8 -16 8 -15 7 -14 8 -13 7 -10 6 -14 9 -11 7 -11 7 -10 7 -8 6 -8 5 -7 6 -6 5 -5 4 -5 4 -2 3 -3 2 -3 3 -4 4 -3 3 -4 4 -4 4 -3 5 -4 4 -3 5 -3 4 -3 5 -3 4 -3 5 -2 5 -2 5 -2 4 -2 5 -2 5 -1 5 -1 5 -1 5 -1 4 -1 5 0 5 0 5 0 5 1 5 0 5 1 5 2 4 1 5 2 5 2 5 3 5 3 6 4 5 5 5 6 5 6 5 6 4 7 4 7 3 8 3 8 2 10 2 10 1 11 1 13 1 14-1 16-1 18-3 19-4 19-6 21-6 22-9 23-10 25-13 27-16 29-18 26-19 25-20 21-19 20-19 19-19 16-18 16-19 14-18 13-18 11-18 10-17 8-17 7-16 5-15 3-14 2-13 0-11 -1-9 -3-9 -4-7 -5-6 -7-4 -7-4 -9-3 -10-2 -10 0 -12 0 -12 1 -13 1 -14 3 -14 3 -15 4 -15 4 -16 5 -16 5 -17 6 -16 6 -17 6 -15 6 -9 4 -10 4 -15 6 -17 7 -20 9 -23 10 -28 13 -26 12 -22 11 -21 11 -20 10 -18 10 -18 10 -17 10 -16 9 -13 9 -13 9 -11 8 -9 7 -8 7 -7 6 -7 5 -5 5 -5 5 -4 4 -4 4 -3 3 -1 2 -2 2 -3 3 -3 3 -3 4 -3 3 -3 4 -3 4 -3 4 -3 4 -3 4 -3 4 -3 5 -2 4 -3 4 -3 4 -3 5 -3 4 -3 4 -3 4 -3 5 -3 4 -3 4 -4 4 -3 4 -4 4 -4 4 -4 4 -5 4 -4 4 -6 3 -5 4 -6 3 -7 3 -7 2 -8 3 -9 2 -9 2 -11 1 -11 1 -13 0 -14-1 -17-2 -19-4 -19-5 -20-6 -22-8 -23-10 -25-12 -28-16 -25-17 -25-18 -21-17 -20-17 -18-17 -17-18 -16-17 -14-17 -13-17 -11-17 -10-16 -9-16 -7-15 -6-15 -4-14 -3-12 0-11 0-9 2-9 4-7 4-6 6-5 7-4 8-3 9-2 9-1 11 0 11 1 13 1 13 2 13 3 15 3 14 5 16 4 16 5 16 6 16 6 17 6 16 7 17 6 16 7 11 5 12 5 13 6 18 8 19 10 23 11 22 11 19 10 19 11 17 10 17 10 15 9 13 9 11 8 10 8 10 8 8 7 7 6 7 7 6 6 6 6 4 6 5 5 4 5 3 5 4 5 3 4 2 4 3 4 2 4 2 4 2 4 1 3 2 3 1 3 2 3 0 1 1 1 1 2 1 3 1 2 1 3 1 3 1 3 1 3 1 3 1 4 2 3 1 3 1 4 1 3 1 4 2 4 1 3 1 4 1 3 2 4 1 4 1 4 2 3 1 4 2 4 2 3 2 4 2 4 2 3 2 4 3 4 3 3 3 4 3 3 3 3 4 3 4 3 5 3 4 3 6 3 5 2 6 2 7 2 7 2 8 2 9 1 10 1 10 0 12 0 13-1 15-2 17-2 19-4 19-5 20-6 21-8 22-9 23-11 25-13 27-16 32-20 29-22 24-19 25-22 23-21 20-21 19-20 17-21 16-21 14-20 14-20 11-19 10-19 9-19 7-17 5-17 4-15 1-13 0-12 -2-10 -3-9 -4-8 -6-7 -7-5 -8-4 -9-3 -10-1 -11-1 -12 0 -13 1 -14 2 -14 2 -15 4 -15 4 -16 4 -17 5 -16 5 -16 6 -16 5 -10 4 -11 4 -13 5 -17 7 -20 8 -22 9 -27 11 -32 14 -28 12 -29 13 -25 12 -23 10 -22 11 -20 9 -19 10 -19 10 -18 9 -18 10 -16 9 -11 7 -12 7 -9 6 -7 5 -4 3 -4 3 -5 3 -5 4 -6 4 -6 5 -5 4 -6 5 -6 4 -5 5 -5 5 -6 5 -5 4 -5 5 -4 4 -5 5 -5 4 -5 5 -4 4 -5 5 -5 4 -5 4 -5 4 -5 4 -5 4 -6 4 -6 3 -6 4 -7 3 -7 3 -8 2 -8 2 -9 2 -10 2 -10 1 -12 0 -13-1 -15-2 -16-2 -18-5 -19-6 -22-9 -22-10 -21-11 -19-12 -18-12 -17-13 -16-13 -15-13 -14-14 -13-13 -11-14 -11-13 -10-14 -8-13 -7-13 -6-12 -4-11 -2-11 -1-9 0-8 1-7 3-7 4-5 5-4 5-4 7-2 8-2 8-1 10 0 10 1 11 1 11 2 12 2 13 4 13 3 14 5 15 5 14 5 16 6 15 6 16 7 16 7 16 8 16 8 16 8 15 9 15 8 15 10 15 9 16 11 14 10 12 10 9 8 8 7 7 7 6 7 5 7 5 7 4 6 4 6 3 6 3 6 2 6 2 6 1 6 1 6 0 6 0 5 0 6 -1 5 -2 5 -2 6 -2 5 -3 5 -4 5 -5 5 -5 6 -8 5 -9 5 -10 4 -12 3 -12 3 -13 1 -14 0 -17-1 -18-2 -18-4 -20-5 -20-7 -23-9 -24-11 -25-14 -24-15 -22-15 -20-15 -18-16 -17-15 -16-16 -15-16 -13-15 -13-16 -11-15 -9-15 -8-15 -7-14 -6-14 -3-12 -3-11 0-10 1-9 2-8 3-6 5-6 5-4 7-4 7-2 9-2 9-1 11 0 11 1 12 1 12 2 13 3 14 4 15 4 15 4 15 6 16 5 16 6 16 7 17 7 17 7 16 7 17 8 16 7 15 8 10 5 12 6 11 6 16 9 17 9 17 11 13 8 13 9 11 7 10 7 8 7 8 6 6 6 7 6 5 5 5 5 4 5 4 4 4 4 3 4 3 4 1 2 2 2 2 3 2 3 2 3 2 3 2 4 2 4 2 4 2 4 1 4 2 4 2 4 1 4 1 4 1 5 1 4 1 5 1 4 0 5 0 4 1 5 0 4 -1 5 0 4 0 5 -1 4 -1 5 -1 4 -2 5 -1 5 -2 5 -3 5 -3 5 -3 5 -4 5 -4 5 -5 4 -5 4 -5 4 -6 3 -6 3 -6 3 -8 2 -7 2 -9 2 -9 1 -10 1 -11 1 -13 0 -14-1 -16-2 -18-3 -19-4 -19-6 -21-7 -22-8 -23-10 -24-12 -27-15 -31-20 -28-20 -28-22 -23-20 -22-20 -19-20 -18-20 -17-20 -15-19 -14-20 -13-19 -11-18 -9-18 -8-18 -7-16 -5-16 -2-14 -1-13 0-11 2-9 3-9 5-7 6-5 7-5 8-4 9-2 11-2 11 0 12 0 13 1 13 2 14 3 15 4 16 4 16 4 16 5 16 6 16 5 16 6 16 6 13 5 11 4 18 8 19 7 23 10 26 11 34 15 28 13 24 11 22 11 21 10 20 10 18 10 18 10 18 10 16 9 15 9 13 9 10 7 9 6 7 6 7 5 5 4 3 2 2 2 4 3 4 4 4 4 5 4 4 4 5 4 4 5 5 4 4 5 4 4 4 5 4 4 4 5 4 4 4 4 4 5 4 4 4 5 4 4 4 4 5 5 4 4 5 4 5 4 5 3 5 4 6 4 6 3 7 3 7 3 8 3 8 2 9 2 10 1 11 1 13 0 13 0 16-2 18-3 19-5 20-6 21-9 24-10 25-14 23-14 21-14 20-15 17-14 17-15 16-15 14-15 13-15 12-15 11-15 9-15 8-14 7-14 5-13 4-12 2-11 1-9 -1-9 -2-7 -4-6 -4-6 -6-4 -6-3 -8-3 -8-1 -9-1 -10 0 -11 1 -12 1 -12 2 -13 3 -14 4 -14 4 -15 4 -15 6 -16 5 -16 6 -16 7 -17 7 -16 7 -17 8 -16 7 -16 8 -16 8 -15 8 -15 8 -13 8 -12 7 -10 6 -10 6 -9 6 -9 6 -8 6 -6 5 -7 4 -5 5 -4 3 -3 2 -3 3 -4 3 -4 4 -4 4 -4 4 -4 5 -5 4 -4 5 -3 4 -4 5 -3 5 -4 5 -3 4 -2 5 -3 5 -2 5 -2 5 -2 5 -2 5 -1 5 -2 5 0 5 -1 5 -1 5 0 5 0 5 1 5 0 4 1 5 1 5 1 5 2 5 2 5 3 5 3 5 4 6 4 5 6 5 6 5 7 5 6 3 8 4 8 3 8 2 10 2 10 1 11 1 13 1 14-1 16-1 19-3 18-4 20-6 21-7 22-8 23-11 26-13 28-16 27-18 26-20 24-19 21-18 19-19 18-19 16-18 16-18 13-19 12-17 11-18 10-17 8-16 6-16 5-15 3-13 1-12 0-11 -2-9 -3-8 -4-7 -6-5 -7-5 -7-3 -9-3 -10-1 -11-1 -11 1 -13 1 -13 2 -14 2 -14 4 -15 4 -15 4 -16 5 -17 6 -16 5 -17 6 -16 7 -16 6 -9 4 -10 4 -14 6 -17 7 -20 9 -24 10 -27 13 -25 12 -22 11 -20 10 -19 10 -18 10 -17 10 -17 10 -14 10 -13 8 -12 9 -10 7 -9 7 -8 7 -7 6 -6 5 -5 5 -5 5 -4 5 -4 4 -3 3 -2 3 -2 3 -2 2 -3 3 -2 3 -3 4 -3 3 -2 4 -3 4 -3 4 -3 4 -2 4 -3 4 -3 4 -2 4 -3 5 -2 4 -3 4 -3 4 -2 4 -3 5 -3 4 -3 4 -3 4 -3 4 -4 4 -3 4 -4 4 -4 4 -4 4 -5 3 -5 4 -6 3 -6 3 -6 3 -7 3 -8 3 -8 2 -9 2 -10 1 -12 1 -12 0 -14-1 -16-1 -18-3 -19-5 -20-5 -21-8 -23-9 -23-11 -27-14 -27-17 -26-18 -24-18 -21-18 -20-17 -18-18 -16-18 -16-18 -14-17 -12-18 -11-17 -10-16 -9-16 -6-16 -6-14 -3-14 -2-12 0-11 1-9 2-8 4-7 5-6 6-5 8-3 8-3 9-2 10-1 11 0 12 1 13 2 13 2 14 3 15 4 15 4 16 5 16 5 16 6 16 6 17 6 16 7 16 6 12 5 12 5 13 6 18 8 20 9 23 11 25 12 21 11 20 10 18 10 17 11 17 10 15 9 14 9 12 9 10 8 10 7 8 7 8 7 7 6 6 6 5 6 5 5 4 5 4 5 3 4 3 4 3 4 3 4 2 4 2 3 1 2 2 2 1 2 2 3 1 3 2 3 2 3 2 3 1 4 2 3 2 4 2 4 2 4 1 3 2 4 2 4 2 4 2 4 1 4 2 4 2 4 2 4 2 4 3 4 2 4 2 4 3 3 3 4 3 4 3 4 3 4 4 3 4 4 4 3 5 4 5 3 6 3 6 2 6 3 7 2 8 2 9 2 9 2 10 0 12 1 12 0 15-1 16-2 19-4 18-4 20-6 21-7 23-9 23-11 25-13 28-16 30-20 27-20 25-21 23-20 20-19 18-20 18-19 15-19 15-19 13-19 11-18 10-18 9-18 7-16 6-16 3-15 2-12 0-12 -1-10 -3-9 -4-7 -5-6 -7-5 -7-4 -9-3 -9-2 -11-1 -12 0 -12 1 -13 1 -14 3 -14 3 -16 4 -15 4 -16 5 -16 5 -17 6 -16 6 -16 6 -12 4 -14 6 -11 4 -18 7 -19 8 -22 10 -27 12 -26 11 -28 13 -23 11 -21 11 -20 10 -19 10 -18 10 -18 10 -17 10 -15 9 -13 9 -12 8 -10 7 -8 6 -7 6 -7 5 -5 4 -5 5 -2 2 -3 2 -3 3 -3 3 -4 4 -4 4 -4 4 -4 4 -4 4 -4 5 -3 4 -4 4 -4 5 -3 4 -4 5 -3 4 -4 5 -3 4 -4 4 -4 5 -3 4 -4 4 -4 4 -4 5 -4 4 -4 4 -5 4 -5 3 -5 4 -6 4 -6 3 -7 3 -7 3 -8 3 -8 2 -9 2 -10 1 -12 1 -12 0 -14 0 -16-2 -18-3 -19-5 -20-6 -22-8 -23-10 -25-13 -25-15 -24-15 -21-16 -19-16 -18-15 -16-16 -16-16 -14-16 -13-16 -12-16 -10-15 -9-15 -8-15 -6-14 -4-13 -3-12 -2-10 0-10 2-8 3-7 4-7 5-5 6-4 7-3 8-2 9-1 10-1 11 1 11 1 13 1 13 3 13 3 14 4 15 4 15 5 16 6 16 6 17 6 16 6 17 7 16 8 17 7 16 7 15 8 10 4 10 6 13 6 16 9 17 9 19 11 16 10 16 10 12 8 11 8 9 7 9 7 7 6 7 6 6 6 6 5 5 6 4 5 4 4 4 5 3 4 3 4 3 4 2 4 2 3 1 2 2 2 1 2 1 3 2 3 1 3 2 4 1 3 2 4 1 4 1 3 1 4 1 4 1 4 1 4 1 4 1 5 0 4 0 4 1 4 0 5 0 4 0 4 -1 5 0 4 -1 4 0 5 -1 4 -2 5 -1 4 -2 5 -1 5 -3 4 -2 5 -3 5 -4 5 -4 4 -4 4 -4 4 -5 4 -5 3 -5 3 -6 3 -6 2 -6 2 -8 2 -8 2 -8 1 -10 1 -10 1 -12 0 -13 0 -15-2 -17-2 -18-4 -19-5 -20-6 -21-7 -22-9 -23-11 -25-12 -27-16 -31-20 -30-21 -28-23 -24-21 -21-21 -20-21 -19-20 -17-20 -15-21 -14-20 -13-19 -11-19 -10-19 -9-18 -6-17 -5-16 -3-15 -1-13 0-11 2-10 4-9 4-7 6-6 7-5 8-4 10-2 10-2 11-1 12 1 13 1 14 2 15 3 15 3 15 4 16 5 16 5 16 5 17 6 15 5 11 4 11 4 13 5 17 7 20 8 23 9 26 12 33 14 27 12 28 12 24 11 22 11 21 10 20 10 19 10 18 9 18 10 17 10 15 9 11 7 10 6 9 6 7 5 4 3 5 4 4 2 5 4 5 4 6 5 5 4 5 5 6 4 5 5 5 5 5 4 4 5 5 4 5 5 4 5 5 4 4 5 5 4 4 4 5 5 4 4 5 4 5 4 5 4 6 4 5 3 6 4 7 3 7 3 7 3 8 2 9 2 9 2 10 1 12 1 12 0 14-1 15-3 18-3 19-6 21-7 22-9 23-12 22-12 19-13 19-13 17-13 16-14 15-14 13-13 13-14 12-14 10-14 10-14 8-13 6-13 5-13 4-11 2-10 1-10 -1-8 -2-7 -3-6 -4-5 -5-4 -6-3 -8-3 -8-1 -8-1 -10 0 -11 1 -11 1 -12 2 -12 3 -14 4 -13 4 -15 4 -14 5 -15 6 -16 6 -16 7 -16 6 -16 8 -16 8 -16 7 -16 9 -16 8 -16 9 -15 9 -15 9 -15 11 -15 10 -11 9 -9 8 -8 7 -7 7 -7 6 -6 7 -5 6 -4 6 -5 6 -3 6 -3 6 -3 6 -3 6 -2 5 -1 6 -2 6 0 5 -1 6 0 5 0 6 1 5 1 5 2 6 2 5 2 5 3 5 4 5 5 5 6 6 7 5 9 5 10 5 10 3 11 2 12 2 13 1 15 0 17-2 18-3 19-4 20-5 21-8 22-9 25-11 27-15 24-16 24-17 21-16 19-16 17-16 17-17 15-16 14-17 12-16 12-16 10-16 8-15 7-14 6-15 4-13 2-11 1-11 0-9 -2-8 -4-7 -4-6 -6-5 -6-4 -8-2 -9-2 -9-1 -11 0 -11 0 -12 2 -13 2 -13 2 -14 4 -15 4 -15 5 -15 5 -16 5 -17 6 -16 7 -17 6 -16 7 -17 7 -16 8 -15 6 -13 6 -11 6 -18 9 -17 9 -21 11 -18 10 -18 10 -16 10 -15 10 -12 8 -11 8 -10 8 -8 7 -8 6 -7 7 -6 6 -6 5 -5 6 -5 6 -4 5 -4 5 -3 5 -4 4 -3 5 -2 4 -3 5 -2 4 -2 4 -1 4 -2 3 -2 4 -1 4 -1 3 -1 3 -1 3 -1 3 -1 3 0 3 -1 1 0 2 -1 1 0 2 -1 3 0 2 0 3 -1 2 0 3 -1 3 0 3 -1 3 0 3 0 3 0 4 0 3 -1 3 0 4 0 3 0 4 0 3 0 4 1 4 0 3 0 4 1 4 0 3 1 4 0 4 1 4 1 4 1 4 1 4 1 4 2 5 1 4 2 3 2 4 2 3 2 3 2 3 3 3 2 3 3 3 3 2 4 3 3 2 4 2 5 2 4 2 5 2 5 2 6 1 7 2 7 1 7 1 9 0 9 1 10 0 11-1 12-1 14-1 16-3 17-3 18-5 19-6 20-6 21-8 22-10 24-11 24-13 27-15 29-20 34-24 31-25 28-24 24-23 22-23 20-22 19-23 18-22 16-22 14-22 13-22 12-21 10-20 9-20 6-18 5-18 3-16 1-13 0-13 -3-10 -3-10 -5-7 -7-7 -7-5 -9-4 -10-3 -11-1 -11-1 -13 0 -14 2 -14 2 -15 3 -15 3 -16 4 -16 5 -16 5 -16 5 -15 5 -13 5 -11 4 -18 6 -18 7 -22 9 -25 10 -28 11 -36 15 -32 14 -36 15 -28 12 -26 11 -24 11 -23 10 -21 10 -20 9 -19 9 -19 9 -19 9 -18 9 -11 6 -7 4 -8 4 -7 4 -9 5 -8 4 -8 5 -9 5 -8 5 -7 5 -8 5 -7 5 -7 5 -7 5 -7 4 -6 5 -6 4 -6 5 -6 4 -6 4 -6 4 -6 4 -6 4 -6 3 -6 4 -7 3 -7 3 -7 3 -7 2 -8 2 -8 2 -9 1 -9 1 -11 0 -11 0 -12-1 -12-2 -14-4 -14-4 -15-5 -16-7 -15-7 -15-9 -15-8 -14-10 -13-10 -12-10 -12-11 -11-10 -9-11 -9-11 -9-10 -7-11 -5-10 -5-10 -3-9 -2-8 -1-8 1-6 2-6 2-5 4-4 5-3 5-2 7-2 7-1 8 0 8 0 9 1 10 2 11 2 11 3 11 3 12 4 13 4 13 5 13 6 13 6 14 6 13 7 14 7 13 8 14 8 13 8 12 9 13 9 12 10 14 14 8 8 7 9 5 8 4 8 3 7 2 7 2 6 0 6 0 6 -1 6 -2 5 -3 5 -3 5 -5 5 -5 4 -7 4 -8 4 -10 3 -13 2 -15 0 -16-1 -17-2 -18-4 -19-6 -19-8 -19-9 -18-9 -17-10 -15-11 -15-11 -14-11 -13-12 -12-11 -11-12 -10-12 -10-12 -8-11 -7-12 -6-11 -4-10 -3-10 -2-9 0-8 1-6 2-6 3-5 5-4 5-3 6-3 7-2 7-1 9 0 9 0 10 2 10 1 11 3 12 3 12 3 13 4 13 5 14 5 14 6 14 6 15 6 14 7 15 8 15 8 14 8 14 8 14 9 14 10 13 10 14 11 10 9 9 10 7 8 6 8 5 7 4 7 3 7 2 7 2 6 1 6 0 6 0 6 -2 6 -1 5 -3 6 -3 5 -4 5 -5 4 -6 5 -7 4 -9 4 -12 3 -15 3 -16 0 -16-1 -17-2 -18-4 -20-6 -21-7 -22-10 -21-11 -19-12 -18-11 -17-13 -16-12 -14-13 -14-13 -13-13 -11-13 -11-13 -9-14 -9-12 -7-13 -5-12 -5-11 -2-10 -2-9 1-8 1-8 2-6 4-5 5-4 5-4 7-2 7-2 9-1 9 0 10 0 10 2 12 1 11 3 13 3 13 4 14 4 14 5 14 5 15 6 15 7 16 6 16 7 15 8 16 8 16 8 15 9 15 9 15 9 14 10 15 10 14 11 11 10 9 8 8 7 6 8 6 7 5 7 4 6 3 7 4 6 2 6 2 7 1 6 1 6 1 5 0 6 -1 6 -1 5 -1 5 -3 6 -2 5 -4 5 -4 5 -5 5 -6 5 -8 5 -12 5 -11 4 -14 2 -13 2 -16 0 -17-2 -18-2 -19-4 -19-6 -21-8 -23-9 -25-13 -23-13 -23-15 -19-14 -19-14 -17-15 -16-15 -14-15 -14-15 -12-15 -12-15 -10-15 -8-14 -7-14 -6-13 -5-13 -2-11 -1-10 0-9 2-8 2-6 4-6 5-5 7-3 7-3 8-2 9-1 10-1 10 1 12 1 12 2 12 3 14 3 14 4 14 4 15 5 16 6 15 6 17 6 16 7 17 7 16 7 17 8 16 8 16 8 15 8 15 8 14 8 13 8 14 8 6 4 8 5 7 5 7 4 6 5 6 4 4 3 3 3 3 2 5 4 4 3 4 4 5 4 5 5 4 4 5 5 4 5 4 4 4 5 4 5 3 5 4 5 3 5 2 5 3 5 2 4 2 5 2 5 2 5 1 5 1 5 1 5 1 6 0 5 0 5 0 5 0 5 -1 4 -1 5 -1 5 -2 5 -2 5 -2 5 -3 5 -4 6 -4 5 -5 5 -6 5 -7 5 -7 4 -7 4 -8 3 -9 2 -9 2 -10 2 -11 1 -13 1 -14-1 -16-1 -18-3 -18-4 -20-5 -21-7 -22-8 -23-10 -25-13 -28-16 -27-18 -26-19 -24-19 -21-19 -19-18 -18-18 -16-19 -15-18 -14-18 -12-18 -11-17 -10-17 -8-16 -6-16 -5-15 -3-13 -2-12 1-11 1-9 3-8 5-7 5-5 7-5 7-3 9-3 10-1 10-1 12 0 12 1 13 2 14 3 14 3 15 4 16 5 16 4 16 6 16 6 17 6 16 6 16 6 11 5 12 5 14 5 17 8 20 9 24 10 27 13 24 12 21 10 20 11 19 10 17 10 18 10 15 10 14 9 13 9 11 8 10 7 9 7 7 7 7 6 6 5 5 5 5 5 4 5 3 4 4 4 3 3 0 1 2 1 2 3 2 3 2 3 3 3 2 4 3 4 2 3 3 4 3 4 2 4 3 4 2 4 2 4 3 5 2 4 3 4 2 4 3 4 3 4 2 5 3 4 3 4 3 4 3 4 4 4 3 4 4 4 4 4 4 3 5 4 5 3 6 4 6 3 6 3 7 2 8 3 9 2 9 1 10 2 12 0 12 0 15 0 16-2 19-4 19-4 20-6 21-7 22-10 25-11 26-15 28-17 26-18 24-19 22-18 20-18 18-18 17-18 15-18 14-18 13-18 11-17 10-17 8-16 7-16 6-14 3-14 2-12 0-11 -1-10 -2-8 -4-7 -5-6 -6-5 -8-4 -8-2 -9-2 -11-1 -11 0 -12 1 -12 1 -14 3 -14 3 -14 4 -16 4 -15 5 -16 5 -17 6 -16 6 -17 6 -16 6 -16 7 -6 2 -7 3 -15 6 -15 7 -20 9 -22 10 -26 12 -23 12 -21 10 -20 11 -18 10 -17 10 -17 10 -15 10 -14 8 -12 9 -10 8 -10 7 -8 7 -8 7 -6 6 -6 6 -5 5 -5 5 -4 5 -3 4 -4 4 -3 4 -2 3 -2 3 -1 1 -1 2 -2 2 -2 3 -2 3 -2 3 -2 3 -2 4 -2 3 -3 4 -2 4 -2 4 -2 4 -2 4 -2 4 -2 4 -2 4 -3 4 -2 4 -2 4 -2 4 -3 4 -2 4 -3 4 -2 4 -3 4 -3 4 -3 4 -3 4 -4 4 -4 4 -4 3 -5 4 -5 3 -5 3 -6 3 -6 3 -7 3 -7 2 -8 2 -9 2 -10 2 -11 0 -12 1 -13-1 -15-1 -18-3 -19-4 -19-5 -21-6 -21-8 -23-10 -25-13 -27-15 -29-18 -27-19 -25-20 -22-19 -20-19 -18-19 -17-19 -16-18 -14-19 -13-18 -11-18 -10-17 -9-17 -7-16 -5-16 -4-14 -2-12 0-11 1-10 3-9 4-7 5-6 6-5 7-4 9-3 9-2 11-1 11 0 12 1 13 2 14 2 14 3 15 4 15 4 16 5 16 5 17 6 16 6 17 6 15 6 11 5 11 4 14 6 18 7 19 9 24 10 28 13 26 12 22 11 21 11 20 10 18 10 18 10 17 10 15 10 14 9 12 8 11 8 10 7 8 7 7 6 6 5 6 5 4 5 5 4 4 4 2 3 2 2 2 2 3 3 3 3 3 4 3 4 3 4 3 3 3 5 3 4 3 4 3 4 2 4 3 4 3 5 3 4 3 4 3 4 3 5 3 4 3 4 3 4 3 5 4 4 3 4 4 4 4 4 4 4 5 3 5 4 5 4 6 3 6 3 7 3 7 3 8 2 9 2 10 2 10 1 12 0 13 0 15-1 17-2 19-4 20-5 20-7 22-8 23-10 26-14 27-16 26-17 24-17 21-17 19-18 18-17 16-17 16-17 14-18 12-17 11-16 10-16 9-16 7-15 5-15 4-13 2-12 0-10 -1-10 -2-8 -4-7 -4-6 -6-4 -7-4 -9-3 -9-2 -9-1 -11 0 -12 1 -12 2 -13 2 -14 3 -15 3 -15 5 -15 4 -16 6 -16 5 -17 6 -16 7 -17 6 -16 7 -16 7 -9 4 -10 4 -15 7 -17 8 -20 9 -22 11 -22 11 -19 11 -19 10 -17 10 -17 10 -14 10 -13 8 -12 9 -10 7 -9 8 -8 7 -8 6 -6 7 -7 6 -5 6 -5 6 -4 5 -4 5 -4 5 -3 5 -3 4 -3 4 -2 5 -2 4 -2 3 -2 4 -2 3 -1 4 -2 3 -1 2 -1 2 -1 2 0 2 -1 2 -1 3 -2 3 -1 2 -1 4 -1 3 -1 3 -1 3 -1 3 -1 4 -2 3 -1 4 -1 3 -1 4 -1 4 -1 3 -2 4 -1 4 -1 3 -2 4 -1 4 -2 3 -2 4 -1 4 -2 3 -2 4 -2 4 -3 3 -2 4 -3 3 -3 4 -3 3 -3 3 -4 3 -4 3 -5 3 -4 3 -6 3 -5 2 -6 2 -7 2 -7 2 -8 2 -9 1 -9 1 -11 0 -11 0 -13-1 -15-1 -17-3 -18-3 -19-5 -20-6 -21-8 -22-9 -23-10 -25-13 -27-15 -30-20 -30-22 -29-23 -25-21 -22-21 -20-21 -19-21 -18-21 -16-20 -14-21 -13-20 -12-19 -10-19 -9-19 -7-17 -5-17 -4-15 -1-14 0-12 2-10 3-9 4-8 6-6 7-5 8-4 9-3 10-2 11-1 12 0 13 1 14 2 14 3 15 3 15 4 16 4 16 5 17 5 16 6 15 5 10 4 11 4 14 5 17 7 19 8 23 9 26 11 32 13 28 13 30 13 25 11 23 11 22 10 20 10 20 10 18 9 19 10 18 10 16 9 11 7 10 6 10 7 8 5 4 3 5 3 4 3 6 4 6 4 5 5 6 4 6 5 6 5 5 4 6 5 5 5 5 4 5 5 5 4 5 5 4 5 5 4 5 4 5 5 4 4 5 4 5 4 6 4 5 4 6 4 6 3 6 4 7 3 7 3 8 2 8 2 9 2 10 1 11 1 12 0 13-1 14-1 16-3 18-5 20-7 22-8 21-10 21-11 19-12 18-12 16-13 16-13 15-13 13-14 13-13 12-13 10-14 10-13 8-13 6-13 6-12 4-11 2-10 1-9 0-8 -2-7 -3-6 -4-5 -5-5 -6-3 -7-2 -7-2 -9-1 -9 0 -10 1 -11 1 -12 2 -12 3 -13 3 -13 4 -14 5 -15 5 -14 5 -16 6 -15 6 -16 7 -16 8 -16 7 -15 8 -16 9 -16 8 -15 9 -15 9 -15 10 -15 10 -14 11 -11 9 -9 8 -7 8 -7 7 -6 7 -5 7 -5 6 -4 6 -3 7 -3 6 -2 6 -2 6 -2 6 -1 6 0 6 0 5 0 6 1 5 1 6 2 5 2 5 3 5 4 5 4 6 6 5 7 5 9 5 11 5 13 3 12 2 14 2 15 0 17-1 18-3 18-4 20-6 21-7 22-9 25-12 25-14 23-15 21-15 19-15 18-15 17-16 15-15 14-16 14-15 11-16 11-15 9-15 8-14 7-14 4-13 4-12 1-11 1-9 -2-9 -2-7 -4-6 -4-5 -6-5 -7-3 -8-2 -9-2 -9 0 -11 0 -11 1 -12 2 -13 2 -13 3 -14 4 -14 4 -15 5 -16 5 -16 6 -16 6 -16 6 -17 7 -17 8 -16 7 -17 8 -16 7 -15 8 -14 7 -11 6 -11 6 -16 9 -16 10 -14 8 -13 9 -11 8 -10 7 -8 6 -8 6 -7 6 -6 6 -5 5 -5 4 -5 5 -4 4 -3 4 -2 2 -2 3 -2 2 -2 3 -3 4 -2 3 -3 4 -2 4 -3 4 -2 4 -2 4 -2 4 -2 5 -2 4 -2 5 -1 4 -1 5 -1 4 -1 5 -1 4 -1 5 0 5 0 4 0 5 0 5 0 4 1 5 1 5 1 4 1 5 1 5 2 5 2 5 3 5 3 5 4 5 5 5 5 5 5 4 5 4 6 4 7 3 7 3 7 2 8 2 9 2 10 1 10 1 12 1 13-1 15-1 17-2 19-4 19-4 20-6 21-8 23-9 24-11 25-14 29-17 29-20 27-20 25-21 22-20 20-19 18-20 17-19 15-19 15-19 12-19 12-18 10-18 8-18 7-16 5-16 3-14 2-13 0-11 -2-10 -2-8 -5-8 -5-6 -7-5 -8-3 -9-3 -9-2 -11-1 -12 0 -12 1 -14 2 -14 3 -14 3 -15 4 -16 4 -16 5 -16 5 -17 6 -16 6 -16 6 -11 4 -12 5 -13 5 -18 7 -19 9 -23 9 -28 12 -26 12 -27 13 -23 11 -21 10 -20 10 -19 10 -18 10 -18 10 -17 10 -14 9 -14 9 -12 8 -9 7 -8 6 -8 6 -6 5 -5 4 -4 4 -2 2 -3 2 -3 3 -4 3 -3 4 -4 4 -4 4 -4 4 -4 4 -4 5 -4 4 -4 4 -3 5 -4 4 -3 5 -4 4 -4 5 -3 4 -4 4 -3 5 -4 4 -4 4 -4 4 -4 5 -4 4 -5 4 -4 4 -5 3 -6 4 -5 4 -6 3 -7 3 -7 3 -8 3 -8 2 -10 2 -10 1 -11 1 -13 0 -14-1 -16-2 -18-3 -19-5 -21-6 -21-8 -23-11 -26-13 -25-15 -23-15 -21-16 -19-15 -17-16 -17-15 -15-16 -14-16 -13-16 -11-16 -10-15 -9-15 -7-14 -6-14 -5-13 -2-12 -1-10 0-9 2-9 2-7 5-5 5-5 6-4 7-3 9-2 9-1 10-1 11 1 11 1 13 2 13 2 13 4 15 4 15 4 15 5 16 6 16 5 16 7 17 7 16 7 17 7 16 7 16 8 16 7 10 5 11 6 12 6 16 9 17 9 18 11 16 10 15 9 11 8 10 7 10 7 8 7 7 6 6 6 6 6 6 5 4 5 5 5 4 4 3 5 3 4 3 3 2 4 2 2 1 2 1 2 2 2 1 3 2 3 2 4 1 3 2 4 2 4 1 3 1 4 2 4 1 4 1 4 1 5 1 4 1 4 0 4 1 5 0 4 0 4 0 5 0 4 0 5 -1 4 0 4 -1 5 -1 4 -1 5 -2 5 -1 4 -2 5 -3 5 -3 5 -3 5 -4 5 -4 4 -4 4 -5 4 -5 4 -5 3 -6 3 -6 2 -6 3 -7 2 -8 2 -9 2 -9 1 -11 0 -11 1 -13-1 -14-1 -17-2 -18-3 -19-5 -20-6 -20-7 -22-8 -23-11 -25-12 -27-16 -31-19 -29-21 -28-22 -24-21 -21-21 -20-20 -18-20 -17-21 -16-19 -14-20 -13-20 -11-19 -10-18 -8-18 -7-17 -4-16 -3-14 -2-13 1-11 2-10 3-9 5-7 6-6 7-5 8-4 9-2 10-2 11 0 13 0 12 1 14 2 14 3 15 3 16 4 16 5 16 5 16 5 16 6 16 6 12 4 12 5 13 4 17 7 19 8 23 9 26 12 33 14 27 12 27 12 23 11 22 11 20 10 20 9 18 10 18 10 18 10 16 9 15 9 11 8 10 6 8 6 7 5 4 3 4 3 3 2 5 4 4 4 5 4 5 4 5 5 5 4 5 5 5 4 5 5 4 4 5 5 4 4 5 5 4 5 4 4 4 4 5 5 4 4 5 4 4 5 5 4 5 4 5 4 5 4 6 3 6 4 6 3 7 3 7 3 8 2 9 2 9 2 11 1 11 1 13 0 14-1 16-3 18-4 19-5 21-7 22-10 25-12 23-13 20-13 19-14 18-13 16-14 15-15 14-14 14-14 11-15 11-14 10-14 8-14 7-13 5-13 4-12 3-11 1-9 -1-9 -2-7 -3-6 -4-6 -5-4 -6-3 -7-3 -8-2 -9-1 -10 0 -10 1 -12 1 -12 2 -12 3 -14 3 -13 4 -15 5 -15 5 -15 5 -15 6 -16 7 -17 7 -16 7 -16 8 -17 8 -16 8 -16 8 -15 8 -16 9 -15 9 -15 10 -15 10 -11 8 -9 7 -9 7 -7 6 -7 7 -7 6 -5 6 -6 5 -5 6 -4 6 -4 6 -4 5 -3 6 -3 5 -3 6 -2 5 -2 6 -2 5 -1 6 -1 5 0 6 -1 5 0 5 1 6 1 5 1 5 1 5 2 5 2 5 3 5 4 6 4 5 5 5 7 6 8 5 9 4 9 4 9 3 10 2 11 1 13 1 14 0 16-1 17-2 19-3 20-5 20-7 22-8 23-10 25-13 28-16 25-17 24-18 21-17 19-17 18-17 17-17 15-18 14-17 13-17 11-16 10-16 8-16 7-15 6-15 4-13 2-12 0-10 -1-10 -2-8 -4-7 -4-6 -6-5 -7-3 -8-3 -9-2 -10-1 -11 0 -11 1 -13 1 -13 3 -14 3 -14 3 -15 4 -15 5 -16 5 -16 6 -17 6 -16 6 -17 7 -16 7 -16 6 -11 5 -12 5 -13 6 -18 9 -19 9 -23 11 -21 11 -19 10 -19 10 -17 11 -16 10 -15 9 -12 9 -11 8 -10 8 -9 7 -8 7 -7 6 -7 7 -6 6 -5 6 -5 6 -4 5 -4 5 -4 5 -3 5 -3 4 -3 4 -2 5 -2 4 -2 3 -2 4 -2 4 -1 3 -2 3 -1 3 -1 3 -1 1 -1 2 0 2 -1 2 -1 3 -1 3 -1 2 -1 3 -1 4 -1 3 -1 3 -1 3 -1 4 -1 3 -1 3 -2 4 -1 3 -1 4 -1 3 -1 4 -1 4 -1 3 -2 4 -1 4 -2 3 -1 4 -2 4 -1 3 -2 4 -2 3 -3 4 -2 3 -2 4 -3 3 -3 4 -3 3 -4 3 -4 3 -4 3 -4 3 -5 2 -5 3 -6 2 -6 2 -6 2 -8 2 -8 1 -8 1 -10 1 -11 0 -11 0 -13-1 -15-1 -17-3 -19-4 -19-5 -19-6 -21-7 -22-9 -24-11 -24-13 -27-15 -31-20 -30-22 -29-23 -25-22 -23-22 -20-21 -19-21 -18-21 -16-21 -15-20 -13-20 -12-20 -11-19 -8-19 -8-18 -5-17 -4-15 -1-14 0-12 1-11 3-9 4-8 6-7 7-5 8-4 9-3 10-2 11-1 12 0 13 1 14 2 14 2 15 3 15 4 16 5 16 5 17 5 16 5 15 6 9 3 10 4 14 5 16 6 20 8 22 9 26 11 31 13 29 12 27 12 27 12 24 11 23 11 21 10 20 9 19 10 18 9 18 10 18 10 15 9 13 7 9 6 7 4 3 3 5 3 5 3 6 4 6 5 6 4 6 5 6 4 6 5 6 5 6 5 5 4 5 5 6 5 5 4 5 5 5 4 5 5 5 4 5 4 5 5 5 4 5 4 5 4 6 3 6 4 6 3 6 4 7 3 8 2 8 3 8 2 9 1 11 2 11 0 12 0 13-1 15-2 16-4 18-5 20-7 20-9 20-10 20-10 18-12 17-12 16-12 15-13 14-13 13-13 12-13 11-13 10-13 8-13 8-12 6-12 5-12 3-10 2-10 0-8 -1-8 -2-6 -3-6 -5-4 -5-4 -6-3 -7-2 -8-1 -9-1 -10 1 -10 1 -11 1 -12 3 -12 3 -13 3 -13 4 -14 5 -15 5 -14 6 -15 6 -16 6 -15 8 -16 7 -16 8 -15 8 -16 8 -15 9 -15 9 -14 10 -15 10 -14 11 -11 9 -10 8 -8 8 -6 8 -6 7 -6 7 -4 7 -4 6 -3 7 -3 6 -2 6 -2 6 -1 6 0 6 0 6 0 5 1 6 1 5 2 6 3 5 3 5 4 5 5 5 6 5 8 5 10 5 12 4 14 3 13 1 16 1 17-1 18-3 18-4 20-5 21-8 22-9 25-12 23-13 22-15 20-14 19-14 17-15 16-15 14-15 14-15 13-15 11-15 10-14 9-15 7-13 6-14 4-12 3-11 1-11 0-8 -1-8 -3-7 -4-6 -5-5 -6-3 -7-3 -8-2 -9-1 -10-1 -10 1 -11 1 -12 2 -13 2 -13 3 -14 4 -15 5 -15 5 -15 5 -16 6 -16 6 -16 7 -17 7 -16 8 -17 7 -16 8 -16 8 -16 8 -15 8 -14 8 -13 8 -15 9 -7 5 -7 4 -6 5 -6 4 -5 4 -6 3 -5 4 -5 5 -5 4 -6 4 -5 5 -5 5 -5 4 -5 5 -4 5 -5 5 -4 5 -3 5 -4 5 -3 5 -4 5 -2 5 -3 5 -2 5 -2 5 -2 5 -2 5 -1 5 -1 5 -1 5 -1 5 0 6 0 5 0 5 1 5 1 5 1 4 1 5 2 5 2 5 3 6 3 5 4 5 4 5 6 6 7 5 7 4 7 4 8 3 8 3 9 2 10 2 11 1 12 1 14 0 15-1 18-2 18-4 20-5 20-6 22-8 22-10 25-12 27-15 28-18 26-18 24-19 21-18 20-19 18-18 16-18 16-18 14-18 12-18 11-17 10-17 8-16 7-16 5-15 3-13 2-13 0-10 -1-10 -3-8 -4-7 -5-6 -7-4 -7-4 -9-3 -9-1 -10-1 -12 0 -12 1 -13 2 -13 2 -14 3 -15 4 -16 4 -15 5 -16 6 -17 5 -16 6 -17 7 -16 6 -15 6 -13 6 -12 5 -18 8 -19 8 -24 11 -27 12 -23 12 -21 10 -20 11 -18 10 -18 10 -17 10 -15 10 -14 9 -12 8 -11 8 -10 8 -8 7 -7 6 -7 6 -6 6 -5 5 -4 5 -5 4 -3 4 -4 4 -2 4 -3 3 -1 1 -1 2 -2 3 -2 2 -2 4 -3 3 -2 3 -2 4 -3 4 -2 4 -3 4 -2 4 -2 4 -2 4 -3 4 -2 4 -2 4 -3 4 -2 4 -3 4 -2 4 -3 4 -2 5 -3 4 -3 4 -3 4 -3 4 -4 4 -3 4 -4 3 -5 4 -4 4 -5 3 -6 3 -6 3 -6 3 -7 3 -7 2 -9 2 -9 2 -10 2 -11 0 -12 1 -14-1 -16-2 -18-3 -19-4 -20-5 -20-7 -22-9 -24-10 -25-14 -29-17 -27-17 -26-20 -23-18 -20-19 -20-18 -17-19 -16-18 -15-18 -14-18 -12-18 -10-17 -10-17 -7-16 -6-16 -5-15 -3-13 -1-11 1-10 2-9 3-8 4-7 6-5 7-5 8-3 9-2 10-2 10 0 12 0 12 2 14 2 14 2 14 4 15 4 16 4 16 5 16 6 16 6 17 6 16 6 16 6 9 4 11 4 14 7 17 7 20 9 23 10 28 13 24 12 21 10 20 11 19 10 17 10 17 10 16 10 14 9 13 8 11 9 10 7 9 7 7 7 7 6 6 5 5 5 5 5 4 5 3 4 4 4 3 3 1 1 1 1 2 3 2 3 2 3 3 3 2 4 3 4 3 4 2 3 3 4 2 4 3 4 2 4 3 5 2 4 3 4 2 4 3 4 2 4 3 5 3 4 2 4 3 4 3 4 3 4 4 4 3 4 4 4 4 4 5 3 5 4 5 3 5 4 6 3 7 3 7 2 8 3 8 2 10 1 10 2 12 0 12 0 15-1 16-2 19-3 19-4 20-7 22-7 22-10 24-11 27-15 28-17 26-18 24-19 21-18 20-18 18-18 17-18 15-18 14-18 12-18 12-17 9-17 9-16 7-16 5-14 3-14 2-12 0-11 -1-9 -3-8 -4-7 -5-6 -6-5 -7-4 -9-2 -9-2 -10-1 -12 0 -11 1 -13 2 -14 2 -14 3 -15 4 -15 4 -15 5 -17 5 -16 6 -16 6 -17 6 -16 7 -16 6 -7 3 -9 4 -15 6 -16 7 -21 10 -23 10 -27 13 -22 11 -20 11 -19 10 -18 10 -18 10 -16 10 -15 9 -13 9 -11 8 -10 8 -10 8 -8 7 -7 6 -6 6 -5 5 -5 6 -5 4 -4 5 -3 4 -4 4 -3 4 -2 4 -2 2 -1 2 -2 2 -2 3 -2 3 -2 3 -2 3 -2 4 -2 3 -2 4 -2 4 -3 4 -2 4 -2 4 -2 4 -2 4 -2 4 -2 4 -3 4 -2 4 -2 4 -2 4 -3 4 -2 4 -3 4 -3 4 -3 4 -3 4 -3 4 -4 4 -4 3 -4 4 -4 4 -5 3 -5 3 -6 3 -6 3 -7 3 -7 2 -8 3 -9 1 -10 2 -11 1 -11 0 -14 0 -15-2 -17-2 -19-4 -19-5 -21-6 -21-8 -23-10 -25-12 -26-15 -30-19 -26-19 -26-20 -22-19 -20-19 -19-18 -17-19 -16-19 -14-18 -13-18 -12-18 -10-18 -8-17 -8-16 -5-15 -4-15 -2-12 0-11 1-10 2-9 4-7 5-7 6-5 8-4 8-3 9-2 11-1 11 0 12 1 13 2 13 2 15 3 14 4 16 4 16 5 16 5 16 5 17 6 16 6 16 7 11 4 12 5 13 5 18 8 20 8 23 11 28 12 26 13 23 11 20 10 20 10 18 10 18 10 17 11 16 9 14 9 12 9 11 8 10 7 8 6 7 6 6 6 6 5 5 5 4 4 4 4 2 3 2 2 2 2 3 3 3 3 3 4 3 4 3 3 3 4 3 4 3 4 3 5 3 4 3 4 3 4 3 5 2 4 3 4 3 4 3 5 3 4 3 4 3 4 4 4 3 5 4 4 4 4 4 4 4 4 5 3 5 4 5 3 6 4 6 3 7 3 7 3 8 2 9 2 10 1 11 2 12 0 13 0 15-1 17-3 19-4 20-5 21-7 21-8 24-11 26-13 27-17 25-17 23-17 21-17 19-17 18-18 17-17 15-17 13-17 13-17 11-17 10-16 8-15 7-16 5-14 4-13 1-12 1-10 -1-9 -3-8 -4-7 -4-6 -7-5 -7-3 -8-3 -9-2 -10 0 -11 0 -12 1 -12 1 -13 3 -14 3 -14 3 -15 4 -16 5 -16 5 -16 6 -17 6 -16 7 -17 6 -16 7 -16 7 -8 3 -9 4 -15 7 -16 7 -20 10 -22 10 -22 12 -19 10 -19 10 -17 11 -17 10 -15 9 -12 9 -12 8 -10 8 -9 7 -8 7 -8 7 -7 7 -6 6 -5 6 -5 5 -5 6 -3 5 -4 5 -3 5 -3 4 -3 4 -2 5 -3 4 -2 3 -2 4 -1 4 -2 3 -1 3 -2 3 0 2 -1 1 0 1 -1 3 -1 2 -1 2 -1 3 -1 3 -1 3 -2 3 -1 3 -1 4 -1 3 -1 3 -1 4 -1 3 -1 4 -1 3 -2 4 -1 3 -1 4 -1 4 -2 3 -1 4 -1 4 -2 3 -2 4 -1 4 -2 4 -2 3 -2 4 -2 3 -3 4 -2 3 -3 4 -3 3 -4 3 -3 3 -4 3 -5 3 -4 3 -5 3 -6 2 -6 2 -6 2 -7 2 -8 2 -8 1 -9 1 -10 1 -12 0 -12-1 -14-1 -16-2 -18-3 -19-5 -19-5 -21-7 -21-9 -23-9 -24-12 -26-15 -29-17 -31-22 -29-22 -27-23 -23-21 -21-21 -20-21 -18-21 -16-21 -16-20 -13-21 -13-19 -11-20 -9-19 -8-18 -6-17 -4-16 -2-14 -1-13 1-11 2-9 4-9 5-7 7-5 7-5 9-3 10-3 11-1 11 0 13 0 13 2 14 2 15 3 15 4 16 4 16 5 16 5 16 5 16 6 13 4 10 4 12 4 16 7 19 7 21 9 25 10 30 13 31 13 28 12 27 12 24 12 23 10 21 10 19 10 19 9 19 10 18 10 17 9 16 9 12 8 10 6 8 5 4 3 5 3 5 4 5 4 6 4 6 4 6 5 6 5 6 4 5 5 6 5 5 4 5 5 5 5 5 4 5 5 5 4 5 5 5 4 5 4 5 5 5 4 5 4 5 4 5 4 6 3 6 4 7 3 6 3 8 3 8 2 8 3 9 1 10 1 11 1 12 0 13-1 15-2 16-3 18-5 20-7 21-8 21-10 20-11 19-12 17-12 17-13 15-13 14-13 14-13 12-13 11-13 11-14 9-13 8-13 6-12 5-12 4-11 2-10 1-8 -1-8 -2-7 -3-6 -4-5 -5-4 -6-3 -7-2 -8-1 -9-1 -9 0 -11 1 -10 1 -12 2 -12 3 -13 4 -14 4 -14 4 -14 5 -15 6 -15 6 -15 6 -16 7 -16 8 -16 7 -15 8 -16 9 -15 8 -15 9 -15 10 -15 10 -15 10 -11 9 -11 9 -8 8 -8 8 -6 7 -6 7 -5 7 -4 6 -4 7 -3 6 -3 6 -2 6 -2 6 -1 6 -1 6 0 6 0 5 1 6 1 5 2 6 2 5 3 5 4 5 4 5 6 5 6 5 9 6 12 4 11 4 13 2 14 1 15 0 17-1 18-2 19-4 19-6 21-8 23-9 25-12 24-14 22-14 21-15 19-15 17-15 16-15 16-15 13-16 13-15 12-15 10-15 9-15 8-14 6-13 4-13 3-12 2-10 0-10 -2-8 -2-7 -4-6 -5-5 -6-4 -7-3 -8-2 -9-1 -9-1 -11 1 -11 1 -12 2 -13 2 -13 3 -14 4 -15 4 -15 5 -15 6 -16 5 -16 7 -17 6 -16 7 -17 8 -17 7 -16 8 -16 8 -15 8 -15 7 -13 7 -10 6 -12 7 -19 12 -11 7 -11 7 -9 7 -9 6 -7 6 -7 5 -6 5 -5 5 -5 4 -3 4 -2 2 -2 2 -3 3 -3 3 -4 4 -3 4 -3 4 -4 4 -3 4 -3 5 -3 4 -2 5 -3 4 -2 5 -2 5 -2 4 -2 5 -2 5 -1 5 -1 4 -1 5 -1 5 0 5 0 5 -1 5 1 4 0 5 1 5 0 5 2 5 1 4 2 5 2 5 2 5 3 5 4 6 4 5 6 5 6 5 6 4 6 4 7 3 7 3 8 3 9 2 9 2 11 1 11 1 13 0 14-1 17-2 18-3 19-4 20-6 21-7 22-9 23-11 26-13 28-16 28-19 27-20 24-20 22-19 19-19 19-19 16-19 16-19 13-18 13-18 11-18 10-18 8-16 7-17 5-15 3-14 1-12 0-11 -1-9 -3-9 -4-7 -6-6 -6-4 -8-4 -9-3 -10-1 -10-1 -12 0 -12 1 -14 2 -13 3 -15 3 -15 4 -15 4 -16 5 -17 6 -16 5 -16 6 -17 6 -15 6 -10 4 -11 5 -17 7 -18 7 -22 10 -25 11 -26 12 -25 12 -23 11 -20 10 -20 11 -18 9 -18 10 -17 11 -16 9 -13 9 -13 9 -11 8 -9 7 -8 6 -7 6 -6 5 -5 5 -5 4 -4 4 -3 3 -2 2 -2 2 -3 3 -3 4 -3 3 -3 4 -4 4 -3 4 -3 4 -3 4 -3 4 -4 5 -3 4 -3 4 -3 4 -3 5 -3 4 -3 4 -3 5 -3 4 -4 4 -3 4 -3 5 -4 4 -4 4 -4 4 -4 4 -4 4 -5 3 -5 4 -6 4 -6 3 -6 3 -8 3 -7 2 -9 3 -9 1 -10 2 -11 1 -13 0 -14-1 -16-1 -18-4 -19-4 -20-6 -22-8 -22-9 -25-12 -28-16 -25-16 -24-17 -21-17 -19-17 -18-17 -17-16 -15-17 -14-17 -13-17 -11-16 -10-16 -9-16 -7-15 -6-14 -4-14 -2-11 -1-11 1-10 2-8 3-7 5-6 5-5 7-3 8-3 9-2 9-1 11 0 11 0 12 2 13 2 14 3 14 3 15 4 15 5 16 5 16 5 16 6 17 7 16 6 17 7 16 7 15 7 10 4 10 5 16 7 17 9 21 10 22 11 19 10 18 11 17 10 17 10 14 9 12 9 11 8 9 7 9 7 8 7 7 7 6 6 6 6 5 6 5 5 4 6 4 5 4 5 3 5 3 5 3 5 2 4 3 5 2 4 1 4 2 4 2 4 1 3 2 4 1 3 1 4 1 3 1 3 1 3 0 3 1 2 1 3 0 2 1 2 0 1 1 2 0 2 1 2 0 3 1 2 0 3 1 2 0 3 1 3 0 3 1 3 1 3 0 3 1 3 0 3 1 3 1 3 0 4 1 3 1 3 0 3 1 4 1 3 1 3 1 4 1 3 1 3 1 4 1 3 2 3 1 3 2 3 2 4 1 3 2 3 3 3 2 2 3 3 2 3 3 2 4 3 3 2 4 3 4 2 5 2 5 2 5 2 6 1 6 2 7 1 7 1 9 1 9 0 9 0 11 0 12-1 14-1 16-3 17-3 18-5 19-5 19-6 21-8 22-9 23-11 25-13 26-15 29-19 34-24 31-24 28-25 24-23 22-22 21-23 19-22 17-22 16-22 15-22 13-21 12-21 10-21 9-19 7-19 4-17 3-16 2-14 -1-12 -2-11 -4-9 -4-8 -7-7 -7-5 -9-4 -10-3 -10-1 -12-1 -13 0 -13 1 -14 3 -15 2 -16 4 -15 4 -16 5 -17 5 -16 5 -15 5 -9 3 -10 4 -15 5 -17 7 -21 8 -23 9 -26 11 -32 12 -40 17 -30 13 -31 13 -27 12 -24 11 -23 10 -22 10 -20 9 -20 9 -19 9 -18 9 -19 10 -12 6 -10 5 -5 3 -7 4 -7 4 -8 5 -8 4 -8 5 -9 5 -7 5 -8 5 -7 5 -7 5 -7 5 -7 4 -6 5 -7 5 -6 4 -6 4 -6 5 -6 4 -5 4 -6 4 -6 4 -6 3 -6 4 -7 3 -7 3 -7 3 -7 2 -8 3 -8 1 -9 2 -9 1 -10 0 -11 0 -12-1 -13-2 -14-3 -15-5 -15-5 -16-7 -15-7 -16-8 -15-10 -14-9 -13-10 -13-11 -12-10 -11-11 -10-11 -10-11 -8-11 -7-11 -7-10 -4-10 -4-10 -2-8 -1-8 0-7 2-6 2-5 4-4 4-3 6-3 6-2 7-1 8-1 8 1 10 0 9 2 11 2 11 3 11 3 13 4 12 4 13 5 13 5 14 6 13 6 14 7 14 7 14 8 13 8 14 8 13 9 12 9 13 10 13 12 9 9 9 9 6 9 5 7 3 8 3 7 2 6 1 7 1 6 -1 6 -1 5 -2 6 -2 5 -4 5 -4 5 -6 4 -7 4 -8 4 -10 3 -12 2 -16 1 -16-1 -16-2 -18-4 -19-6 -21-8 -19-9 -19-9 -17-11 -16-11 -16-11 -14-11 -13-12 -13-12 -11-12 -11-12 -10-12 -8-12 -7-12 -6-11 -5-11 -4-10 -2-9 0-8 1-7 2-6 2-6 4-4 5-4 6-2 7-2 8-1 8-1 9 0 10 1 10 2 11 2 12 3 12 3 13 4 14 5 13 5 14 5 15 6 14 7 15 7 15 7 15 8 15 8 14 8 14 9 14 9 14 10 14 11 11 10 11 10 8 9 6 8 6 7 4 7 4 7 3 7 2 7 2 6 0 6 1 6 -1 6 -1 6 -1 5 -3 5 -3 6 -3 5 -5 4 -6 5 -7 4 -9 5 -11 3 -16 3 -15 1 -16 0 -17-2 -18-4 -19-5 -21-7 -22-9 -22-11 -20-11 -20-13 -17-12 -17-13 -15-13 -15-13 -13-14 -13-13 -11-14 -10-13 -9-14 -8-12 -6-13 -5-12 -4-11 -2-10 0-9 0-7 2-7 3-6 5-5 5-4 6-3 7-2 8-1 9-1 10 0 10 1 11 1 12 3 12 2 13 4 14 4 14 5 14 5 15 5 15 6 16 7 16 7 16 7 16 8 16 8 15 8 16 9 15 9 15 9 15 10 15 11 11 9 11 9 9 8 7 7 7 7 6 7 5 7 4 6 4 6 4 7 3 6 2 6 2 6 2 6 1 6 0 6 0 5 0 6 -1 5 -1 5 -2 6 -2 5 -3 5 -4 5 -4 5 -5 6 -7 5 -9 5 -11 5 -13 3 -12 3 -13 1 -15 0 -17-1 -17-2 -19-4 -20-5 -20-7 -22-9 -25-12 -25-13 -23-15 -22-15 -19-15 -19-16 -16-15 -16-15 -15-16 -13-16 -12-15 -11-15 -9-15 -8-15 -7-14 -5-13 -4-12 -2-11 0-10 1-9 2-7 3-7 5-5 6-4 6-4 8-2 9-2 9-1 11 0 11 1 12 2 12 2 13 3 14 4 15 4 15 4 15 6 16 5 16 6 16 7 17 7 17 7 16 7 17 8 16 8 15 7 14 7 12 7 10 5 16 9 16 9 17 11 14 9 11 8 10 7 8 6 8 7 7 5 6 6 6 5 5 5 4 5 4 4 4 4 3 3 1 2 1 2 2 2 3 3 2 4 3 3 2 4 2 4 3 4 2 4 2 4 2 4 2 5 1 4 2 5 1 4 1 4 1 5 1 4 1 5 0 5 1 4 0 5 0 5 -1 4 0 5 -1 4 0 5 -2 5 -1 4 -1 5 -2 5 -3 5 -3 5 -3 5 -4 5 -4 5 -5 5 -5 4 -6 4 -6 3 -6 4 -7 2 -7 3 -8 2 -9 2 -10 1 -11 1 -11 0 -14 0 -14-1 -18-3 -18-3 -19-5 -20-6 -22-7 -22-10 -24-11 -25-13 -29-17 -29-20 -27-21 -25-20 -22-20 -21-20 -18-20 -17-19 -16-19 -14-19 -13-19 -12-19 -10-18 -8-17 -7-17 -5-16 -4-14 -1-13 0-11 1-10 3-9 4-7 5-7 7-5 8-3 8-3 10-2 11-1 12 0 12 1 13 2 14 2 15 4 15 3 16 5 16 5 16 5 16 6 17 5 15 6 12 5 12 4 13 5 17 8 20 8 23 10 27 11 26 12 28 13 23 11 22 11 20 10 19 10 18 10 18 9 17 11 15 9 14 9 12 8 10 7 8 6 8 6 6 5 5 4 4 3 2 2 2 2 4 4 4 3 4 4 4 4 4 4 4 4 4 4 4 5 4 4 4 5 4 4 3 4 4 5 4 4 3 5 4 4 4 5 3 4 4 4 4 4 4 5 4 4 5 4 4 4 5 4 5 4 6 3 5 4 7 3 7 3 7 3 8 2 9 2 10 2 10 1 12 1 13-1 15-1 17-2 18-4 20-6 21-7 22-9 24-11 26-15 23-14 22-16 20-15 18-15 17-16 15-15 15-16 13-16 12-15 11-16 9-15 8-14 7-14 5-13 4-13 1-11 1-9 -1-9 -2-8 -4-6 -5-5 -5-5 -7-3 -8-2 -9-2 -9-1 -11 0 -11 1 -12 2 -12 2 -14 3 -14 4 -14 4 -15 4 -16 6 -15 5 -17 7 -16 6 -17 7 -16 7 -17 8 -16 7 -16 8 -15 7 -10 5 -11 6 -12 6 -16 9 -17 10 -17 10 -13 8 -12 9 -11 7 -9 7 -8 7 -8 6 -6 6 -6 5 -6 5 -5 5 -4 5 -4 4 -3 4 -3 4 -2 3 -1 1 -1 2 -2 2 -2 3 -3 4 -2 3 -2 4 -2 4 -2 3 -2 4 -2 5 -1 4 -2 4 -1 4 -2 4 -1 5 -1 4 -1 5 0 4 -1 5 0 4 -1 5 0 4 1 5 0 4 0 5 1 4 1 5 1 5 1 4 2 5 2 5 2 5 3 5 3 5 4 5 5 5 5 4 5 4 5 4 5 3 7 3 6 3 7 3 8 2 8 2 10 1 10 1 11 1 13 0 14-1 16-2 18-3 19-5 19-5 21-7 22-8 23-11 25-12 26-15 31-20 28-20 28-21 23-21 21-20 20-20 18-19 16-20 16-20 13-19 13-19 11-18 9-18 8-18 6-16 5-16 2-13 1-13 0-11 -2-9 -4-8 -4-7 -6-6 -8-5 -8-3 -9-2 -10-2 -12 0 -12 0 -13 1 -13 3 -15 2 -14 4 -16 4 -16 5 -16 5 -16 5 -16 6 -16 6 -16 5 -13 5 -11 5 -18 7 -19 8 -23 10 -27 11 -34 15 -27 13 -24 11 -22 11 -21 10 -19 10 -19 10 -17 9 -18 10 -16 10 -14 9 -13 8 -10 7 -9 6 -7 6 -6 5 -6 4 -2 2 -3 3 -4 3 -4 3 -4 4 -5 4 -4 5 -5 4 -4 4 -4 5 -4 4 -4 5 -5 4 -4 5 -3 4 -4 5 -4 4 -4 4 -4 5 -4 4 -4 5 -4 4 -4 4 -5 4 -4 4 -5 4 -5 4 -5 4 -6 3 -6 4 -7 3 -7 3 -8 2 -8 3 -9 2 -10 1 -11 1 -13 0 -13-1 -16-1 -17-3 -19-5 -20-6 -22-8 -23-11 -26-13 -23-14 -22-15 -20-14 -18-15 -16-15 -16-15 -15-15 -13-16 -12-15 -11-15 -10-15 -8-14 -7-14 -6-13 -3-12 -3-11 0-10 0-9 2-7 3-7 5-5 5-5 7-3 7-3 8-2 10-1 10 0 10 1 12 1 12 3 13 2 14 4 14 4 15 4 15 5 16 6 16 6 16 7 17 6 16 8 17 7 16 8 16 8 16 8 15 7 14 8 13 7 11 6 13 8 11 7 12 8 10 7 9 6 7 6 7 5 6 5 6 5 5 4 3 3 2 2 3 3 3 3 4 4 4 4 3 4 4 4 3 4 4 5 3 4 3 5 3 4 3 5 2 5 2 4 2 5 2 5 2 5 1 5 2 4 1 5 0 5 1 5 0 5 1 5 -1 5 0 5 -1 4 0 5 -2 5 -1 5 -2 5 -2 5 -2 5 -4 5 -3 5 -5 6 -5 5 -6 5 -6 4 -7 4 -7 3 -8 3 -8 3 -9 2 -10 1 -11 1 -11 1 -14 0 -15-1 -18-3 -18-3 -19-5 -21-6 -21-8 -23-10 -24-11 -26-15 -30-18 -27-19 -26-20 -22-19 -21-19 -18-19 -18-19 -16-18 -14-19 -13-18 -12-18 -11-17 -8-17 -8-17 -6-15 -4-15 -2-13 0-11 0-10 3-9 3-8 5-6 6-5 7-4 9-3 9-2 10-2 11 0 12 1 13 1 14 3 14 2 14 4 16 4 15 5 17 5 16 6 16 6 17 6 16 6 12 5 12 5 13 5 18 7 19 9 23 10 27 12 27 13 23 11 21 11 20 10 18 10 18 10 17 10 16 9 14 9 12 9 11 8 10 7 8 7 7 6 7 6 5 5 5 4 5 5 3 4 3 2 2 2 2 2 2 3 3 4 3 3 3 4 3 4 3 4 3 4 3 4 3 4 3 4 3 4 3 5 3 4 3 4 3 4 3 5 3 4 3 4 3 4 3 5 3 4 4 4 3 4 4 4 4 4 4 4 5 4 5 3 5 4 6 3 6 3 7 3 7 3 8 2 9 3 9 1 11 1 12 1 13 0 15-1 17-3 18-3 20-5 20-7 22-8 23-10 26-13 27-16 25-17 24-18 21-17 20-17 18-17 16-18 16-17 14-17 12-17 12-16 9-17 9-15 7-15 5-15 4-13 2-12 1-11 -1-9 -3-8 -3-7 -5-6 -6-5 -7-4 -8-2 -9-2 -10-1 -10 0 -12 0 -12 2 -13 2 -14 3 -15 4 -14 4 -16 5 -16 5 -16 5 -16 6 -17 7 -17 6 -16 7 -16 7 -10 4 -11 5 -14 7 -18 8 -19 9 -23 11 -21 11 -20 11 -18 10 -17 10 -17 10 -14 9 -13 9 -11 8 -10 8 -9 7 -8 7 -8 7 -6 6 -6 7 -6 6 -5 5 -4 6 -4 5 -3 5 -4 4 -3 5 -2 4 -3 4 -2 4 -2 4 -2 4 -1 3 -2 3 -1 3 -2 3 0 2 -1 2 -1 1 -1 2 0 3 -1 2 -2 3 -1 3 -1 3 -1 3 -1 3 -1 4 -1 3 -1 3 -1 4 -1 3 -1 4 -2 3 -1 4 -1 3 -1 4 -1 4 -2 3 -1 4 -2 4 -1 3 -2 4 -1 4 -2 3 -2 4 -2 4 -3 3 -2 4 -3 3 -3 4 -3 3 -3 3 -4 3 -4 3 -4 3 -5 3 -5 2 -5 3 -6 2 -7 2 -7 2 -8 1 -8 2 -9 1 -11 0 -11 0 -13 0 -14-2 -16-2 -18-4 -19-4 -20-6 -20-7 -22-8 -23-11 -24-12 -26-14 -29-19 -32-21 -29-23 -26-22 -23-22 -21-21 -19-21 -18-20 -16-21 -15-21 -14-20 -12-20 -11-19 -9-19 -8-18 -6-17 -4-16 -2-14 0-12 1-11 2-10 4-8 6-7 6-5 8-5 9-3 10-2 10-1 12-1 13 1 13 2 14 2 15 3 16 4 15 4 16 5 17 5 16 6 16 5 11 4 13 5 12 5 17 6 19 8 23 9 25 10 32 14 27 12 32 14 26 11 24 11 22 11 20 10 20 9 19 10 18 9 18 10 17 10 12 7 11 6 10 7 8 5 4 3 5 3 5 3 5 4 6 5 6 4 6 5 6 4 6 5 6 5 5 4 5 5 6 5 5 4 5 5 5 5 5 4 4 5 5 4 5 4 5 4 5 5 5 4 5 4 6 3 6 4 6 4 6 3 7 3 7 3 8 2 9 2 9 2 10 1 11 1 12 0 13-1 15-2 16-4 18-4 20-7 21-9 20-10 20-11 19-12 17-12 17-12 15-13 14-13 14-13 12-13 11-14 11-13 9-13 7-13 7-12 5-12 3-11 2-10 1-9 -1-7 -1-7 -3-6 -5-4 -5-4 -6-3 -7-3 -8-1 -8-1 -10 0 -10 1 -11 2 -12 2 -12 3 -13 3 -13 4 -14 5 -15 5 -14 5 -16 6 -15 7 -16 7 -15 7 -16 8 -16 8 -16 8 -15 9 -15 9 -15 9 -15 10 -14 11 -11 9 -11 9 -8 8 -8 7 -6 8 -6 7 -5 6 -4 7 -4 6 -3 7 -3 6 -2 6 -1 6 -1 6 -1 6 0 5 0 6 1 5 1 6 2 5 2 5 3 6 4 5 5 5 5 5 7 5 10 5 12 5 13 3 13 2 15 1 16 0 17-2 18-3 19-5 21-6 21-8 23-11 26-13 23-14 22-15 20-15 18-14 17-16 15-15 15-15 13-15 13-15 11-16 9-14 9-15 7-13 5-14 4-12 2-11 1-10 0-9 -2-7 -3-7 -5-6 -5-4 -6-4 -8-2 -8-2 -9-1 -10 0 -11 1 -12 1 -12 2 -13 3 -14 3 -14 4 -15 5 -15 5 -16 5 -16 6 -16 7 -16 7 -17 7 -17 7 -16 8 -16 8 -16 8 -15 8 -14 7 -10 6 -11 6 -12 7 -14 9 -13 8 -10 7 -9 6 -8 6 -7 6 -7 5 -6 5 -5 4 -4 4 -2 3 -3 2 -3 3 -3 4 -4 3 -3 4 -4 4 -3 5 -3 4 -4 4 -3 5 -3 4 -2 5 -3 5 -2 4 -2 5 -2 5 -2 5 -1 4 -1 5 -1 5 -1 5 -1 5 0 5 0 5 0 4 0 5 1 5 0 5 1 5 2 4 1 5 2 5 3 5 3 6 3 5 4 5 5 5 6 5 6 5 6 4 7 3 7 3 8 3 9 2 9 2 11 1 11 1 12 0 15 0 16-2 18-3 19-4 20-6 21-7 21-8 24-11 25-12 28-17 28-18 27-20 24-19 22-19 20-19 18-19 17-19 15-19 14-18 13-18 11-18 10-18 8-16 7-17 5-15 3-14 2-12 0-11 -2-10 -2-8 -5-7 -5-6 -6-5 -8-4 -9-2 -9-2 -11-1 -11 0 -13 1 -13 2 -14 3 -14 3 -15 4 -16 4 -15 5 -17 5 -16 6 -16 6 -17 6 -15 6 -6 2 -7 3 -15 6 -16 7 -20 8 -22 10 -26 12 -29 13 -23 12 -22 10 -20 11 -19 10 -18 10 -17 10 -17 10 -14 9 -13 8 -12 9 -10 7 -8 7 -8 6 -6 6 -6 5 -5 5 -4 4 -4 4 -3 3 -2 2 -2 2 -3 3 -3 3 -3 4 -3 4 -3 4 -4 4 -3 4 -3 4 -3 4 -3 4 -3 4 -3 5 -3 4 -3 4 -3 5 -3 4 -3 4 -3 4 -3 5 -3 4 -4 4 -3 4 -4 4 -4 4 -4 4 -4 4 -5 4 -5 3 -6 4 -6 3 -6 3 -7 3 -8 3 -8 2 -9 2 -10 1 -11 1 -13 1 -13-1 -16-1 -18-3 -19-5 -20-5 -21-8 -23-9 -24-12 -27-14 -26-17 -24-17 -22-17 -20-17 -19-17 -17-17 -16-17 -14-17 -13-17 -12-16 -11-17 -9-16 -7-15 -6-14 -5-14 -3-13 -1-11 0-10 2-8 3-8 4-6 6-5 6-4 8-4 8-2 10-1 10-1 11 1 12 1 13 2 13 3 15 3 14 4 15 4 16 5 16 6 16 6 17 6 16 6 17 7 16 7 16 7 9 4 10 4 17 8 17 8 21 10 22 12 20 10 19 10 17 11 17 10 15 9 13 9 12 9 10 7 9 8 9 7 7 6 7 7 6 6 5 6 6 6 4 5 4 6 4 5 3 5 3 4 3 5 3 4 2 5 2 4 2 4 2 3 1 4 2 3 1 4 1 3 2 3 1 2 0 3 1 2 1 1 0 2 1 2 1 3 0 2 1 3 1 3 1 3 1 3 1 3 1 3 0 3 1 4 1 3 1 3 1 4 1 3 1 3 1 4 1 3 1 4 1 3 1 4 1 4 2 3 1 4 1 3 2 4 2 3 2 4 2 3 2 3 2 4 3 3 2 3 3 3 3 3 4 3 4 3 4 3 4 2 5 3 5 2 6 2 6 2 6 2 8 1 7 2 9 0 10 1 10 0 12 0 13-1 15-2 17-3 18-3 18-5 20-6 21-8 22-9 23-10 24-12 26-15 29-19 33-22 29-24 27-23 24-22 21-21 20-22 18-21 17-22 16-21 14-21 12-20 11-20 10-19 8-19 6-18 5-16 2-15 1-13 -1-11 -3-10 -3-9 -6-7 -6-6 -8-5 -8-4 -10-2 -11-1 -12-1 -12 1 -14 1 -14 3 -15 3 -15 3 -16 4 -16 5 -16 5 -16 6 -16 5 -10 3 -10 4 -14 5 -17 7 -19 7 -22 9 -26 11 -31 13 -34 14 -28 12 -29 13 -25 11 -23 11 -22 10 -21 10 -19 9 -19 9 -18 10 -19 10 -17 9 -11 6 -9 5 -7 5 -4 2 -4 3 -6 3 -6 4 -7 5 -7 5 -7 4 -6 5 -7 5 -6 5 -6 5 -6 4 -6 5 -6 5 -5 4 -6 5 -5 4 -6 5 -5 4 -5 4 -5 5 -6 4 -5 3 -6 4 -6 4 -6 3 -6 4 -7 3 -7 2 -8 3 -8 2 -9 2 -10 1 -10 1 -12 0 -12-1 -14-2 -15-3 -16-4 -18-6 -18-7 -18-9 -18-9 -18-10 -16-11 -16-12 -14-11 -14-12 -13-13 -11-12 -11-12 -10-12 -9-13 -7-12 -6-11 -5-11 -4-11 -2-9 0-8 0-7 2-7 3-5 4-5 5-3 6-3 6-2 8-2 8 0 10 0 10 1 10 2 11 2 12 2 13 4 13 4 13 4 14 5 14 6 15 6 14 6 15 7 15 8 16 7 15 9 14 8 15 9 14 9 14 10 14 10 14 12 11 10 8 8 7 8 6 8 5 7 4 7 3 7 3 6 2 7 1 6 1 6 0 6 0 6 -1 5 -2 6 -2 5 -3 5 -4 5 -5 5 -5 5 -7 5 -9 4 -11 4 -16 3 -15 1 -16 0 -17-1 -18-3 -19-5 -20-7 -21-8 -24-11 -22-12 -20-13 -19-12 -17-14 -17-13 -15-14 -14-13 -13-14 -12-14 -11-14 -9-14 -9-13 -7-13 -5-12 -5-12 -2-11 -1-9 0-9 1-7 3-6 4-6 4-4 6-4 7-2 8-2 8-1 10 0 10 0 11 1 12 2 12 3 13 3 13 4 14 4 15 5 15 5 15 6 16 7 15 7 17 7 16 7 16 8 16 8 16 9 15 9 15 8 15 10 16 10 15 11 10 8 10 8 9 7 7 7 7 7 6 7 5 6 5 6 4 7 4 6 3 6 3 6 2 5 2 6 2 6 1 6 0 5 1 6 0 5 -1 6 -1 5 -1 5 -2 6 -2 5 -3 5 -3 5 -5 5 -5 6 -7 5 -8 5 -11 5 -10 4 -11 2 -12 2 -13 1 -15 0 -17-1 -17-3 -19-4 -20-5 -21-7 -22-9 -24-12 -27-14 -24-15 -23-17 -21-15 -19-16 -17-17 -17-16 -15-16 -13-16 -13-16 -11-16 -10-16 -9-15 -7-14 -5-14 -4-13 -3-12 0-10 0-9 2-8 4-7 4-6 6-4 6-4 8-3 9-2 9-1 10 0 12 1 12 1 12 2 14 3 14 4 14 4 15 4 16 5 16 6 16 6 16 6 17 7 17 7 16 7 16 8 16 7 9 4 10 5 14 7 15 8 18 9 20 11 18 10 16 11 15 9 13 9 11 8 9 7 9 7 8 6 7 7 6 6 6 5 5 6 5 5 4 5 4 5 3 5 3 4 3 5 2 4 3 4 2 3 2 4 1 3 2 4 1 2 1 2 1 3 0 1 1 3 1 3 1 3 1 3 1 3 1 3 1 3 1 4 0 3 1 4 0 4 1 3 0 4 1 4 0 4 0 4 0 4 0 4 0 4 0 4 -1 4 0 4 -1 4 0 4 -1 4 -1 5 -1 4 -2 4 -1 5 -2 5 -2 4 -3 5 -3 4 -2 4 -4 4 -3 3 -3 4 -4 3 -4 3 -4 2 -5 3 -5 3 -6 2 -6 2 -6 2 -7 1 -8 2 -8 1 -10 1 -10 0 -11 0 -13-1 -14-1 -16-3 -18-3 -18-5 -20-5 -20-7 -22-9 -22-9 -24-12 -26-14 -28-18 -33-22 -30-23 -28-23 -24-22 -22-22 -20-21 -18-22 -17-21 -16-21 -15-21 -12-20 -12-20 -10-20 -8-18 -7-18 -4-17 -3-15 -1-13 0-12 2-10 4-9 5-7 6-7 7-5 9-3 9-3 11-2 11 0 13 0 13 2 14 2 15 2 15 4 16 4 16 5 16 5 16 5 16 5 12 5 12 4 12 5 17 6 19 8 22 8 26 11 30 12 34 15 28 12 29 13 25 11 23 11 22 10 20 10 20 9 19 9 18 10 18 10 17 9 11 6 9 6 7 4 5 3 5 3 5 4 7 4 6 4 7 5 7 5 6 4 7 5 6 5 6 5 6 4 5 5 6 5 5 4 6 5 5 5 5 4 5 4 6 5 5 4 5 4 6 4 5 3 6 4 6 4 7 3 6 3 7 3 8 2 8 2 9 2 10 1 10 1 12 0 12-1 14-1 15-3 17-4 18-6 18-8 19-8 19-10 17-11 17-11 16-11 14-12 14-12 13-13 12-12 11-13 10-12 9-12 8-13 6-11 5-12 4-10 2-10 1-8 -1-8 -2-6 -3-6 -3-4 -5-4 -6-3 -7-2 -8-1 -8-1 -9 0 -10 1 -11 1 -11 2 -12 3 -12 4 -13 3 -14 5 -14 5 -14 5 -14 6 -15 7 -16 7 -15 7 -15 8 -15 8 -15 8 -15 9 -14 9 -14 10 -15 10 -14 11 -10 9 -9 9 -7 8 -7 8 -5 7 -5 7 -4 7 -3 7 -2 6 -2 6 -1 7 -1 6 0 5 0 6 1 6 2 5 2 5 3 6 4 5 4 5 6 4 7 5 8 5 12 4 15 3 15 2 16 0 17-1 18-3 19-5 19-6 22-8 23-10 23-12 21-13 20-13 18-13 16-14 16-14 15-14 13-14 13-14 11-14 10-14 9-14 8-13 6-13 5-12 3-11 2-10 0-9 -1-8 -2-7 -4-6 -4-4 -6-4 -7-3 -7-2 -8-2 -10 0 -10 0 -10 1 -12 2 -12 2 -13 3 -13 4 -14 4 -15 4 -14 6 -16 5 -15 7 -16 6 -16 7 -17 8 -16 8 -16 8 -16 8 -16 8 -15 9 -15 9 -15 10 -16 10 -12 8 -11 9 -9 7 -8 7 -7 7 -6 6 -6 7 -5 6 -5 6 -4 6 -4 6 -4 6 -3 6 -2 5 -2 6 -2 6 -2 5 -1 6 -1 5 0 6 0 5 0 6 1 5 1 5 2 5 2 6 3 5 3 5 4 5 4 5 6 6 8 5 9 5 9 4 10 3 11 3 11 2 13 1 15 0 16-2 18-2 19-4 19-5 21-7 22-9 24-11 26-14 26-15 24-17 22-16 19-17 19-16 17-17 15-16 15-17 13-17 12-16 10-16 10-15 7-16 6-14 5-14 3-12 1-11 0-10 -1-8 -3-8 -4-6 -5-5 -7-4 -7-4 -8-2 -10-1 -10-1 -11 1 -12 1 -12 1 -13 3 -14 3 -15 4 -15 4 -15 5 -16 6 -16 6 -17 6 -16 7 -17 6 -16 7 -17 7 -15 7 -12 6 -12 6 -18 8 -18 9 -21 11 -19 11 -18 10 -17 10 -16 10 -14 9 -12 8 -10 8 -9 8 -9 7 -7 6 -7 7 -6 6 -6 6 -5 5 -4 6 -5 5 -3 5 -4 5 -3 5 -3 5 -2 4 -3 5 -2 4 -2 4 -2 4 -2 4 -1 4 -2 4 -1 4 -1 4 -1 3 -1 4 -1 3 -1 4 -1 3 0 4 -1 3 -1 3 0 3 -1 3 0 3 0 3 -1 3 0 3 0 3 -1 2 0 3 0 3 -1 2 0 3 0 2 0 3 0 2 0 3 -1 2 0 2 0 2 0 3 0 2 0 2 0 2 0 2 0 2 0 2 0 2 0 1 0 2 0 2 -1 1 0 2 0 1 0 1 0 2 0 1 0 2 0 1 0 2 0 2 0 2 0 2 0 1 0 2 0 2 0 2 0 3 0 2 0 2 0 2 0 2 0 3 0 2 0 2 0 3 0 2 1 2 0 3 0 2 0 3 0 2 0 3 0 2 0 3 0 2 0 2 0 3 1 2 0 2 0 2 0 2 0 2 1 2 0 2 0 1 0 2 1 2 0 1 0 2 1 2 0 1 0 2 1 1 0 2 1 1 1 1 0 2 1 1 1 1 1 2 0 1 1 1 1 1 2 1 1 1 1 1 2 1 1 1 2 1 2 1 2 1 2 1 2 1 3 1 3 1 3 0 3 1 4 1 4 0 4 1 4 0 5 0 6 1 6 0 6 0 8-1 7 0 9-1 9-1 10-1 12-2 12-2 14-3 14-3 16-4 16-5 17-5 19-7 19-7 20-9 21-10 23-12 24-13 25-15 28-18 31-23 38-29 28-24 29-28 26-26 24-26 22-25 20-26 20-25 17-25 17-25 14-25 14-24 11-23 10-23 8-22 6-21 4-18 2-17 0-14 -1-13 -3-11 -5-10 -6-8 -7-6 -9-5 -10-4 -11-2 -12-1 -13 0 -13 0 -15 2 -15 3 -16 3 -16 4 -16 5 -16 5 -12 3 -10 4 -10 3 -16 6 -17 6 -20 7 -23 9 -26 10 -30 12 -34 14 -38 15 -45 18 -38 16 -34 13 -30 12 -27 11 -26 10 -24 10 -23 9 -22 8 -20 8 -19 8 -19 7 -12 5 -16 6 -15 6 -14 6 -14 6 -13 5 -12 5 -12 5 -11 5 -10 4 -10 5 -9 4 -9 4 -8 4 -8 4 -8 3 -8 3 -7 4 -7 3 -7 2 -6 3 -7 2 -7 2 -6 2 -7 2 -7 1 -7 1 -7 1 -8 0 -7 0 -8-1 -8-1 -9-2 -8-3 -9-2 -9-4 -8-4 -9-4 -8-5 -8-5 -8-6 -7-6 -7-5 -6-7 -5-6 -5-6 -4-6 -3-6 -2-5 -1-5 0-5 0-3 2-4 2-2 3-2 4-2 4-1 5 0 5 0 6 0 7 1 6 2 8 1 7 3 8 3 8 3 8 3 8 4 9 5 8 5 8 5 9 5 7 6 8 7 7 7 7 7 5 7 3 7 2 6 1 5 0 5 -1 4 -3 4 -4 4 -4 2 -6 2 -6 1 -7 1 -8-1 -8-1 -9-2 -9-2 -10-4 -9-4 -10-4 -9-5 -9-6 -9-6 -8-6 -7-6 -7-7 -7-6 -5-7 -5-6 -5-7 -3-6 -2-6 -2-6 0-4 1-5 1-3 3-3 3-2 3-2 5-1 5-1 5 0 6 0 7 1 6 1 8 2 8 2 8 3 8 3 9 4 8 4 9 4 9 5 9 5 8 6 9 6 8 6 8 7 7 7 7 8 5 7 3 7 2 6 1 6 -1 5 -1 4 -3 4 -4 4 -5 3 -6 2 -7 1 -7 0 -9 0 -9-1 -9-2 -10-3 -10-4 -10-4 -10-5 -10-5 -10-6 -9-6 -8-7 -8-6 -8-7 -6-7 -7-7 -5-7 -5-7 -3-7 -3-6 -1-6 -1-5 0-5 2-4 2-3 3-3 4-2 4-1 5-1 5 0 6 0 7 0 7 2 8 1 8 2 8 3 9 3 9 4 9 4 9 4 9 5 10 5 9 6 9 6 9 6 8 7 9 7 7 8 7 9 5 7 3 7 1 6 1 6 -1 5 -1 4 -3 5 -4 3 -6 3 -6 2 -7 2 -8 0 -9 0 -10-1 -10-2 -11-3 -10-4 -11-4 -11-6 -11-5 -10-7 -9-6 -9-7 -9-7 -8-7 -7-8 -7-7 -6-8 -5-7 -4-7 -3-7 -2-7 -1-5 0-5 2-4 1-4 3-3 4-2 4-2 5-1 6-1 6 0 6 0 8 1 7 2 9 2 8 2 9 3 9 4 10 4 10 4 9 5 10 5 10 6 10 6 9 6 10 7 9 7 8 8 8 9 7 8 5 8 3 7 1 6 1 6 -1 5 -1 5 -3 4 -4 4 -5 4 -7 2 -7 2 -9 1 -9 0 -10-1 -11-2 -12-3 -11-4 -12-4 -11-6 -12-6 -11-6 -10-7 -10-7 -9-8 -9-8 -8-7 -7-8 -6-8 -6-8 -5-8 -4-7 -2-7 -2-7 0-5 0-5 2-4 2-4 3-3 4-2 5-2 6-1 6 0 6 0 8 0 7 2 9 1 8 3 9 2 10 4 10 3 10 5 10 4 10 5 11 6 10 6 11 6 10 7 10 7 9 7 9 8 9 9 8 10 5 8 3 7 2 7 1 6 0 5 -2 6 -2 4 -3 5 -5 3 -6 4 -7 2 -8 2 -10 1 -11-1 -11-1 -12-3 -13-3 -12-5 -13-5 -12-6 -12-7 -11-7 -11-7 -10-8 -10-8 -9-8 -8-9 -8-8 -7-9 -6-8 -5-8 -3-8 -3-8 -2-6 0-6 1-5 2-5 2-3 4-3 4-3 5-1 5-2 7 0 7 0 7 1 8 1 9 2 9 2 10 3 10 3 10 4 11 4 10 5 11 5 11 6 11 6 11 6 11 7 11 7 10 8 10 8 9 9 10 11 6 9 5 8 3 7 2 6 0 6 0 6 -2 5 -2 5 -3 4 -5 4 -6 4 -7 3 -8 2 -11 1 -11 0 -13-1 -13-3 -13-3 -14-5 -14-6 -13-6 -13-7 -12-8 -12-8 -11-8 -11-9 -9-8 -10-9 -8-9 -7-9 -7-9 -6-9 -4-9 -4-8 -2-8 -1-6 1-6 1-5 2-4 3-4 4-3 5-2 6-2 6-1 7 0 7 0 9 1 8 2 10 2 9 2 11 4 10 3 11 4 11 5 12 5 12 5 11 6 12 7 12 7 11 7 11 7 11 9 11 8 10 9 10 12 8 9 5 8 3 8 3 7 1 6 0 6 -1 5 -1 6 -3 5 -4 4 -4 4 -6 4 -8 3 -9 2 -11 2 -13 0 -14-2 -14-2 -15-4 -15-5 -15-6 -15-8 -14-7 -13-8 -13-9 -12-9 -11-9 -10-10 -10-9 -9-10 -8-10 -7-9 -7-10 -5-9 -4-9 -2-8 -2-8 0-6 1-6 2-5 3-4 4-3 5-3 5-2 7-1 7 0 7 0 9 0 9 2 9 1 10 3 11 3 11 3 11 4 12 5 12 5 12 5 13 6 12 7 13 6 12 8 12 7 12 8 12 9 11 9 11 10 10 10 8 9 6 9 4 7 3 7 2 7 1 6 0 6 -1 6 -1 6 -3 5 -3 4 -5 5 -6 4 -7 3 -8 3 -10 2 -13 1 -15 0 -16-2 -17-4 -17-5 -16-6 -17-8 -15-8 -15-8 -14-10 -13-9 -13-10 -12-10 -11-11 -10-10 -9-11 -9-10 -7-11 -6-10 -5-10 -4-9 -3-9 -1-7 0-7 1-6 3-5 3-4 4-4 5-3 6-2 7-1 7-1 8 1 9 0 10 2 10 1 10 3 12 3 11 4 12 4 13 5 12 5 13 5 14 7 13 6 13 7 14 8 13 7 13 9 12 8 13 9 12 10 12 12 9 8 8 10 5 8 5 8 3 7 2 7 1 6 1 7 0 5 -1 6 -2 5 -3 6 -3 4 -5 5 -6 4 -6 4 -9 3 -10 3 -13 2 -15 0 -16-1 -17-3 -18-5 -20-6 -18-8 -18-9 -17-9 -16-10 -15-10 -14-11 -13-11 -13-11 -11-12 -11-11 -10-12 -8-11 -8-11 -6-11 -6-11 -3-10 -3-9 -1-8 0-8 2-6 2-5 4-5 4-3 6-3 6-2 7-2 8-1 8 1 10 0 10 2 10 2 12 2 11 3 13 4 12 4 14 5 13 5 14 6 14 7 14 6 15 7 14 8 14 8 14 8 14 9 13 9 14 10 13 11 11 10 9 8 8 9 6 8 5 8 4 7 3 7 3 7 1 7 1 6 0 6 0 5 -2 6 -2 5 -2 6 -4 5 -4 5 -5 4 -7 4 -8 4 -10 4 -13 3 -16 1 -15 0 -17-2 -18-3 -19-5 -20-7 -22-10 -20-10 -19-10 -18-12 -16-12 -16-12 -14-12 -14-12 -13-13 -11-13 -11-13 -10-12 -8-13 -7-12 -6-12 -4-11 -3-10 -2-9 0-8 1-7 2-7 4-5 4-4 5-4 7-2 7-2 8-1 9-1 9 1 11 1 11 2 11 2 12 3 13 4 14 4 13 4 15 6 14 5 15 7 15 6 16 7 15 8 15 8 16 8 15 9 15 8 14 10 14 9 15 11 14 11 11 10 8 8 7 8 6 7 5 8 5 7 4 6 3 7 2 6 2 7 1 6 1 6 0 5 0 6 -1 6 -1 5 -2 6 -3 5 -3 5 -4 5 -5 5 -6 5 -8 4 -10 5 -13 4 -15 2 -16 1 -16 0 -17-2 -18-3 -20-5 -20-7 -22-8 -24-11 -22-13 -22-13 -20-14 -18-14 -17-14 -15-14 -15-14 -14-15 -12-14 -11-15 -10-14 -9-14 -8-13 -6-13 -4-12 -3-12 -2-10 0-8 2-8 2-7 4-6 4-4 6-4 7-3 8-2 8-2 10 0 10 0 11 1 12 2 12 3 13 3 14 4 14 4 15 5 15 5 15 6 16 6 16 7 16 7 17 7 16 8 17 8 16 8 15 9 16 8 15 9 14 9 17 11 10 7 11 8 9 7 8 7 7 6 7 6 6 6 5 6 6 6 4 6 5 6 3 5 4 6 3 5 3 6 2 5 3 6 1 5 2 6 1 5 1 6 0 5 0 5 0 5 0 6 -1 5 -1 5 -2 5 -2 5 -3 5 -3 5 -3 6 -5 5 -6 5 -7 6 -8 5 -9 4 -9 3 -10 3 -10 2 -12 1 -13 1 -14 0 -16-2 -19-2 -18-4 -20-6 -21-7 -22-9 -24-11 -26-13 -27-17 -25-17 -23-17 -20-17 -19-17 -18-18 -16-17 -15-17 -14-17 -12-17 -11-17 -10-16 -8-15 -6-15 -5-14 -4-13 -1-12 0-10 1-9 2-8 4-7 5-5 7-5 7-3 8-3 9-2 10 0 11 0 12 1 13 1 13 3 14 3 14 4 16 4 15 5 16 5 16 6 17 6 16 7 17 6 16 7 16 7 7 3 8 4 16 6 16 8 20 9 22 11 22 11 19 11 19 10 17 10 17 10 14 10 13 9 12 8 10 7 9 8 8 7 7 7 7 6 6 6 6 6 4 6 5 5 4 5 3 5 4 5 3 4 2 5 3 4 2 4 2 4 2 3 1 4 2 3 1 3 2 3 1 2 0 1 1 1 0 3 1 2 1 2 1 3 1 3 1 3 2 3 1 3 1 3 1 4 1 3 1 4 1 3 1 4 1 3 1 4 2 3 1 4 1 3 1 4 2 4 1 3 2 4 1 4 2 4 2 3 2 4 2 3 2 4 2 4 3 3 3 3 3 4 3 3 4 3 3 3 5 3 4 3 5 3 5 2 6 2 6 2 7 2 8 2 8 1 9 1 10 1 11 0 12 0 13-1 16-2 18-3 18-4 19-6 21-6 21-8 22-10 24-11 25-14 28-16 33-22 29-22 23-19 25-22 22-21 20-21 19-21 17-21 16-21 14-20 13-20 11-20 10-19 9-18 6-18 5-16 3-15 2-13 -1-12 -2-10 -3-9 -5-8 -6-6 -7-5 -8-4 -9-2 -11-2 -11-1 -12 1 -13 1 -14 2 -15 3 -15 3 -15 4 -16 5 -16 5 -17 5 -16 5 -15 6 -8 3 -9 3 -15 6 -17 6 -20 8 -22 9 -27 11 -32 14 -28 12 -31 14 -25 11 -23 11 -22 10 -21 10 -19 10 -19 9 -18 10 -18 10 -17 9 -11 7 -10 6 -10 6 -7 5 -4 3 -5 3 -4 3 -6 4 -6 4 -6 5 -6 5 -6 4 -6 5 -5 5 -6 4 -5 5 -5 5 -6 4 -5 5 -5 4 -4 5 -5 4 -5 5 -5 4 -5 4 -5 5 -5 4 -5 4 -6 3 -6 4 -6 3 -6 4 -7 3 -7 3 -8 2 -9 2 -9 2 -10 1 -11 1 -12 0 -13-1 -15-2 -16-4 -18-5 -20-6 -21-9 -20-10 -20-11 -19-12 -17-12 -17-12 -15-13 -14-13 -14-13 -12-14 -11-13 -10-13 -9-13 -8-13 -7-12 -5-12 -3-11 -2-10 -1-9 1-7 2-7 3-6 4-4 5-4 6-3 7-3 8-1 9-1 9 0 11 1 11 2 11 2 12 3 13 3 14 4 14 5 14 5 15 5 15 6 15 7 16 7 16 7 16 8 15 8 16 9 15 8 15 9 15 10 15 10 15 10 11 9 10 9 9 8 7 8 7 7 5 7 5 6 4 7 4 6 3 7 3 6 2 6 1 6 1 6 1 6 0 6 0 5 -1 6 -1 5 -2 5 -3 6 -3 5 -3 5 -5 5 -6 5 -7 5 -9 5 -13 5 -13 3 -13 2 -15 1 -16-1 -17-2 -18-3 -20-5 -20-6 -22-8 -23-11 -25-13 -23-14 -22-15 -20-15 -18-15 -17-15 -15-15 -15-15 -13-15 -12-16 -11-15 -10-14 -8-15 -7-13 -5-14 -4-12 -2-11 -1-10 1-8 2-8 3-6 4-6 6-4 6-4 8-2 8-2 10-1 10 0 11 1 11 1 13 2 13 3 13 4 14 4 15 4 15 5 16 6 16 6 16 7 17 6 16 8 17 7 17 8 16 8 15 8 15 7 14 8 11 6 11 6 12 7 13 8 12 8 10 7 9 6 8 6 7 6 7 5 5 5 5 4 5 4 1 2 3 2 3 3 3 3 3 4 4 4 3 4 4 4 3 4 4 5 3 4 3 5 2 5 3 4 2 5 2 5 2 4 2 5 2 5 1 5 1 5 1 4 0 5 1 5 0 5 0 5 0 5 -1 5 0 4 -1 5 -2 5 -1 5 -2 5 -2 5 -3 5 -4 5 -4 6 -4 5 -6 5 -6 5 -6 4 -7 3 -7 3 -8 3 -9 2 -9 2 -10 2 -11 1 -13 0 -13-1 -16-1 -18-3 -19-4 -20-5 -21-7 -21-8 -23-10 -25-13 -28-16 -28-18 -27-19 -25-20 -22-19 -20-19 -18-19 -17-19 -16-18 -14-19 -13-18 -11-18 -10-17 -8-17 -7-16 -6-16 -3-14 -2-12 0-12 1-9 3-9 4-7 5-6 6-5 8-4 8-3 10-2 10 0 12 0 12 1 13 1 14 3 14 3 15 3 15 5 16 5 16 5 17 6 16 6 16 6 16 6 9 3 10 4 15 6 17 7 20 9 23 10 28 13 26 13 23 11 21 10 20 10 18 10 18 10 17 10 16 10 14 9 13 9 11 8 10 7 8 7 7 6 6 5 6 5 5 5 4 4 4 4 3 3 2 2 2 3 3 3 3 3 3 4 3 4 3 4 4 4 3 4 3 4 3 4 3 4 3 5 3 4 3 4 2 4 3 5 3 4 3 4 4 4 3 5 3 4 3 4 4 4 4 4 4 4 4 4 4 4 5 4 5 3 6 4 6 3 7 3 7 3 8 2 8 2 9 2 11 2 11 0 13 0 14 0 16-2 19-4 19-4 20-6 22-8 23-10 24-12 28-16 26-16 24-18 21-17 20-17 18-17 17-17 15-17 15-17 12-17 12-17 10-16 9-16 7-15 6-14 4-14 2-12 1-11 -1-10 -2-8 -3-7 -4-6 -6-5 -7-4 -8-3 -9-2 -9-1 -11 0 -11 0 -12 2 -13 2 -14 3 -14 3 -15 4 -15 5 -16 5 -16 6 -17 6 -16 6 -17 6 -16 7 -16 7 -15 7 -13 5 -13 6 -18 8 -19 10 -22 11 -21 11 -20 10 -18 10 -17 10 -16 11 -14 9 -12 8 -11 8 -10 8 -8 7 -8 7 -7 6 -7 7 -5 6 -6 6 -4 5 -5 6 -4 5 -3 5 -3 5 -3 4 -3 4 -2 5 -2 4 -2 4 -2 3 -2 4 -1 3 -2 4 -1 3 -1 3 -1 2 -1 2 0 2 -1 2 -1 2 -1 2 -1 3 0 3 -1 3 -1 3 -1 3 -1 3 -1 3 -1 3 -1 4 -1 3 -1 3 -1 4 -1 3 -1 4 -1 3 -1 4 -1 3 -1 4 -2 4 -1 3 -1 4 -2 3 -2 4 -1 4 -2 3 -2 4 -2 3 -2 4 -3 3 -3 3 -3 3 -3 4 -3 3 -4 3 -4 2 -4 3 -5 3 -5 2 -6 2 -6 2 -6 2 -8 2 -7 1 -9 1 -9 1 -11 0 -11 0 -13-1 -15-2 -17-2 -18-4 -18-5 -20-6 -21-7 -21-8 -23-11 -25-12 -26-15 -29-18 -32-23 -30-23 -26-23 -23-21 -22-22 -19-21 -18-21 -17-21 -15-21 -14-21 -13-20 -11-20 -9-19 -8-18 -6-18 -4-16 -3-14 0-13 1-11 2-10 4-9 5-7 7-6 7-4 9-4 10-2 11-1 12-1 12 1 14 1 14 3 15 3 15 3 16 5 16 4 16 6 16 5 16 5 10 4 12 4 13 5 17 7 19 7 23 9 26 11 31 13 31 13 27 12 29 13 24 11 23 11 21 10 21 9 19 10 19 9 18 10 18 10 16 9 11 6 9 5 7 5 5 3 5 3 5 3 6 4 7 5 6 4 7 5 6 5 6 5 6 4 6 5 6 5 6 5 5 4 5 5 6 4 5 5 5 4 5 5 5 4 5 4 6 4 5 4 6 4 5 4 6 3 7 4 6 3 8 3 7 2 8 2 9 2 10 2 10 0 11 0 13 0 13-2 16-2 16-4 18-6 19-7 19-9 19-10 18-11 17-11 16-11 16-12 14-13 13-12 12-13 12-13 10-12 9-13 8-12 7-12 5-11 4-11 2-10 1-9 0-8 -1-6 -3-6 -4-5 -5-4 -5-3 -7-3 -7-1 -9-1 -9 0 -10 1 -10 1 -11 2 -12 3 -13 3 -13 4 -13 4 -14 5 -14 5 -15 6 -15 7 -15 6 -15 8 -16 7 -15 8 -15 9 -15 8 -15 9 -14 10 -15 10 -14 11 -11 9 -10 9 -8 8 -7 8 -5 7 -5 7 -5 7 -3 7 -3 7 -3 6 -1 6 -1 6 -1 6 0 6 1 6 1 5 1 6 3 5 3 5 3 5 5 5 5 5 7 5 9 4 11 5 15 3 15 2 17 0 16-1 18-3 19-4 19-5 21-8 23-10 24-12 22-13 20-14 19-13 17-14 16-14 15-14 14-15 13-14 12-14 10-15 10-14 8-13 6-13 5-13 4-12 2-10 1-9 -1-8 -2-8 -3-6 -4-5 -6-4 -6-3 -7-3 -9-1 -9-1 -10 0 -10 1 -12 1 -12 3 -12 2 -14 4 -14 4 -14 4 -15 6 -15 5 -16 6 -16 7 -16 7 -17 7 -16 8 -16 8 -17 8 -15 8 -16 9 -15 9 -15 9 -15 10 -13 8 -12 9 -9 7 -9 7 -7 7 -7 6 -6 6 -6 6 -5 6 -5 6 -4 6 -4 5 -3 6 -3 6 -3 5 -3 6 -2 5 -2 6 -1 5 -1 6 -1 5 0 6 0 5 0 5 1 5 1 5 1 6 2 5 2 5 3 5 3 5 5 5 5 6 6 5 8 5 9 5 9 4 9 3 11 2 11 2 12 1 14 0 16-1 18-2 18-4 20-5 21-6 21-9 23-10 26-13 27-16 25-16 24-18 20-17 20-17 17-17 17-17 15-17 14-17 13-17 11-16 10-16 8-16 7-15 5-14"/>
</defs>
<path d="M1178.5 128V1278M1257.5 128V1278M1335.5 128V1278M1414.5 128V1278M1493.5 128V1278M1571.5 128V1278M1650.5 128V1278M1729.5 128V1278M1807.5 128V1278M1965.5 128V1278M2043.5 128V1278M2122.5 128V1278M2201.5 128V1278M2280.5 128V1278M2358.5 128V1278M2437.5 128V1278M2516.5 128V1278M2594.5 128V1278M1150 1187.5H2721M1150 1039.5H2721M1150 742.5H2721M1150 594.5H2721M1150 445.5H2721M1150 297.5H2721M1150 149.5H2721" stroke="#2c2c2c" stroke-width="1" fill="none"/>
<path d="M1886.5 128V1278M2673.5 128V1278M1150 890.5H2721" stroke="#505050" stroke-width="1" fill="none"/>
<path d="M1149.75 128V1278.5H2721" stroke="#9c9c9c" stroke-width="1.5" fill="none"/>
<g fill="none">
<path d="M1233 234.5H1274" stroke="#ffffff" stroke-width="1.5"/>
<path d="M1233 272H1274" stroke="#ff0000" stroke-width="1.5"/>
<g shape-rendering="crispEdges" fill="#c8c8c8">
<path d="M1250 229h6v6h-6z" fill-opacity="0.2"/><path d="M1252 229h2v6h-2zM1250 231h6v2h-6z"/><path d="M1252 231h2v2h-2z" fill="#fff"/>
<path d="M1250 266h6v6h-6z" fill-opacity="0.2"/><path d="M1252 266h2v6h-2zM1250 268h6v2h-6z"/><path d="M1252 268h2v2h-2z" fill="#f00"/>
</g>
</g>
<g clip-path="url(#cpd)" fill="none">
<use href="#dw" transform="translate(.5 .5)" stroke="#ffffff" stroke-width="1" shape-rendering="crispEdges"/>
<use href="#dw" stroke="none" marker-start="url(#mw)" marker-mid="url(#mw)" marker-end="url(#mw)"/>
<use href="#dr" transform="translate(.5 .5)" stroke="#ff0000" stroke-width="1" shape-rendering="crispEdges"/>
<use href="#dr" stroke="none" marker-start="url(#mr)" marker-mid="url(#mr)" marker-end="url(#mr)"/>
</g>
</svg>
<div class="cb on" style="left:1214px;top:1346px"><svg width="28" height="28" viewBox="0 0 28 28"><path d="M5.9 15.5L11.6 21.2L21 7.4" stroke="#dfe9fb" stroke-width="3.3" fill="none" stroke-linecap="round" stroke-linejoin="round"/></svg></div>
<div class="cb" style="left:1280px;top:1346px"></div>
<div class="cb" style="left:1346px;top:1346px"></div>
<div class="cb" style="left:1412px;top:1346px"></div>
<div class="cb" style="left:2038px;top:1346px"></div>
<div class="cb on" style="left:2104px;top:1346px"><svg width="28" height="28" viewBox="0 0 28 28"><path d="M5.9 15.5L11.6 21.2L21 7.4" stroke="#dfe9fb" stroke-width="3.3" fill="none" stroke-linecap="round" stroke-linejoin="round"/></svg></div>
<div class="cb on" style="left:2170px;top:1346px"><svg width="28" height="28" viewBox="0 0 28 28"><path d="M5.9 15.5L11.6 21.2L21 7.4" stroke="#dfe9fb" stroke-width="3.3" fill="none" stroke-linecap="round" stroke-linejoin="round"/></svg></div>

<div class="popup"></div>
<div class="hl"></div>
<svg style="position:absolute;left:953px;top:656px" width="36" height="41" viewBox="0 0 36 41">
<rect x="1" y="1" width="33" height="39" rx="8" fill="#5e5e5e" stroke="#777" stroke-width="1"/>
<rect x="1" y="5" width="30" height="31" rx="7" fill="#1f72e6"/>
<path d="M9.5 17l5.5-5.5 5.5 5.5M9.5 24l5.5 5.5 5.5-5.5" stroke="#e6eefc" stroke-width="2.4" fill="none" stroke-linecap="round" stroke-linejoin="round"/>
</svg>
<svg style="position:absolute;left:522px;top:664px" width="28" height="28" viewBox="0 0 28 28"><path d="M3 14l6.5 10L24 4" stroke="#fff" stroke-width="2.2" fill="none"/></svg>

<div class="t " style="left:1298.2px;top:5.4px;font-size:28px;transform:scaleX(0.9428);color:#b3b3b3;font-weight:bold">pyODEqSolver</div>
<div class="t " style="left:36.2px;top:67.3px;font-size:27px;transform:scaleX(1.0170);color:#ffffff;font-weight:normal">Information</div>
<div class="t " style="left:61.2px;top:127.8px;font-size:27px;transform:scaleX(1.0029);color:#ffffff;font-weight:normal">Solver Method:</div>
<div class="t " style="left:61.2px;top:175.8px;font-size:27px;transform:scaleX(0.9924);color:#ffffff;font-weight:normal">Solving Steps:</div>
<div class="t " style="left:61.2px;top:223.8px;font-size:27px;transform:scaleX(0.9915);color:#ffffff;font-weight:normal">Solvering Time:</div>
<div class="t " style="left:61.2px;top:271.8px;font-size:27px;transform:scaleX(0.9885);color:#ffffff;font-weight:normal">Solved Results (Last):</div>
<div class="t " style="left:344.7px;top:128.6px;font-size:27px;transform:scaleX(0.9884);color:#ffffff;font-weight:normal">RungeKuttaFehlberg</div>
<div class="t " style="left:344.7px;top:176.3px;font-size:27px;transform:scaleX(1.0269);color:#ffffff;font-weight:normal">13056</div>
<div class="t " style="left:345.7px;top:224.3px;font-size:27px;transform:scaleX(0.9825);color:#ffffff;font-weight:normal">0.6731 s</div>
<div class="t " style="left:345.7px;top:271.3px;font-size:27px;transform:scaleX(1.0325);color:#ffffff;font-weight:normal">[-3.06016907 -5.15790845 14.06255572]</div>
<div class="t " style="left:37.6px;top:341.3px;font-size:27px;transform:scaleX(1.0026);color:#ffffff;font-weight:normal">Conditions</div>
<div class="t " style="left:60.4px;top:406.8px;font-size:27px;transform:scaleX(1.0265);color:#ffffff;font-weight:normal">Interval start:</div>
<div class="t " style="left:247.4px;top:406.8px;font-size:27px;transform:scaleX(1.0462);color:#ffffff;font-weight:normal">0</div>
<div class="t " style="left:60.4px;top:469.0px;font-size:27px;transform:scaleX(1.0104);color:#ffffff;font-weight:normal">Interval end:</div>
<div class="t " style="left:236.0px;top:469.0px;font-size:27px;transform:scaleX(1.0183);color:#ffffff;font-weight:normal">100</div>
<div class="t " style="left:61.4px;top:531.3px;font-size:27px;transform:scaleX(0.9960);color:#ffffff;font-weight:normal">Step size:</div>
<div class="t " style="left:205.0px;top:531.3px;font-size:27px;transform:scaleX(0.9677);color:#ffffff;font-weight:normal">0.01</div>
<div class="t " style="left:60.4px;top:592.5px;font-size:27px;transform:scaleX(0.9975);color:#ffffff;font-weight:normal">Initial values:</div>
<div class="t " style="left:243.9px;top:592.5px;font-size:27px;transform:scaleX(0.9322);color:#ffffff;font-weight:normal">0,1,0</div>
<div class="t " style="left:61.4px;top:663.1px;font-size:27px;transform:scaleX(0.9959);color:#ffffff;font-weight:normal">Chose Methods:</div>
<div class="t " style="left:36.2px;top:751.4px;font-size:27px;transform:scaleX(0.9924);color:#ffffff;font-weight:normal">Equations</div>
<div class="t " style="left:71.5px;top:822.9px;font-size:25px;transform:scaleX(1.1077);color:#ffffff;font-weight:normal">dx/dt = sigma * (y - x);</div>
<div class="t " style="left:78.8px;top:854.7px;font-size:25px;transform:scaleX(1.1104);color:#ffffff;font-weight:normal">dy/dt = rho * x - y - x * z;</div>
<div class="t " style="left:71.5px;top:886.3px;font-size:25px;transform:scaleX(1.1093);color:#ffffff;font-weight:normal">dz/dt = x * y - beta * z;</div>
<div class="t " style="left:72.3px;top:1050.7px;font-size:25px;transform:scaleX(1.0642);color:#ffffff;font-weight:normal">sigma = 10e0;</div>
<div class="t " style="left:71.3px;top:1082.8px;font-size:25px;transform:scaleX(1.1108);color:#ffffff;font-weight:normal">rho = 28e0;</div>
<div class="t " style="left:71.3px;top:1114.9px;font-size:25px;transform:scaleX(1.1014);color:#ffffff;font-weight:normal">beta = 8e0 / 3e0;</div>
<div class="t " style="left:131.0px;top:1346.3px;font-size:27px;transform:scaleX(0.9799);color:#ececec;font-weight:normal">Check</div>
<div class="t " style="left:377.9px;top:1346.3px;font-size:27px;transform:scaleX(0.9767);color:#ececec;font-weight:normal">Solve</div>
<div class="t " style="left:617.7px;top:1346.3px;font-size:27px;transform:scaleX(0.9648);color:#ececec;font-weight:normal">Reset</div>
<div class="t " style="left:870.6px;top:1346.3px;font-size:27px;transform:scaleX(0.9928);color:#ececec;font-weight:normal">Plot</div>
<div class="t " style="left:553.0px;top:551.7px;font-size:27px;transform:scaleX(0.9902);color:#e4e4e4;font-weight:normal">ForwardEuler</div>
<div class="t " style="left:553.0px;top:588.3px;font-size:27px;transform:scaleX(0.9941);color:#e4e4e4;font-weight:normal">ForwardEulerCromer</div>
<div class="t " style="left:553.0px;top:623.8px;font-size:27px;transform:scaleX(0.9993);color:#e4e4e4;font-weight:normal">RungeKutta4</div>
<div class="t " style="left:553.0px;top:659.3px;font-size:27px;transform:scaleX(0.9973);color:#ffffff;font-weight:normal">RungeKuttaFehlberg</div>
<div class="t " style="left:553.0px;top:695.3px;font-size:27px;transform:scaleX(0.9878);color:#e4e4e4;font-weight:normal">BackwardEuler</div>
<div class="t " style="left:1069.0px;top:67.3px;font-size:27px;transform:scaleX(0.9950);color:#ffffff;font-weight:normal">Plot</div>
<div class="t " style="left:1094.0px;top:1345.6px;font-size:27px;transform:scaleX(0.9755);color:#ffffff;font-weight:normal">X Axis:</div>
<div class="t " style="left:1249.8px;top:1345.6px;font-size:27px;transform:scaleX(0.9071);color:#e6e6e6;font-weight:normal">x</div>
<div class="t " style="left:1316.0px;top:1345.6px;font-size:27px;transform:scaleX(0.9286);color:#e6e6e6;font-weight:normal">y</div>
<div class="t " style="left:1381.5px;top:1345.6px;font-size:27px;transform:scaleX(1.0000);color:#e6e6e6;font-weight:normal">z</div>
<div class="t " style="left:1447.6px;top:1345.6px;font-size:27px;transform:scaleX(1.1250);color:#e6e6e6;font-weight:normal">t</div>
<div class="t " style="left:1918.3px;top:1346.1px;font-size:27px;transform:scaleX(0.9586);color:#ffffff;font-weight:normal">Y Axis:</div>
<div class="t " style="left:2074.0px;top:1346.1px;font-size:27px;transform:scaleX(0.9143);color:#e6e6e6;font-weight:normal">x</div>
<div class="t " style="left:2139.3px;top:1346.1px;font-size:27px;transform:scaleX(0.9500);color:#e6e6e6;font-weight:normal">y</div>
<div class="t " style="left:2205.0px;top:1346.1px;font-size:27px;transform:scaleX(1.0250);color:#e6e6e6;font-weight:normal">z</div>
<div class="t ns" style="left:1291.8px;top:220.2px;font-size:19px;transform:scaleX(1.0532);color:#9a9a9a;font-weight:normal">x-y</div>
<div class="t ns" style="left:1293.0px;top:257.2px;font-size:19px;transform:scaleX(1.0956);color:#9a9a9a;font-weight:normal">x-z</div>
<div class="t" style="left:1159.0px;top:1281.1px;font-size:27px;color:#a0a0a0">-18</div>
<div class="t" style="left:1237.7px;top:1281.1px;font-size:27px;color:#a0a0a0">-16</div>
<div class="t" style="left:1315.8px;top:1281.1px;font-size:27px;color:#a0a0a0">-14</div>
<div class="t" style="left:1395.0px;top:1281.1px;font-size:27px;color:#a0a0a0">-12</div>
<div class="t" style="left:1473.7px;top:1281.1px;font-size:27px;color:#a0a0a0">-10</div>
<div class="t" style="left:1559.9px;top:1281.1px;font-size:27px;color:#a0a0a0">-8</div>
<div class="t" style="left:1638.6px;top:1281.1px;font-size:27px;color:#a0a0a0">-6</div>
<div class="t" style="left:1716.7px;top:1281.1px;font-size:27px;color:#a0a0a0">-4</div>
<div class="t" style="left:1795.9px;top:1281.1px;font-size:27px;color:#a0a0a0">-2</div>
<div class="t" style="left:1879.1px;top:1281.1px;font-size:27px;color:#a0a0a0">0</div>
<div class="t" style="left:1957.8px;top:1281.1px;font-size:27px;color:#a0a0a0">2</div>
<div class="t" style="left:2036.5px;top:1281.1px;font-size:27px;color:#a0a0a0">4</div>
<div class="t" style="left:2115.1px;top:1281.1px;font-size:27px;color:#a0a0a0">6</div>
<div class="t" style="left:2193.8px;top:1281.1px;font-size:27px;color:#a0a0a0">8</div>
<div class="t" style="left:2264.5px;top:1281.1px;font-size:27px;color:#a0a0a0">10</div>
<div class="t" style="left:2343.2px;top:1281.1px;font-size:27px;color:#a0a0a0">12</div>
<div class="t" style="left:2421.4px;top:1281.1px;font-size:27px;color:#a0a0a0">14</div>
<div class="t" style="left:2500.5px;top:1281.1px;font-size:27px;color:#a0a0a0">16</div>
<div class="t" style="left:2579.2px;top:1281.1px;font-size:27px;color:#a0a0a0">18</div>
<div class="t" style="left:2658.4px;top:1281.1px;font-size:27px;color:#a0a0a0">20</div>
<div class="t" style="left:1100.5px;top:1171.9px;font-size:27px;color:#a0a0a0">-20</div>
<div class="t" style="left:1100.5px;top:1023.6px;font-size:27px;color:#a0a0a0">-10</div>
<div class="t" style="left:1124.5px;top:875.3px;font-size:27px;color:#a0a0a0">0</div>
<div class="t" style="left:1109.5px;top:727.0px;font-size:27px;color:#a0a0a0">10</div>
<div class="t" style="left:1109.5px;top:578.8px;font-size:27px;color:#a0a0a0">20</div>
<div class="t" style="left:1109.5px;top:430.5px;font-size:27px;color:#a0a0a0">30</div>
<div class="t" style="left:1109.5px;top:282.2px;font-size:27px;color:#a0a0a0">40</div>
<div class="t" style="left:1109.5px;top:134.0px;font-size:27px;color:#a0a0a0">50</div>
</body></html>
